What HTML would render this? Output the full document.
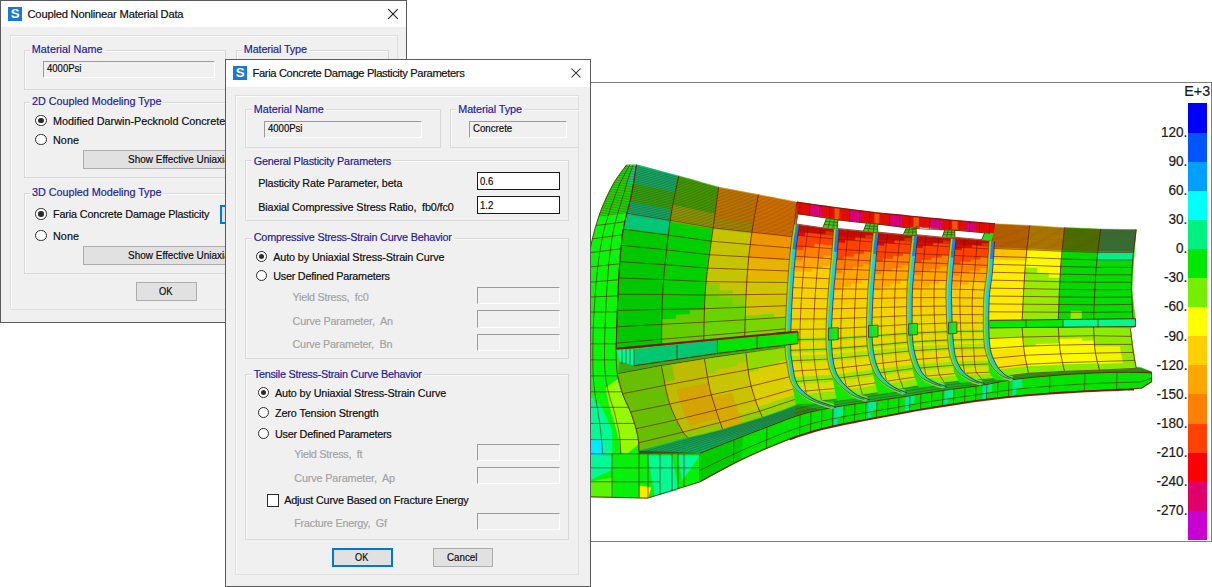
<!DOCTYPE html>
<html lang="en"><head><meta charset="utf-8"><title>Faria Concrete Damage Plasticity Parameters</title>
<style>
*{box-sizing:border-box;margin:0;padding:0}
html,body{width:1212px;height:587px;overflow:hidden;background:#fff}
body{position:relative;font-family:"Liberation Sans",sans-serif;color:#0c0c0c}
.abs,.t,.win,.grp,.fld,.btn,.radio,.chk,.panel,.inp,.icon,.tb{position:absolute}
.t{white-space:nowrap;display:block;-webkit-text-stroke:0.18px currentColor}
.win{background:#f0f0f0;border:1px solid #5b5b5b;overflow:hidden}
.tb{left:0;top:0;right:0;background:#fff}
.panel{border:1px solid #dfdfdf;box-shadow:inset 1px 1px 0 #fbfbfb}
.grp{border:1px solid #d9d9d9;box-shadow:inset 1px 1px 0 #fafafa}
.lbl{color:#23199a;background:#f0f0f0;padding:0 2px;margin-left:-2px}
.fld{border:1px solid;border-color:#9b9b9b #fff #fff #9b9b9b;background:#f0f0f0}
.inp{border:1px solid #1a1a1a;background:#fff}
.btn{background:#e1e1e1;border:1px solid #adadad;text-align:center}
.btn.foc{border:2px solid #0078d7}
.radio{border:1px solid #2b2b2b;border-radius:50%;background:#fff}
.radio.on::after{content:"";position:absolute;left:50%;top:50%;width:5.4px;height:5.4px;margin:-2.7px 0 0 -2.7px;border-radius:50%;background:#2b2b2b}
.chk{border:1px solid #2b2b2b;background:#fff}
.dis{color:#a3a3a3}
.ar{letter-spacing:0}
.icon{background:#1979d6;color:#fff;font-weight:bold;text-align:center}
</style></head>
<body>
<div class="abs" style="left:589.00px;top:82.20px;width:622.60px;height:460.00px;border:1px solid #7d7d7d;background:#fff;overflow:hidden"><svg class="abs" style="left:0;top:0" width="621" height="458" viewBox="590 83.2 621 458"><path d="M590 250l10.4-37.8l12.5-27.4l13.7-18.8l11.2-0.6l7.2 1.8l8 2.2l8 2.3l8 2.4l8 2.3l8 2.4l8 2.4l8 2.4l8 2.4l8 2.1l8 1.8l8 1.6l8 1.5l8 1.4l8 1.4l8 1l8 1.2l8 2l8 1.9l8 1.5l8 1.3l8 1.2l8 1.1l8 1.1l8 1.1l8 1l8 1.1l8 1l8 0.9l8 1l8 0.8l8 0.8l8 0.7l8 0.8l8 0.9l8 0.8l8 0.8l8 0.7l8 0.8l8 0.7l8 0.7l8 0.8l8 0.7l8 0.6l8 0.5l8 0.5l8 0.3l8 0.3l8 0.4l8 0.4l8 0.6l8 0.5l8 0.5l8 0.4l8 0.4l8 0.4l8 0.3l8 0.2l8 0.2l8 0.1l8 0.1l8 0.1l3.2-1.2l-4.5 59.7l3.7 29.5l0 8l-5 1.6l5.8 39.4l15.4 5l0 9l-10 6.3l-22.3 1.3l-49.8 2.4l-49.7 3.8l-37.8 4.2l-52.7 8l-37.3 6.8l-57.7 11.2l-33.6 9.2l-33.7 13.2l-33 15.1l-34 18.5l-52.3 16.3l-57.7-1.3z" fill="#28e10a" stroke="#28e10a" stroke-width=".5"/><path d="M626.6 165l-3.4 4.6l-3.4 4.6l-3.2 4.6l-3 4.9l-2.8 4.9l-2.5 5.1l-2.4 5.2l-2.3 5.2l-2.1 5.3l-2 5.3l-1.8 5.4l-1.7 5.4l-1.6 5.5l-1.4 5.5l-1.3 5.6l-1.2 5.5l-1.2 5.6l-1 5.6l-0.9 5.6l-0.8 5.7l-0.7 5.6l-0.7 5.7l-0.6 5.6l-0.5 5.7l-0.6 5.6l-0.4 5.7l-0.5 5.7l-0.3 5.7l-0.3 5.7l-0.3 5.6l-0.2 5.7l-0.2 5.7l-0.1 5.7l-0.1 5.7l0 5.7l-0.1 5.7l0 5.7l0 5.7l0 5.7l0.1 5.6l0 5.7l0.1 5.7l0.2 5.7l0.1 5.7l12.2-9.1l-0.3-5.4l-0.3-5.4l-0.2-5.5l-0.1-5.4l-0.1-5.4l0-5.5l0.1-5.4l0-5.4l0.1-5.4l0-5.5l0.2-5.4l0.1-5.4l0.2-5.5l0.2-5.4l0.2-5.4l0.3-5.4l0.3-5.4l0.4-5.5l0.3-5.4l0.5-5.4l0.4-5.4l0.5-5.4l0.6-5.4l0.6-5.4l0.7-5.4l0.7-5.4l0.8-5.3l0.9-5.4l1-5.3l1.1-5.3l1.2-5.3l1.4-5.2l1.6-5.2l1.6-5.2l1.7-5.2l1.8-5.1l1.9-5l2-5.1l2-5l2.1-4.9l2.2-4.8l2.5-4.8l2.5-4.6l2.5-4.7zM629.9 165l-2.5 4.7l-2.5 4.6l-2.5 4.8l-2.2 4.8l-2.1 4.9l-2 5l-2 5.1l-1.9 5l-1.8 5.1l-1.7 5.2l-1.6 5.2l-1.6 5.2l-1.4 5.2l-1.2 5.3l-1.1 5.3l-1 5.3l-0.9 5.4l-0.8 5.3l-0.7 5.4l-0.7 5.4l-0.6 5.4l-0.6 5.4l-0.5 5.4l-0.4 5.4l-0.5 5.4l-0.3 5.4l-0.4 5.5l-0.3 5.4l-0.3 5.4l-0.2 5.4l-0.2 5.4l-0.2 5.5l-0.1 5.4l-0.2 5.4l0 5.5l-0.1 5.4l0 5.4l-0.1 5.4l0 5.5l0.1 5.4l0.1 5.4l0.2 5.5l0.3 5.4l0.3 5.4l0.5 5.4l0.7 5.3l0.7 5.4l0.7 5.3l0.9 5.2l1 5.3l1 5.3l0.9 5.3l0.9 5.3l0.9 5.3l0.9 5.4l0.9 5.3l0.8 5.4l0.6 5.4l0.7 5.4l0.5 5.4l16.4-14.4l-0.4-5.1l-0.4-5.2l-0.5-5.1l-0.8-5.1l-1-5.1l-1.1-5l-1.2-5l-1.3-5l-1.3-4.9l-1.5-4.9l-1.5-4.8l-1.5-4.9l-1.3-5l-1.1-5l-1-5l-0.8-5.1l-0.6-5.1l-0.5-5.1l-0.3-5.2l-0.1-5.1l0-5.2l0-5.2l0-5.1l0.1-5.2l0.1-5.2l0.1-5.1l0.1-5.2l0.2-5.2l0.1-5.1l0.2-5.2l0.3-5.2l0.2-5.1l0.3-5.2l0.2-5.1l0.3-5.2l0.4-5.1l0.3-5.2l0.4-5.2l0.5-5.1l0.5-5.1l0.5-5.2l0.6-5.1l0.6-5.1l0.7-5.1l0.8-5.1l0.8-5.1l1.1-5.1l1.2-5l1.3-5l1.4-5l1.5-4.9l1.6-4.9l1.5-5l1.5-4.9l1.4-4.9l1.5-4.9l1.5-4.8l1.6-4.8l1.7-4.7l1.6-4.8zM626.8 184.1l-1.5 4.9l-1.4 4.9l-1.5 4.9l-1.5 5l-1.6 4.9l-1.5 4.9l-1.4 5l-1.3 5l-1.2 5l-1.1 5.1l-0.8 5.1l-0.8 5.1l-0.7 5.1l-0.6 5.1l-0.6 5.1l-0.5 5.2l-0.5 5.1l-0.5 5.1l-0.4 5.2l-0.3 5.2l-0.4 5.1l-0.3 5.2l-0.2 5.1l-0.3 5.2l-0.2 5.1l-0.3 5.2l-0.2 5.2l-0.1 5.1l-0.2 5.2l-0.1 5.2l-0.1 5.1l-0.1 5.2l-0.1 5.2l0 5.1l0 5.2l0 5.2l0.1 5.1l0.3 5.2l0.5 5.1l0.6 5.1l12.2-9.1l-0.9-4.8l-0.5-4.9l-0.4-4.9l-0.2-4.9l0-4.9l0-4.9l0-4.9l0.1-4.9l0.2-4.9l0.1-4.9l0.2-4.9l0.1-4.9l0.2-4.9l0.2-4.9l0.2-4.9l0.2-4.9l0.2-4.9l0.2-4.9l0.2-4.9l0.3-4.9l0.3-4.9l0.2-4.9l0.4-4.9l0.3-4.9l0.4-4.9l0.4-4.9l0.5-4.9l0.5-4.8l0.5-4.9l0.7-4.9l0.8-4.8l1-4.8l1.2-4.8l1.2-4.7l1.2-4.8l1.3-4.7l1.1-4.8l1-4.8l0.9-4.8l0.9-4.8zM621.9 458l0.4 5.2l0.4 5.1l16.3-14.3l-0.1-4.9l-0.2-4.9z" fill="#0af50a" stroke="#0af50a" stroke-width=".5"/><path d="M581.5 406.4l0.2 5.7l0.2 5.7l13-9.8l-0.7-5.3l-0.5-5.4zM586.8 474.5l0.8 5.6l0.8 5.6l0.8 5.7l16.6-14.1l-0.7-5.4l-0.6-5.4l-0.8-5.4z" fill="#00fa96" stroke="#00fa96" stroke-width=".5"/><path d="M581.9 417.8l0.3 5.7l0.3 5.6l0.3 5.7l14.4-10.9l-0.9-5.2l-0.7-5.3l-0.7-5.4zM585.4 463.2l0.6 5.6l0.8 5.7l16.9-13.4l-0.9-5.3l-0.9-5.4zM589.2 491.4l0.8 5.6l16.3-14.3l-0.5-5.4z" fill="#00f028" stroke="#00f028" stroke-width=".5"/><path d="M582.8 434.8l0.4 5.7l0.5 5.7l0.5 5.6l0.5 5.7l0.7 5.7l16.5-12.8l-0.9-5.3l-0.9-5.3l-0.9-5.3l-1-5.3l-1-5.3z" fill="#00f0fa" stroke="#00f0fa" stroke-width=".5"/><path d="M633.2 165l-1.6 4.8l-1.7 4.7l-1.6 4.8l-1.5 4.8l6.6 0.3l0.8-4.9l0.7-4.8l0.8-4.9l0.8-4.8z" fill="#00e896" stroke="#00e896" stroke-width=".5"/><path d="M606 388.1l0.8 5.1l1 5l1.1 5l1.3 5l1.5 4.9l1.5 4.8l1.5 4.9l1.3 4.9l1.3 5l1.2 5l1.1 5l1 5.1l0.8 5.1l0.5 5.1l16.8-13.8l-0.4-4.9l-0.8-4.8l-1.2-4.8l-1.3-4.7l-1.5-4.7l-1.6-4.6l-1.7-4.6l-2-4.5l-2.1-4.4l-2-4.5l-1.8-4.6l-1.6-4.6l-1.4-4.7l-1.1-4.8z" fill="#96fa00" stroke="#96fa00" stroke-width=".5"/><path d="M590 454l49 0l61 0l0 28l-52.3 16.3l-57.7-1.3z" fill="#05f00a" stroke="#05f00a" stroke-width=".5"/><path d="M590 456l22 0l0 14l-22 10zM590 400l10 5l12 25l0 24l-8 1l-2-15l-12 0zM648 456l24 0l6 34l-23 6zM678 456l21 0l-9 14l-8 10z" fill="#00fa96" stroke="#00fa96" stroke-width=".5"/><path d="M590 440l12 0l2 15l-14 1z" fill="#00ebfa" stroke="#00ebfa" stroke-width=".5"/><path d="M640 486l11 2l-3 10l-8 0z" fill="#faeb00" stroke="#faeb00" stroke-width=".5"/><path d="M590 482l22-4l0 19l-22 0z" fill="#5af500" stroke="#5af500" stroke-width=".5"/><path d="M636.5 165l-0.7 4.6l-0.8 4.6l-0.7 4.6l-0.8 4.6l13.9 3.1l0.8-4.4l0.8-4.5l0.8-4.4l0.8-4.5zM630 201.7l-1.2 4.5l-1.2 4.5l-1.1 4.5l14.5 2.4l0.9-4.5l1-4.4l1.1-4.4zM650.6 168.7l-0.8 4.5l-0.8 4.4l-0.8 4.5l-0.8 4.4l13.9 3.2l0.9-4.4l0.8-4.3l0.9-4.3l0.8-4.3zM644 204.3l-1.1 4.4l-1 4.4l-0.9 4.5l14.5 2.3l0.8-4.4l0.8-4.3l0.9-4.3zM664.7 172.4l-0.8 4.3l-0.9 4.3l-0.8 4.3l-0.9 4.4l13.9 3.1l0.9-4.2l0.9-4.2l0.9-4.1l0.9-4.2zM658 206.9l-0.9 4.3l-0.8 4.3l-0.8 4.4l14.5 2.3l0.6-4.3l0.6-4.2l0.8-4.2z" fill="#00b973" stroke="#00b973" stroke-width=".5"/><path d="M633.5 183.4l-0.8 4.6l-0.8 4.6l-0.9 4.6l-1 4.5l14 2.6l0.9-4.4l0.9-4.5l0.8-4.4l0.8-4.5zM647.4 186.5l-0.8 4.5l-0.8 4.4l-0.9 4.5l-0.9 4.4l14 2.6l0.8-4.3l0.9-4.3l0.8-4.3l0.8-4.3zM661.3 189.7l-0.8 4.3l-0.8 4.3l-0.9 4.3l-0.8 4.3l14 2.6l0.7-4.2l0.8-4.2l0.9-4.1l0.8-4.2z" fill="#23b214" stroke="#23b214" stroke-width=".5"/><path d="M626.5 215.2l-1.2 4.6l-1.1 4.5l-0.9 4.6l15 2l0.8-4.5l0.9-4.4l1-4.4zM641 217.6l-1 4.4l-0.9 4.4l-0.8 4.5l15 1.9l0.7-4.3l0.7-4.3l0.8-4.3zM655.5 219.9l-0.8 4.3l-0.7 4.3l-0.7 4.3l15 2l0.6-4.2l0.5-4.2l0.6-4.2z" fill="#00c676" stroke="#00c676" stroke-width=".5"/><path d="M623.3 228.9l-0.7 4.6l-0.6 4.6l-0.5 4.6l-0.5 4.7l-0.4 4.6l-0.4 4.7l-0.3 4.6l-0.4 4.7l-0.3 4.6l-0.3 4.7l-0.3 4.6l-0.2 4.7l-0.2 4.6l-0.2 4.7l-0.2 4.6l-0.2 4.7l-0.1 4.7l-0.2 4.6l-0.1 4.7l-0.2 4.6l-0.1 4.7l-0.2 4.7l-0.1 4.6l-0.1 4.7l-0.2 4.6l-0.1 4.7l15.1-1.5l0.1-4.5l0.1-4.5l0.1-4.5l0.1-4.6l0.2-4.5l0.1-4.5l0.1-4.6l0.1-4.5l0.2-4.5l0.1-4.5l0.2-4.6l0.2-4.5l0.2-4.5l0.2-4.5l0.3-4.6l0.3-4.5l0.3-4.5l0.3-4.5l0.4-4.5l0.4-4.5l0.4-4.5l0.5-4.6l0.4-4.5l0.5-4.5l0.6-4.5l0.6-4.4zM638.3 230.9l-0.6 4.4l-0.6 4.5l-0.5 4.5l-0.4 4.5l-0.5 4.6l-0.4 4.5l-0.4 4.5l-0.4 4.5l-0.3 4.5l-0.3 4.5l-0.3 4.5l-0.3 4.6l-0.2 4.5l-0.2 4.5l-0.2 4.5l-0.2 4.6l-0.1 4.5l-0.2 4.5l-0.1 4.5l-0.1 4.6l-0.1 4.5l-0.2 4.5l-0.1 4.6l-0.1 4.5l-0.1 4.5l-0.1 4.5l15-1.4l0.1-4.4l0.1-4.4l0.1-4.4l0.1-4.4l0.1-4.4l0.1-4.4l0.1-4.4l0.2-4.4l0.1-4.4l0.1-4.4l0.2-4.4l0.2-4.4l0.2-4.4l0.3-4.3l0.2-4.4l0.4-4.4l0.3-4.4l0.4-4.4l0.4-4.4l0.4-4.3l0.4-4.4l0.5-4.4l0.4-4.4l0.5-4.3l0.5-4.4l0.6-4.4zM653.3 232.8l-0.6 4.4l-0.5 4.4l-0.5 4.3l-0.4 4.4l-0.5 4.4l-0.4 4.4l-0.4 4.3l-0.4 4.4l-0.4 4.4l-0.3 4.4l-0.4 4.4l-0.2 4.4l-0.3 4.3l-0.2 4.4l-0.2 4.4l-0.2 4.4l-0.1 4.4l-0.1 4.4l-0.2 4.4l-0.1 4.4l-0.1 4.4l-0.1 4.4l-0.1 4.4l-0.1 4.4l-0.1 4.4l-0.1 4.4l15.1-1.5l0.1-4.3l0.1-4.2l0-4.3l0.1-4.3l0.1-4.2l0.1-4.3l0.1-4.2l0.1-4.3l0.1-4.3l0.1-4.2l0.2-4.3l0.2-4.2l0.2-4.3l0.3-4.3l0.3-4.2l0.3-4.3l0.4-4.2l0.4-4.3l0.4-4.2l0.5-4.2l0.4-4.3l0.5-4.2l0.4-4.3l0.5-4.2l0.5-4.2l0.5-4.3z" fill="#00c800" stroke="#00c800" stroke-width=".5"/><path d="M678.8 176.1l-0.9 4.2l-0.9 4.1l-0.9 4.2l-0.9 4.2l-0.8 4.2l-0.9 4.1l-0.8 4.2l14.1 3l0.7-4.1l0.8-4.1l0.7-4l0.8-4.1l0.7-4l0.8-4.1l0.8-4.1zM692.1 179.8l-0.8 4.1l-0.8 4.1l-0.7 4l-0.8 4.1l-0.7 4l-0.8 4.1l-0.7 4.1l14.1 2.9l0.7-3.9l0.6-4l0.6-3.9l0.6-4l0.7-3.9l0.6-4l0.6-3.9zM705.3 183.6l-0.6 3.9l-0.6 4l-0.7 3.9l-0.6 4l-0.6 3.9l-0.6 4l-0.7 3.9l14.1 3l0.6-3.9l0.5-3.8l0.5-3.8l0.5-3.9l0.5-3.8l0.5-3.9l0.5-3.8z" fill="#32b200" stroke="#32b200" stroke-width=".5"/><path d="M672.7 205.3l-0.7 4.2l-0.8 4.2l-0.6 4.2l-0.6 4.3l14.3 2.4l0.6-4.1l0.6-4.1l0.7-4l0.6-4.1zM686.8 208.3l-0.6 4.1l-0.7 4l-0.6 4.1l-0.6 4.1l14.3 2.5l0.6-4l0.6-3.9l0.5-4l0.6-4zM700.9 211.2l-0.6 4l-0.5 4l-0.6 3.9l-0.6 4l14.4 2.4l0.5-3.8l0.5-3.8l0.5-3.9l0.5-3.8z" fill="#87ac00" stroke="#87ac00" stroke-width=".5"/><path d="M670 222.2l-0.6 4.2l-0.5 4.2l-0.6 4.2l-0.5 4.3l-0.5 4.2l-0.5 4.2l-0.4 4.3l-0.5 4.2l-0.4 4.3l-0.5 4.2l-0.4 4.2l-0.4 4.3l-0.4 4.2l-0.3 4.3l-0.3 4.2l-0.3 4.3l-0.2 4.3l-0.2 4.2l-0.2 4.3l-0.1 4.2l-0.1 4.3l-0.1 4.3l-0.1 4.2l14.1-0.5l0.1-4.2l0.1-4.1l0.1-4.1l0.1-4.2l0.2-4.1l0.2-4.1l0.3-4.1l0.2-4.2l0.4-4.1l0.3-4.1l0.4-4.1l0.5-4.1l0.4-4.2l0.4-4.1l0.5-4.1l0.4-4.1l0.5-4.1l0.5-4.1l0.5-4.1l0.6-4.1l0.5-4.1l0.6-4.1l0.5-4.1zM684.3 224.6l-0.5 4.1l-0.6 4.1l-0.5 4.1l-0.6 4.1l-0.5 4.1l-0.5 4.1l-0.5 4.1l-0.4 4.1l-0.5 4.1l-0.4 4.1l-0.4 4.2l-0.5 4.1l-0.4 4.1l-0.3 4.1l-0.4 4.1l-0.2 4.2l-0.3 4.1l-0.2 4.1l-0.2 4.1l-0.1 4.2l-0.1 4.1l-0.1 4.1l14.1-0.4l0.1-4l0.1-4l0.2-4l0.1-4l0.2-4l0.3-4l0.3-4l0.3-4l0.4-4l0.4-3.9l0.5-4l0.4-4l0.5-4l0.4-4l0.5-3.9l0.5-4l0.5-4l0.6-3.9l0.5-4l0.5-4l0.6-4l0.5-3.9zM698.6 227.1l-0.5 3.9l-0.6 4l-0.5 4l-0.5 4l-0.6 3.9l-0.5 4l-0.5 4l-0.5 3.9l-0.4 4l-0.5 4l-0.4 4l-0.5 4l-0.4 3.9l-0.4 4l-0.3 4l-0.3 4l-0.3 4l-0.2 4l-0.1 4l-0.2 4l-0.1 4l14.1-0.3l0.1-3.9l0.2-3.8l0.2-3.9l0.2-3.9l0.2-3.8l0.3-3.9l0.4-3.9l0.4-3.8l0.4-3.9l0.5-3.8l0.5-3.9l0.4-3.8l0.5-3.8l0.5-3.9l0.5-3.8l0.6-3.9l0.5-3.8l0.5-3.8l0.6-3.9l0.5-3.8l0.6-3.9z" fill="#00d000" stroke="#00d000" stroke-width=".5"/><path d="M661.9 319.8l-0.1 4.3l-0.1 4.2l-0.1 4.3l0 4.3l-0.1 4.2l-0.1 4.3l14.1-1.3l0.1-4.2l0.1-4.1l0-4.1l0.1-4.2l0.1-4.1l0.1-4.1zM676.1 315.1l-0.1 4.2l-0.1 4.1l-0.1 4.1l-0.1 4.2l0 4.1l-0.1 4.1l-0.1 4.2l14.1-1.4l0.1-4l0.1-4l0-4l0.1-4l0.1-4l0.1-4l0.1-4zM690.3 310.7l-0.1 4l-0.1 4l-0.1 4l-0.1 4l-0.1 4l0 4l-0.1 4l-0.1 4l14.1-1.3l0.1-3.9l0.1-3.8l0-3.9l0.1-3.9l0.1-3.9l0.1-3.8l0.1-3.9l0.1-3.9z" fill="#64cd00" stroke="#64cd00" stroke-width=".5"/><path d="M718.6 187.3l-0.5 3.8l-0.5 3.9l-0.5 3.8l-0.5 3.9l-0.5 3.8l-0.5 3.8l-0.6 3.9l-0.5 3.8l13 1.7l0.5-3.7l0.6-3.8l0.5-3.7l0.6-3.7l0.5-3.8l0.6-3.7l0.5-3.8l0.6-3.7zM731.9 189.8l-0.6 3.7l-0.5 3.8l-0.6 3.7l-0.5 3.8l-0.6 3.7l-0.5 3.7l-0.6 3.8l-0.5 3.7l13 1.7l0.5-3.6l0.6-3.7l0.6-3.6l0.6-3.7l0.6-3.6l0.6-3.6l0.5-3.7l0.6-3.6zM745.1 192.3l-0.6 3.6l-0.5 3.7l-0.6 3.6l-0.6 3.6l-0.6 3.7l-0.6 3.6l-0.6 3.7l-0.5 3.6l12.9 1.7l0.6-3.6l0.6-3.5l0.7-3.5l0.6-3.6l0.6-3.5l0.6-3.5l0.7-3.6l0.6-3.5z" fill="#c88c00" stroke="#c88c00" stroke-width=".5"/><path d="M714.5 218l-0.5 3.9l-0.5 3.8l-0.5 3.8l12.9 1.4l0.5-3.7l0.6-3.7l0.5-3.8zM727.5 219.7l-0.5 3.8l-0.6 3.7l-0.5 3.7l12.9 1.4l0.6-3.6l0.5-3.7l0.6-3.6zM740.5 221.4l-0.6 3.6l-0.5 3.7l-0.6 3.6l12.9 1.4l0.6-3.5l0.5-3.6l0.6-3.5z" fill="#a5a000" stroke="#a5a000" stroke-width=".5"/><path d="M713 229.5l-0.6 3.9l-0.5 3.8l-0.6 3.9l-0.5 3.8l-0.5 3.8l-0.6 3.9l-0.5 3.8l-0.5 3.9l-0.5 3.8l-0.4 3.8l-0.5 3.9l-0.5 3.8l-0.4 3.9l-0.4 3.8l13.6 0.2l0.3-3.8l0.4-3.8l0.4-3.7l0.4-3.8l0.4-3.7l0.4-3.8l0.4-3.7l0.5-3.8l0.5-3.7l0.5-3.8l0.5-3.7l0.5-3.8l0.6-3.7l0.5-3.8zM725.9 230.9l-0.5 3.8l-0.6 3.7l-0.5 3.8l-0.5 3.7l-0.5 3.8l-0.5 3.7l-0.5 3.8l-0.4 3.7l-0.4 3.8l-0.4 3.7l-0.4 3.8l-0.4 3.7l-0.4 3.8l-0.3 3.8l-0.4 3.7l-0.2 3.8l13.6-0.1l0.2-3.6l0.3-3.7l0.3-3.7l0.3-3.7l0.3-3.6l0.4-3.7l0.3-3.7l0.4-3.6l0.4-3.7l0.4-3.7l0.4-3.6l0.5-3.7l0.5-3.6l0.5-3.7l0.5-3.6l0.5-3.7zM738.8 232.3l-0.5 3.7l-0.5 3.6l-0.5 3.7l-0.5 3.6l-0.5 3.7l-0.4 3.6l-0.4 3.7l-0.4 3.7l-0.4 3.6l-0.3 3.7l-0.4 3.7l-0.3 3.6l-0.3 3.7l-0.3 3.7l-0.3 3.7l-0.2 3.6l-0.2 3.7l13.7-0.2l0.2-3.5l0.2-3.6l0.2-3.6l0.2-3.6l0.2-3.6l0.3-3.5l0.3-3.6l0.3-3.6l0.3-3.6l0.3-3.6l0.4-3.5l0.4-3.6l0.4-3.6l0.5-3.5l0.4-3.6l0.5-3.5l0.5-3.6z" fill="#c4c400" stroke="#c4c400" stroke-width=".5"/><path d="M706 283.3l-0.4 3.9l-0.3 3.9l-0.2 3.8l13.6-0.1l0.3-3.8l0.2-3.8l0.4-3.7zM719 291l-0.3 3.8l-0.2 3.7l13.7-0.2l0.2-3.7l0.2-3.7zM732.4 294.6l-0.2 3.7l-0.1 3.7l-0.2 3.7l13.7-0.5l0.2-3.6l0.1-3.6l0.2-3.6z" fill="#8ccd00" stroke="#8ccd00" stroke-width=".5"/><path d="M705.1 294.9l-0.2 3.9l-0.2 3.9l-0.2 3.8l-0.1 3.9l-0.1 3.9l-0.1 3.9l-0.1 3.8l-0.1 3.9l-0.1 3.9l0 3.9l-0.1 3.8l-0.1 3.9l13.7-1.3l0.1-3.8l0-3.8l0.1-3.7l0.1-3.8l0.1-3.8l0.1-3.8l0.1-3.7l0.1-3.8l0.1-3.8l0.2-3.8l0.1-3.8l0.2-3.7zM718.5 298.5l-0.1 3.8l-0.2 3.8l-0.1 3.8l-0.1 3.8l-0.1 3.7l-0.1 3.8l-0.1 3.8l-0.1 3.8l-0.1 3.7l0 3.8l-0.1 3.8l13.6-1.3l0.1-3.7l0.1-3.7l0.1-3.7l0.1-3.6l0.1-3.7l0.1-3.7l0.1-3.7l0.1-3.7l0.1-3.6l0.2-3.7l0.1-3.7zM731.9 305.7l-0.1 3.6l-0.1 3.7l-0.1 3.7l-0.1 3.7l-0.1 3.7l-0.1 3.6l-0.1 3.7l-0.1 3.7l-0.1 3.7l13.7-1.3l0.1-3.6l0.1-3.6l0.1-3.6l0.1-3.6l0.1-3.5l0.1-3.6l0.1-3.6l0.1-3.6l0.1-3.6z" fill="#69d400" stroke="#69d400" stroke-width=".5"/><path d="M758.4 194.8l-0.6 3.5l-0.7 3.6l-0.6 3.5l-0.6 3.5l-0.6 3.6l-0.7 3.5l-0.6 3.5l-0.6 3.6l-0.6 3.5l-0.5 3.6l-0.6 3.5l13.5 1.5l0.6-3.5l0.5-3.4l0.6-3.5l0.5-3.4l0.6-3.5l0.5-3.4l0.6-3.4l0.5-3.5l0.5-3.4l0.6-3.5l0.5-3.4zM771.2 197.3l-0.5 3.4l-0.6 3.5l-0.5 3.4l-0.5 3.5l-0.6 3.4l-0.5 3.4l-0.6 3.5l-0.5 3.4l-0.6 3.5l-0.5 3.4l-0.6 3.5l13.5 1.4l0.6-3.3l0.5-3.4l0.5-3.3l0.6-3.4l0.4-3.3l0.5-3.4l0.4-3.3l0.5-3.4l0.4-3.3l0.5-3.4l0.4-3.4zM784 199.7l-0.4 3.4l-0.5 3.4l-0.4 3.3l-0.5 3.4l-0.4 3.3l-0.5 3.4l-0.4 3.3l-0.6 3.4l-0.5 3.3l-0.5 3.4l-0.6 3.3l13.5 1.5l0.6-3.2l0.5-3.3l0.5-3.2l0.5-3.3l0.4-3.3l0.3-3.2l0.4-3.3l0.4-3.3l0.3-3.3l0.4-3.2l0.3-3.3z" fill="#e48a00" stroke="#e48a00" stroke-width=".5"/><path d="M751.7 233.7l-0.5 3.6l-0.5 3.5l-0.4 3.6l-0.5 3.5l-0.4 3.6l-0.4 3.6l-0.4 3.5l13.8 0.8l0.3-3.4l0.4-3.5l0.3-3.5l0.4-3.4l0.5-3.5l0.4-3.5l0.5-3.4zM765.2 235.2l-0.5 3.4l-0.4 3.5l-0.5 3.5l-0.4 3.4l-0.3 3.5l-0.4 3.5l-0.3 3.4l13.8 0.8l0.3-3.3l0.2-3.4l0.3-3.4l0.4-3.4l0.4-3.3l0.4-3.4l0.5-3.4zM778.7 236.6l-0.5 3.4l-0.4 3.4l-0.4 3.3l-0.4 3.4l-0.3 3.4l-0.2 3.4l-0.3 3.3l13.8 0.8l0.2-3.3l0.2-3.2l0.3-3.3l0.3-3.3l0.3-3.3l0.5-3.2l0.4-3.3z" fill="#ee9600" stroke="#ee9600" stroke-width=".5"/><path d="M748.6 258.6l-0.3 3.6l-0.3 3.6l-0.3 3.6l-0.3 3.6l-0.3 3.5l-0.2 3.6l14.1 0.2l0.2-3.5l0.2-3.4l0.2-3.5l0.3-3.5l0.2-3.5l0.3-3.5zM762.4 259.4l-0.3 3.5l-0.2 3.5l-0.3 3.5l-0.2 3.5l-0.2 3.4l-0.2 3.5l14.2 0.2l0.1-3.3l0.2-3.4l0.1-3.4l0.2-3.4l0.2-3.4l0.2-3.4zM776.2 260.2l-0.2 3.4l-0.2 3.4l-0.2 3.4l-0.1 3.4l-0.2 3.4l-0.1 3.3l14.1 0.3l0.1-3.3l0.1-3.3l0.1-3.3l0.1-3.3l0.2-3.3l0.1-3.3z" fill="#e8b400" stroke="#e8b400" stroke-width=".5"/><path d="M746.9 280.1l-0.2 3.6l-0.2 3.6l-0.2 3.6l-0.2 3.5l-0.2 3.6l-0.1 3.6l-0.2 3.6l-0.1 3.6l-0.1 3.6l-0.1 3.6l14.3-0.8l0.1-3.5l0.1-3.5l0.1-3.5l0.2-3.5l0.1-3.4l0.2-3.5l0.1-3.5l0.2-3.5l0.1-3.5l0.2-3.5zM761 280.3l-0.2 3.5l-0.1 3.5l-0.2 3.5l-0.1 3.5l-0.2 3.5l-0.1 3.4l-0.2 3.5l-0.1 3.5l-0.1 3.5l-0.1 3.5l14.3-0.8l0.1-3.4l0.1-3.3l0.2-3.4l0.1-3.4l0.1-3.4l0.1-3.4l0.2-3.4l0.1-3.4l0.1-3.4l0.2-3.4zM775.2 280.5l-0.2 3.4l-0.1 3.4l-0.1 3.4l-0.2 3.4l-0.1 3.4l-0.1 3.4l-0.1 3.4l-0.2 3.4l-0.1 3.3l-0.1 3.4l-0.1 3.4l14.3-0.8l0.1-3.3l0.1-3.3l0.1-3.3l0.2-3.3l0.1-3.3l0.1-3.3l0.1-3.3l0.1-3.3l0.1-3.3l0.1-3.2l0.1-3.3z" fill="#d0c600" stroke="#d0c600" stroke-width=".5"/><path d="M745.3 316l-0.1 3.6l-0.1 3.5l-0.1 3.6l-0.1 3.6l-0.1 3.6l-0.1 3.6l14.3-1.4l0.1-3.5l0.1-3.4l0.1-3.5l0.1-3.5l0.1-3.5l0.1-3.5zM759.6 315.2l-0.1 3.5l-0.1 3.5l-0.1 3.5l-0.1 3.5l-0.1 3.4l-0.1 3.5l14.2-1.3l0.1-3.4l0.2-3.4l0.1-3.4l0.1-3.4l0.1-3.4l0.1-3.4zM773.8 317.8l-0.1 3.4l-0.1 3.4l-0.1 3.4l-0.2 3.4l-0.1 3.4l14.3-1.4l0.1-3.3l0.1-3.3l0.1-3.3l0.2-3.3l0.1-3.2z" fill="#78d700" stroke="#78d700" stroke-width=".5"/><path d="M626.6 165l-2.9 3.9l-2.9 3.9l-2.8 3.9l-2.6 3.9l-2.3 3.9l-2.1 3.9l-2 3.9l-1.9 3.9l-1.7 3.8l-1.7 3.9l-1.6 3.8l-1.4 3.8l-1.4 3.8l-1.3 3.8l-1.2 3.7l-1.1 3.7l-1.1 3.8l-0.9 3.6l-1 3.7l-0.8 3.6l-0.8 3.7l-0.8 3.6l-0.7 3.5l-0.7 3.6l-0.6 3.5l-0.6 3.5l-0.5 3.5l-0.5 3.5l-0.4 3.4l-0.5 3.4l-0.4 3.4l-0.4 3.4l-0.3 3.4l-0.4 3.4l-0.3 3.3l-0.3 3.4l-0.3 3.3l-0.3 3.3l-0.2 3.3l-0.3 3.4l-0.2 3.3l-0.2 3.4l-0.2 3.6l-0.2 3.6l-0.1 3.7l-0.2 3.6l-0.1 3.6l-0.1 3.6l-0.1 3.6l0 3.6l-0.1 3.6l0 3.7l-0.1 3.6l0 3.6l0 3.6l0 3.6l0 3.6l0 3.6l0 3.6l0.1 3.7l0 3.6l0 3.6l0.1 3.6l0.1 3.6l0 3.6l0.1 3.6l0.1 3.6l0.1 3.6l0.2 3.7l0.1 3.6l0.2 3.6l0.1 3.6l0.2 3.6l0.3 3.6l0.2 3.6l0.3 3.7l0.2 3.6l0.3 3.6l0.4 3.6l0.3 3.6M636.5 165l-0.6 3.6l-0.6 3.6l-0.5 3.6l-0.6 3.6l-0.6 3.7l-0.6 3.6l-0.7 3.6l-0.6 3.6l-0.8 3.6l-0.8 3.6l-0.9 3.6l-1 3.6l-0.9 3.7l-0.9 3.6l-0.9 3.6l-0.9 3.6l-0.8 3.6l-0.7 3.6l-0.5 3.6l-0.5 3.6l-0.4 3.7l-0.4 3.6l-0.3 3.6l-0.3 3.6l-0.4 3.6l-0.3 3.6l-0.2 3.6l-0.3 3.6l-0.3 3.7l-0.2 3.6l-0.2 3.6l-0.2 3.6l-0.2 3.6l-0.1 3.6l-0.2 3.6l-0.2 3.7l-0.1 3.6l-0.2 3.6l-0.1 3.6l-0.1 3.6l-0.2 3.6l-0.1 3.6l-0.2 3.6l-0.1 3.6l-0.1 3.7l-0.1 3.6l-0.1 3.6l-0.1 3.6l-0.1 3.6l-0.1 3.6l0 3.6l0 3.7l0 3.6l0 3.6l0.2 3.6l0.2 3.6l0.3 3.6l0.5 3.6l0.6 3.6l0.8 3.7l1 3.6l1.1 3.6l1.2 3.6l1.3 3.6l1.6 3.6l1.7 3.6l1.7 3.6l1.6 3.6l1.4 3.7l1.3 3.6l1.2 3.6l1.2 3.6l1 3.6l0.9 3.6l0.8 3.6l0.5 3.7l0.3 3.6l0.2 3.6l0.1 3.6l0.1 3.6M590 497l57.7 1.3l52.3-16.3l0-28M636.5 165l-1.5 9.2l-1.5 9.2l-1.6 9.2l-1.9 9.1l-2.4 9l-2.3 9.1l-2 9.1l-1.3 9.2l-1 9.3l-0.8 9.3l-0.7 9.3l-0.6 9.3l-0.5 9.3l-0.4 9.3l-0.4 9.3l-0.3 9.3l-0.3 9.3l-0.3 9.4l-0.2 9.3l-0.3 9.3M678.8 176.1l-1.8 8.3l-1.8 8.4l-1.7 8.3l-1.5 8.4l-1.4 8.4l-1.2 8.5l-1.1 8.4l-1 8.5l-0.9 8.5l-0.9 8.5l-0.9 8.4l-0.8 8.5l-0.6 8.5l-0.5 8.6l-0.4 8.5l-0.2 8.5l-0.2 8.5l-0.2 8.5l-0.1 8.6l-0.2 8.5M718.6 187.3l-1 7.7l-1 7.7l-1 7.6l-1.1 7.7l-1 7.7l-1.1 7.7l-1.1 7.7l-1 7.6l-1.1 7.7l-1 7.7l-0.9 7.7l-0.9 7.7l-0.8 7.7l-0.5 7.7l-0.4 7.8l-0.3 7.7l-0.2 7.8l-0.2 7.7l-0.1 7.8l-0.2 7.7M758.4 194.8l-1.3 7.1l-1.2 7l-1.3 7.1l-1.2 7.1l-1.1 7.1l-1.1 7.1l-0.9 7.1l-0.9 7.1l-0.8 7.1l-0.6 7.2l-0.6 7.2l-0.5 7.1l-0.4 7.2l-0.4 7.1l-0.3 7.2l-0.3 7.2l-0.2 7.2l-0.2 7.1l-0.2 7.2l-0.2 7.2M796.8 202.2l-0.7 6.5l-0.7 6.6l-0.7 6.5l-0.9 6.6l-1 6.5l-1 6.5l-0.8 6.5l-0.6 6.6l-0.4 6.5l-0.3 6.6l-0.2 6.6l-0.2 6.6l-0.2 6.5l-0.2 6.6l-0.2 6.6l-0.3 6.6l-0.2 6.6l-0.2 6.5l-0.3 6.6l-0.2 6.6" fill="none" stroke="#6e1400" stroke-width="0.88" stroke-opacity="0.9"/><path d="M629.9 165l-2.1 3.8l-2.2 3.8l-2 3.8l-1.9 3.8l-1.8 3.8l-1.6 3.8l-1.5 3.8l-1.5 3.8l-1.4 3.8l-1.4 3.8l-1.3 3.7l-1.3 3.8l-1.3 3.7l-1.1 3.7l-1.1 3.7l-1.1 3.7l-1 3.7l-0.8 3.6l-0.8 3.7l-0.7 3.6l-0.7 3.6l-0.7 3.6l-0.6 3.6l-0.5 3.6l-0.5 3.5l-0.5 3.6l-0.4 3.5l-0.5 3.5l-0.3 3.5l-0.4 3.5l-0.4 3.5l-0.3 3.5l-0.3 3.4l-0.3 3.5l-0.2 3.4l-0.3 3.4l-0.2 3.5l-0.3 3.4l-0.2 3.4l-0.2 3.4l-0.2 3.4l-0.2 3.5l-0.2 3.6l-0.1 3.6l-0.2 3.7l-0.1 3.6l-0.1 3.6l-0.1 3.6l-0.1 3.6l0 3.6l-0.1 3.6l0 3.7l0 3.6l0 3.6l0 3.6l0.1 3.6l0.1 3.6l0.1 3.6l0.3 3.6l0.2 3.7l0.4 3.6l0.4 3.6l0.4 3.6l0.5 3.6l0.6 3.6l0.6 3.6l0.6 3.6l0.7 3.6l0.5 3.7l0.5 3.6l0.6 3.6l0.4 3.6l0.5 3.6l0.5 3.6l0.4 3.6l0.3 3.7l0.3 3.6l0.3 3.6l0.2 3.6l0.3 3.6M633.2 165l-1.4 3.7l-1.3 3.7l-1.3 3.7l-1.3 3.7l-1.2 3.8l-1.1 3.7l-1 3.7l-1.1 3.7l-1.1 3.7l-1.1 3.6l-1.1 3.7l-1.2 3.7l-1.1 3.7l-1 3.6l-1 3.7l-1 3.6l-0.8 3.7l-0.8 3.6l-0.7 3.7l-0.6 3.6l-0.5 3.6l-0.5 3.6l-0.5 3.6l-0.4 3.6l-0.4 3.6l-0.4 3.6l-0.4 3.5l-0.3 3.6l-0.4 3.5l-0.2 3.6l-0.3 3.5l-0.3 3.6l-0.2 3.5l-0.3 3.5l-0.2 3.6l-0.2 3.5l-0.2 3.5l-0.2 3.5l-0.1 3.5l-0.2 3.6l-0.2 3.5l-0.2 3.5l-0.1 3.6l-0.2 3.6l-0.1 3.7l-0.1 3.6l-0.1 3.6l-0.1 3.6l-0.1 3.6l0 3.6l-0.1 3.6l0 3.7l0 3.6l0 3.6l0.1 3.6l0.1 3.6l0.3 3.6l0.3 3.6l0.4 3.6l0.5 3.7l0.7 3.6l0.7 3.6l0.9 3.6l0.9 3.6l1 3.6l1.2 3.6l1.2 3.6l1.1 3.6l1 3.7l0.9 3.6l0.8 3.6l0.8 3.6l0.8 3.6l0.7 3.6l0.6 3.6l0.4 3.7l0.3 3.6l0.3 3.6l0.1 3.6l0.2 3.6M595.9 225.7l28.9-3.7M592.4 239l30-4M589.4 252.9l31.5-3.9M587 267.5l32.7-3.5M585.1 282.7l33.5-2.7M583.6 297.6l34.3-1.6M582.5 312.3l34.8-0.3M581.6 328l35.1 0M581.2 344l35.1 0M581 360l35.2 0M581 376l36.6 0M581.2 392l40.7 0M581.5 407.5l47.1 0M582.2 423.6l52.4 0M583.2 439.8l55.1 0M612 454l0 43M639 454l0 43M648 454l0 44.2M660 454l0 40.5M672 454l0 36.7M678 454l0 34.9M684 454l0 33M590 454l110 0M590 468l110 0M590 482l70 0" fill="none" stroke="#6e1400" stroke-width="0.69" stroke-opacity="0.9"/><path d="M625.3 166.8l10.9-0.1M624 168.6l12-0.3M622.6 170.4l13.1-0.5M621.3 172.2l14.1-0.6M620 173.9l15.2-0.7M618.7 175.7l16.2-0.8M617.5 177.5l17.1-0.9M616.3 179.3l18.1-1.1M615.1 181.1l19-1.3M614 182.9l19.8-1.4M613 184.6l20.6-1.4M612 186.4l21.3-1.6M611.1 188.2l21.9-1.8M610.2 190l22.5-1.9M609.3 191.7l23.1-1.9M608.4 193.5l23.7-2.1M607.6 195.3l24.2-2.2M606.7 197l24.8-2.3M605.9 198.8l25.3-2.5M605.1 200.5l25.7-2.5M604.4 202.3l26-2.6M603.6 204.1l26.5-2.8M602.9 205.8l26.7-2.9M602.2 207.6l27-3M601.5 209.3l27.3-3.1M600.8 211l27.5-3.1M600.2 212.8l27.7-3.2M599.6 214.5l27.9-3.3M599 216.2l28.1-3.4" fill="none" stroke="#6e1400" stroke-width="0.56" stroke-opacity="0.7"/><path d="M626.9 213.4l43.3 7.1M623.2 229.3l45.1 6M621.2 245.5l45.4 4.6M619.8 261.8l45.2 3.1M618.7 278.1l44.9 1.7M618 294.4l44.7 0.3M617.4 310.7l44.7-1.1M616.9 327l44.9-2.5M616.4 343.3l45.1-3.9M616.2 349.8l45.2-4.4M670.2 220.5l43 7.5M668.3 235.3l43 6.1M666.6 250.1l42.8 4.8M665 264.9l42.7 3.4M663.6 279.8l42.6 2M662.7 294.7l42.3 0.6M662.1 309.6l42.4-0.7M661.8 324.5l42.3-2.1M661.5 339.4l42.3-3.4M661.4 345.4l42.3-4M713.2 228l38.8 4.3M711.3 241.4l38.9 3.3M709.4 254.9l39.4 2.3M707.7 268.3l39.9 1.4M706.2 281.8l40.5 0.5M705 295.3l41.1-0.5M704.5 308.9l41.1-1.5M704.1 322.4l41.1-2.5M703.8 336l41-3.5M703.7 341.4l41-3.9M752 232.3l40.4 4.5M750.2 244.7l40.7 3.5M748.8 257.2l41.3 2.5M747.6 269.7l42 1.5M746.7 282.3l42.5 0.4M746.1 294.8l42.8-0.5M745.6 307.4l42.9-1.6M745.2 319.9l42.9-2.6M744.8 332.5l42.9-3.7M744.7 337.5l42.8-4.1" fill="none" stroke="#6e1400" stroke-width="0.75" stroke-opacity="0.85"/><path d="M636.2 166.7l42.3 11M635.9 168.5l42.2 10.8M635.7 170.2l42.1 10.6M635.4 172l42 10.4M635.1 173.7l42 10.3M634.8 175.5l42 10.1M634.5 177.2l41.9 9.9M634.3 178.9l41.8 9.8M634 180.7l41.7 9.6M633.7 182.4l41.7 9.5M633.4 184.2l41.7 9.3M633.1 185.9l41.7 9.1M632.8 187.6l41.6 9M632.5 189.4l41.6 8.8M632.2 191.1l41.6 8.7M631.9 192.9l41.6 8.5M631.5 194.6l41.7 8.4M631.2 196.3l41.7 8.2M630.8 198l41.8 8.1M630.4 199.8l41.9 7.9M630 201.5l42 7.8M629.6 203.2l42.1 7.7M629.1 204.9l42.3 7.6M628.7 206.6l42.5 7.5M628.2 208.3l42.7 7.4M627.8 210l42.9 7.3M627.3 211.7l43.1 7.2M678.5 177.7l39.9 11.1M678.1 179.3l40.1 10.9M677.8 180.8l40.2 10.9M677.4 182.4l40.4 10.7M677.1 184l40.5 10.6M676.8 185.6l40.6 10.4M676.4 187.1l40.9 10.4M676.1 188.7l41 10.2M675.7 190.3l41.2 10.1M675.4 191.9l41.3 9.9M675.1 193.5l41.4 9.8M674.8 195l41.5 9.8M674.4 196.6l41.7 9.6M674.1 198.2l41.8 9.5M673.8 199.8l41.9 9.3M673.5 201.4l42 9.2M673.2 203l42.1 9M672.9 204.5l42.2 9M672.6 206.1l42.3 8.8M672.3 207.7l42.5 8.7M672 209.3l42.6 8.5M671.7 210.9l42.7 8.4M671.4 212.5l42.8 8.2M671.2 214.1l42.8 8.1M670.9 215.7l42.9 8M670.7 217.3l42.9 7.8M670.4 218.9l43 7.7M718.4 188.8l39.8 7.3M718.2 190.2l39.7 7.3M718 191.7l39.7 7.1M717.8 193.1l39.7 7.1M717.6 194.6l39.6 6.9M717.4 196l39.6 6.8M717.3 197.5l39.4 6.7M717.1 198.9l39.4 6.6M716.9 200.4l39.4 6.4M716.7 201.8l39.3 6.4M716.5 203.3l39.3 6.2M716.3 204.8l39.2 6.1M716.1 206.2l39.2 6M715.9 207.7l39.2 5.8M715.7 209.1l39.1 5.8M715.5 210.6l39.1 5.6M715.3 212l39.1 5.5M715.1 213.5l39.1 5.4M714.9 214.9l39 5.3M714.8 216.4l38.9 5.2M714.6 217.8l38.9 5.1M714.4 219.3l38.8 4.9M714.2 220.7l38.8 4.9M714 222.2l38.8 4.7M713.8 223.7l38.8 4.6M713.6 225.1l38.8 4.5M713.4 226.6l38.8 4.4M758.2 196.1l38.5 7.3M757.9 197.5l38.6 7.2M757.7 198.8l38.7 7.1M757.5 200.2l38.8 7M757.2 201.5l38.9 6.9M757 202.8l39 6.8M756.7 204.2l39.2 6.7M756.5 205.5l39.2 6.6M756.3 206.8l39.3 6.6M756 208.2l39.5 6.4M755.8 209.5l39.5 6.3M755.5 210.9l39.7 6.2M755.3 212.2l39.8 6.1M755.1 213.5l39.8 6M754.8 214.9l40 5.9M754.6 216.2l40 5.8M754.4 217.5l40.1 5.8M754.2 218.9l40.1 5.6M753.9 220.2l40.3 5.5M753.7 221.6l40.3 5.4M753.5 222.9l40.3 5.3M753.2 224.2l40.4 5.2M753 225.6l40.4 5.1M752.8 226.9l40.5 5M752.6 228.3l40.4 4.8M752.4 229.6l40.4 4.7M752.2 231l40.4 4.6" fill="none" stroke="#6e1400" stroke-width="0.53" stroke-opacity="0.7"/><path d="M634 349.6l83.4-9.6l0 13.6l-83.4 12.4z" fill="#00c870" stroke="#00c870" stroke-width=".5"/><path d="M717.4 340l80-8.2l0 12l-80 9.8z" fill="#00e400" stroke="#00e400" stroke-width=".5"/><path d="M616.5 349.2l17.5 0.4l0 16.4l-14-4z" fill="#00fa96" stroke="#00fa96" stroke-width=".5"/><path d="M620 362l14 4l83.4-12.4l80-9.8l0 2.7l-80.4 10.5l-57 9l-42 8z" fill="#3caa14" stroke="#3caa14" stroke-width=".5"/><path d="M616.2 349l181.2-17.2" fill="none" stroke="#8a0a00" stroke-width="2.0" stroke-opacity="0.95"/><path d="M634 366l83.4-12.4l80-9.8" fill="none" stroke="#6e1400" stroke-width="1.0" stroke-opacity="0.9"/><path d="M618 374l42-8l57-9l80.4-10.5" fill="none" stroke="#6e1400" stroke-width="0.88" stroke-opacity="0.9"/><path d="M634 349.6l0 16.4M677 344.9l0 15.3M717.4 340.5l0 14.2M757 336.2l0 13.1" fill="none" stroke="#6e1400" stroke-width="0.75" stroke-opacity="0.9"/><path d="M622 349.4l0 14.6M626 349.4l0 14.6M630 349.4l0 14.6" fill="none" stroke="#6e1400" stroke-width="0.62" stroke-opacity="0.9"/><path d="M617.4 374.6l0.8 3.2l0.8 3.3l0.8 3.2l0.9 3.2l0.9 3.2l1 3.2l1.2 3.1l1.3 3.1l1.4 3l1.4 3l1.4 3l1.3 3.1l1.2 3.1l1.1 3.1l1 3.2l1 3.2l0.9 3.2l0.9 3.2l0.8 3.3l0.6 3.2l0.4 3.3l0.3 3.3l0.1 3.4l0.1 3.3l12.2-3.2l-0.7-3l-0.5-3.2l-0.6-3.2l-0.7-3.2l-0.9-3.1l-0.9-3.2l-1-3.1l-1.1-3.1l-1-3.2l-1.1-3.1l-1.1-3.1l-1.2-3.1l-1.2-3.1l-1.3-3l-1.2-3l-1.3-3.1l-1.1-3.1l-1.1-3.1l-0.9-3.2l-0.8-3.2l-0.8-3.2l-0.8-3.2l-0.7-3.2l-0.8-3.2zM628.4 372.6l0.8 3.2l0.7 3.2l0.8 3.2l0.8 3.2l0.8 3.2l0.9 3.2l1.1 3.1l1.1 3.1l1.3 3.1l1.2 3l1.3 3l1.2 3.1l1.2 3.1l1.1 3.1l1.1 3.1l1 3.2l1.1 3.1l1 3.1l0.9 3.2l0.9 3.1l0.7 3.2l0.6 3.2l0.5 3.2l0.7 3l12.3-3.3l-1.3-2.6l-1-3l-0.9-3.1l-1-3.1l-1.1-3l-1.1-3.1l-1.2-3l-1.1-3.1l-1.2-3l-1.1-3.1l-1.2-3.1l-1.1-3l-1.2-3.1l-1.1-3.1l-1.1-3.1l-1-3l-1-3.1l-0.9-3.2l-0.9-3.2l-0.7-3.1l-0.7-3.2l-0.8-3.2l-0.6-3.2l-0.7-3.2zM639.5 370.6l0.7 3.2l0.6 3.2l0.8 3.2l0.7 3.2l0.7 3.1l0.9 3.2l0.9 3.2l1 3.1l1 3l1.1 3.1l1.1 3.1l1.2 3.1l1.1 3l1.2 3.1l1.1 3.1l1.2 3l1.1 3.1l1.2 3l1.1 3.1l1.1 3l1 3.1l0.9 3.1l1 3l1.3 2.6l12.3-3.3l-2-2.2l-1.4-2.9l-1.2-2.9l-1.3-2.9l-1.3-3l-1.3-3l-1.3-2.9l-1.3-3l-1.2-3l-1.3-3l-1.1-3.1l-1.1-3l-1.1-3.1l-1-3.1l-0.9-3.1l-0.9-3.1l-0.9-3.1l-0.7-3.2l-0.7-3.1l-0.7-3.2l-0.7-3.2l-0.6-3.2l-0.7-3.2l-0.6-3.2zM650.5 368.5l0.6 3.2l0.7 3.2l0.6 3.2l0.7 3.2l0.7 3.2l0.7 3.1l0.7 3.2l0.9 3.1l0.9 3.1l0.9 3.1l1 3.1l1.1 3.1l1.1 3l1.1 3.1l1.3 3l1.2 3l1.3 3l1.3 2.9l1.3 3l1.3 3l1.3 2.9l1.2 2.9l1.4 2.9l2 2.2l12.2-3.2l-2.6-1.9l-1.7-2.7l-1.7-2.8l-1.5-2.8l-1.5-2.9l-1.5-2.8l-1.5-2.9l-1.3-2.9l-1.4-3l-1.3-2.9l-1.2-3l-1.1-3.1l-0.9-3.1l-0.9-3.1l-0.8-3.1l-0.7-3.1l-0.7-3.2l-0.6-3.2l-0.6-3.1l-0.6-3.2l-0.6-3.2l-0.6-3.2l-0.6-3.1l-0.6-3.2z" fill="#68be00" stroke="#68be00" stroke-width=".5"/><path d="M661.5 366.5l0.6 3.2l0.6 3.1l0.6 3.2l0.6 3.2l0.6 3.2l10.6-2l-0.6-3.2l-0.5-3.1l-0.6-3.1l-0.6-3.1l-0.6-3.1z" fill="#82c300" stroke="#82c300" stroke-width=".5"/><path d="M664.5 382.4l0.6 3.1l0.6 3.2l0.7 3.2l0.7 3.1l0.8 3.1l0.9 3.1l0.9 3.1l1.1 3.1l1.2 3l1.3 2.9l1.4 3l1.3 2.9l1.5 2.9l1.5 2.8l1.5 2.9l1.5 2.8l1.7 2.8l9.2-2.4l-1.5-2.8l-1.4-2.9l-1.3-2.8l-1.4-2.9l-1.3-2.9l-1.3-2.9l-1.2-2.9l-1.2-2.9l-1.2-3l-1-3l-0.9-3l-0.8-3.1l-0.8-3.1l-0.6-3.1l-0.7-3.1l-0.6-3.1l-0.6-3.1zM672.2 364.8l0.6 3.1l0.6 3.1l0.6 3.1l0.5 3.1l0.6 3.2l0.6 3.1l0.6 3.1l0.7 3.1l10.5-2.1l-0.6-3.1l-0.6-3.1l-0.5-3l-0.6-3.1l-0.6-3.1l-0.5-3.1l-0.5-3l-0.6-3.1zM690 425.3l1.4 2.9l1.5 2.8l9.2-2.4l-1.3-2.8l-1.2-2.9zM683 363l0.6 3.1l0.5 3l0.5 3.1l0.6 3.1l0.6 3.1l0.5 3l0.6 3.1l0.6 3.1l10.6-2.2l-0.6-3l-0.6-3l-0.5-3l-0.5-3l-0.6-3.1l-0.5-3l-0.5-3l-0.5-3.1zM699.6 422.9l1.2 2.9l1.3 2.8l9.2-2.4l-1.1-2.9l-1.1-2.8zM693.8 361.2l0.5 3.1l0.5 3l0.5 3l0.6 3.1l0.5 3l0.5 3l0.6 3l0.6 3l10.5-2.1l-0.5-3l-0.6-2.9l-0.5-3l-0.5-3l-0.5-3l-0.5-2.9l-0.5-3l-0.5-3zM709.1 420.5l1.1 2.8l1.1 2.9l9.3-2.4l-1-2.9l-1-2.8z" fill="#bebc00" stroke="#bebc00" stroke-width=".5"/><path d="M683.7 433.4l1.7 2.7l2.6 1.9l8.6-2.1l-2.1-2.2l-1.6-2.7zM692.9 431l1.6 2.7l2.1 2.2l8.6-2.1l-1.7-2.4l-1.4-2.8zM702.1 428.6l1.4 2.8l1.7 2.4l8.7-2.2l-1.4-2.6l-1.2-2.8zM711.3 426.2l1.2 2.8l1.4 2.6l8.6-2.1l-1-2.9l-0.9-2.8z" fill="#96c800" stroke="#96c800" stroke-width=".5"/><path d="M677 389.7l0.6 3.1l0.8 3.1l0.8 3.1l0.9 3l1 3l1.2 3l1.2 2.9l1.2 2.9l1.3 2.9l1.3 2.9l1.4 2.9l1.3 2.8l9.6-2.4l-1.3-2.8l-1.2-2.9l-1.2-2.9l-1.1-2.9l-1.2-2.9l-1.1-2.9l-1-2.9l-1-3l-0.8-3l-0.8-3l-0.7-3.1l-0.7-3zM687.5 387.6l0.7 3l0.7 3.1l0.8 3l0.8 3l1 3l1 2.9l1.1 2.9l1.2 2.9l1.1 2.9l1.2 2.9l1.2 2.9l1.3 2.8l9.5-2.4l-1.1-2.9l-1.1-2.8l-1-2.9l-1.1-2.9l-1-2.9l-1-2.9l-1-2.9l-0.9-2.9l-0.8-3l-0.7-3l-0.7-3l-0.6-3zM698.1 385.4l0.6 3l0.7 3l0.7 3l0.8 3l0.9 2.9l1 2.9l1 2.9l1 2.9l1.1 2.9l1 2.9l1.1 2.8l1.1 2.9l9.5-2.4l-0.9-2.9l-1-2.9l-0.9-2.8l-0.9-2.9l-0.9-2.9l-1-2.9l-0.9-2.8l-0.8-2.9l-0.8-3l-0.7-2.9l-0.6-2.9l-0.6-3z" fill="#d4a500" stroke="#d4a500" stroke-width=".5"/><path d="M704.5 359.5l0.5 3l0.5 3l0.5 2.9l0.5 3l0.5 3l10.2-1.8l-0.5-2.9l-0.4-2.9l-0.5-3l-0.5-2.9l-0.4-2.9zM714.9 358l0.4 2.9l0.5 2.9l0.5 3l0.4 2.9l10.2-1.7l-0.4-2.9l-0.4-2.9l-0.4-2.8l-0.5-2.9zM725.2 356.5l0.5 2.9l0.4 2.8l0.4 2.9l0.4 2.9l10.2-1.8l-0.3-2.8l-0.4-2.8l-0.4-2.8l-0.4-2.8zM735.6 355l0.4 2.8l0.4 2.8l0.4 2.8l10.2-1.7l-0.3-2.7l-0.4-2.8l-0.3-2.7z" fill="#96d200" stroke="#96d200" stroke-width=".5"/><path d="M707 374.4l0.5 3l0.6 2.9l0.5 3l0.6 3l0.6 2.9l0.7 2.9l0.8 3l0.8 2.9l10-2.3l-0.8-2.8l-0.8-2.9l-0.6-2.9l-0.7-2.9l-0.5-2.9l-0.5-2.9l-0.5-2.9l-0.5-2.9zM716.7 369.7l0.5 2.9l0.5 2.9l0.5 2.9l0.5 2.9l0.5 2.9l0.7 2.9l0.6 2.9l0.8 2.9l0.8 2.8l9.9-2.2l-0.8-2.8l-0.7-2.8l-0.6-2.8l-0.6-2.9l-0.5-2.8l-0.5-2.9l-0.5-2.8l-0.4-2.9l-0.5-2.8zM726.9 368l0.5 2.8l0.4 2.9l0.5 2.8l0.5 2.9l0.5 2.8l0.6 2.9l0.6 2.8l0.7 2.8l0.8 2.8l0.8 2.7l0.9 2.8l0.9 2.8l0.9 2.7l0.9 2.8l0.9 2.7l1 2.7l1.1 2.7l9.8-2.7l-1-2.7l-1-2.6l-1-2.7l-0.9-2.7l-0.8-2.7l-0.9-2.7l-0.8-2.7l-0.8-2.7l-0.8-2.7l-0.7-2.8l-0.6-2.7l-0.6-2.8l-0.5-2.8l-0.4-2.8l-0.5-2.8l-0.4-2.8l-0.4-2.8zM736.8 363.4l0.3 2.8l0.4 2.8l0.4 2.8l0.5 2.8l0.4 2.8l0.5 2.8l0.6 2.8l0.6 2.7l0.7 2.8l0.8 2.7l0.8 2.7l0.8 2.7l0.9 2.7l0.8 2.7l0.9 2.7l1 2.7l1 2.6l1 2.7l9.9-2.8l-1.1-2.5l-1-2.6l-0.9-2.6l-0.9-2.6l-0.9-2.7l-0.8-2.6l-0.8-2.7l-0.8-2.6l-0.7-2.7l-0.7-2.7l-0.6-2.7l-0.5-2.7l-0.5-2.7l-0.4-2.8l-0.4-2.7l-0.4-2.8l-0.4-2.7l-0.3-2.8z" fill="#c8c500" stroke="#c8c500" stroke-width=".5"/><path d="M712.1 398l0.9 2.8l1 2.9l0.9 2.9l0.9 2.9l0.9 2.8l1 2.9l0.9 2.9l1 2.8l1 2.9l0.9 2.8l1 2.9l10-3l-1-2.8l-1-2.8l-1-2.7l-1-2.8l-1-2.8l-0.9-2.8l-0.9-2.8l-1-2.8l-0.9-2.8l-0.9-2.9l-0.8-2.8zM722.1 395.7l0.8 2.8l0.9 2.9l0.9 2.8l1 2.8l0.9 2.8l0.9 2.8l1 2.8l1 2.8l1 2.7l1 2.8l1 2.8l10-3l-1-2.7l-1.1-2.7l-1-2.7l-1.1-2.7l-1-2.7l-0.9-2.7l-0.9-2.8l-0.9-2.7l-0.9-2.8l-0.9-2.8l-0.8-2.7z" fill="#d7aa00" stroke="#d7aa00" stroke-width=".5"/><path d="M739.4 415.4l1 2.7l1.1 2.7l1 2.7l10-3l-1.1-2.6l-1.1-2.6l-1.1-2.6zM749.2 412.7l1.1 2.6l1.1 2.6l1.1 2.6l10-3l-1.1-2.5l-1.2-2.6l-1.1-2.5z" fill="#96cd00" stroke="#96cd00" stroke-width=".5"/><path d="M746 353.5l0.3 2.7l0.4 2.8l0.3 2.7l0.3 2.8l0.4 2.7l0.4 2.8l0.4 2.7l10.4-2l-0.4-2.7l-0.3-2.7l-0.2-2.6l-0.3-2.7l-0.3-2.7l-0.2-2.6l-0.3-2.7zM756.9 352l0.3 2.7l0.2 2.6l0.3 2.7l0.3 2.7l0.2 2.6l0.3 2.7l10.5-2l-0.2-2.6l-0.2-2.6l-0.2-2.5l-0.2-2.6l-0.2-2.6l-0.2-2.6zM767.8 350.5l0.2 2.6l0.2 2.6l0.2 2.6l0.2 2.5l0.2 2.6l0.2 2.6l10.5-2l-0.2-2.5l-0.1-2.5l-0.2-2.5l-0.1-2.5l-0.1-2.5l-0.2-2.5zM778.6 349l0.2 2.5l0.1 2.5l0.1 2.5l0.2 2.5l0.1 2.5l10.6-1.9l-0.1-2.4l-0.1-2.4l-0.1-2.5l0-2.4l-0.1-2.4z" fill="#91dc00" stroke="#91dc00" stroke-width=".5"/><path d="M748.5 372.7l0.4 2.8l0.5 2.7l0.5 2.7l0.6 2.7l0.7 2.7l0.7 2.7l0.8 2.6l0.8 2.7l0.8 2.6l0.9 2.7l0.9 2.6l0.9 2.6l1 2.6l9.3-3l-0.9-2.5l-0.8-2.6l-0.8-2.5l-0.8-2.6l-0.7-2.6l-0.7-2.6l-0.7-2.6l-0.7-2.6l-0.6-2.6l-0.5-2.6l-0.5-2.6l-0.4-2.7l-0.3-2.6zM758.5 368l0.4 2.7l0.3 2.6l0.4 2.7l0.5 2.6l0.5 2.6l0.6 2.6l0.7 2.6l0.7 2.6l0.7 2.6l0.7 2.6l0.8 2.6l0.8 2.5l0.8 2.6l0.9 2.5l9.3-3l-0.8-2.4l-0.7-2.5l-0.7-2.5l-0.6-2.5l-0.7-2.5l-0.6-2.6l-0.6-2.5l-0.6-2.5l-0.5-2.6l-0.5-2.5l-0.4-2.6l-0.3-2.5l-0.3-2.6l-0.3-2.6zM769 366l0.3 2.6l0.3 2.6l0.3 2.5l0.4 2.6l0.5 2.5l0.5 2.6l0.6 2.5l0.6 2.5l0.6 2.6l0.7 2.5l0.6 2.5l0.7 2.5l0.7 2.5l0.8 2.4l9.2-2.9l-0.6-2.5l-0.6-2.4l-0.5-2.4l-0.6-2.5l-0.6-2.4l-0.5-2.5l-0.6-2.4l-0.4-2.5l-0.5-2.4l-0.4-2.5l-0.3-2.5l-0.3-2.5l-0.2-2.5l-0.2-2.5zM779.3 361.5l0.2 2.5l0.2 2.5l0.2 2.5l0.3 2.5l0.3 2.5l0.4 2.5l0.5 2.4l0.4 2.5l0.6 2.4l0.5 2.5l0.6 2.4l0.6 2.5l0.5 2.4l0.6 2.4l0.6 2.5l9.3-3l-0.5-2.4l-0.5-2.3l-0.4-2.4l-0.5-2.4l-0.5-2.4l-0.4-2.4l-0.5-2.3l-0.4-2.4l-0.4-2.4l-0.3-2.4l-0.3-2.4l-0.2-2.4l-0.1-2.5l-0.1-2.4l-0.1-2.4z" fill="#dccf00" stroke="#dccf00" stroke-width=".5"/><path d="M758 407.4l1.1 2.5l1.1 2.5l1.2 2.6l1.1 2.5l8.6-3.1l-0.9-2.5l-1-2.5l-1-2.5l-0.9-2.5zM767.3 404.4l0.9 2.5l1 2.5l1 2.5l0.9 2.5l8.7-3.2l-0.9-2.4l-0.8-2.5l-0.8-2.4l-0.7-2.5zM776.6 401.4l0.7 2.5l0.8 2.4l0.8 2.5l0.9 2.4l8.6-3.1l-0.7-2.4l-0.6-2.4l-0.7-2.4l-0.6-2.4zM785.8 398.5l0.6 2.4l0.7 2.4l0.6 2.4l0.7 2.4l8.6-3.1l-0.5-2.4l-0.5-2.3l-0.5-2.4l-0.4-2.4z" fill="#96d700" stroke="#96d700" stroke-width=".5"/><path d="M622.6 393.9l42.5-8.4M630.6 412.2l39.1-7.9M636.1 428.9l40.3-8.9M638.7 443l44.3-10.7M665.1 385.5l42.4-8.1M669.7 404.3l41.6-9.2M676.4 420l39.7-9.7M683 432.3l37.2-9.7M707.5 377.4l40.6-7.4M711.3 395.1l39.9-8.8M716.1 410.3l39.3-10M720.2 422.6l39.6-11.2M748.1 370l41.9-8M751.2 386.3l40.2-9.8M755.4 400.3l38.4-11.3M759.8 411.4l36-12.1" fill="none" stroke="#6e1400" stroke-width="0.75" stroke-opacity="0.85"/><path d="M617.4 374.6l1.6 6.5l1.7 6.4l1.9 6.4l2.5 6.2l2.8 6l2.7 6.1l2.3 6.2l2 6.4l1.8 6.4l1.4 6.5l0.7 6.6l0.2 6.7M661.5 366.5l1.2 6.3l1.2 6.4l1.2 6.3l1.3 6.4l1.5 6.2l1.8 6.2l2.3 6.1l2.7 5.9l2.8 5.8l3 5.7l3.2 5.6l4.3 4.6M704.5 359.5l1 6l1 5.9l1 6l1.1 5.9l1.2 5.9l1.5 5.9l1.7 5.7l1.9 5.8l1.8 5.7l1.9 5.8l2 5.7l1.9 5.7M746 353.5l0.7 5.5l0.6 5.5l0.8 5.5l0.8 5.5l1 5.4l1.3 5.4l1.5 5.3l1.6 5.3l1.8 5.3l1.9 5.2l2.2 5l2.3 5.1M789.5 347.5l0.1 4.8l0.2 4.9l0.2 4.8l0.2 4.9l0.5 4.8l0.7 4.8l0.9 4.7l0.9 4.8l0.9 4.8l1 4.7l0.9 4.8l1 4.7" fill="none" stroke="#6e1400" stroke-width="0.88" stroke-opacity="0.9"/><path d="M639 451l0 0l16-4.1l15.9-4.1l15.9-4.5l16-3.7l16-4l15.8-4.6l15.8-4.8l15.7-4.9l15.5-5.4l15.4-5.9l37-6l0.3 8.4l-33.6 7.4l-33.7 12.5l-33 12.7l-34 13.4l-61 0.6z" fill="#00af5f" stroke="#00af5f" stroke-width=".5"/><path d="M797 400l11.9-1.2l11.8-1.3l11.8-1.3l11.9-1.6l11.7-1.9l11.8-1.8l11.8-2l11.7-1.9l11.8-1.9l11.8-1.7l11.8-1.7l11.8-1.6l11.8-1.2l11.9-1l11.9-0.8l11.9-0.9l11.9-1l11.8-1.5l11.8-1.5l11.9-1.1l11.9-0.7l11.9-0.6l11.9-0.5l11.9-0.4l11.9-0.4l11.9-0.4l11.9-0.7l11.9-0.5l11.9 0.7l11 4.4l0 1l-12-0.3l-12-0.2l-12 0.1l-12 0.3l-12 0.4l-12 0.6l-12 0.7l-12 0.9l-12 1l-11.9 1.2l-12 1.2l-11.9 1.7l-11.8 2.2l-11.8 2.3l-11.9 1.8l-11.9 1.4l-11.9 1.6l-11.9 1.7l-11.9 1.9l-11.8 1.9l-11.9 1.9l-11.9 1.8l-11.8 1.8l-11.9 1.7l-11.9 1.8l-11.9 1.8l-11.8 2l-11.8 2.3l-11.7 2.7l-11.5 3.5z" fill="#0fb223" stroke="#0fb223" stroke-width=".5"/><path d="M700 453.4l10.7-4.2l10.8-4.3l10.7-4.2l10.8-4.2l10.8-4.2l10.8-4.1l10.7-4.1l10.8-4.3l10.9-3.8l11.1-3.3l11.2-2.5l11.4-2.2l11.4-1.9l11.4-1.7l11.4-1.7l11.5-1.7l11.4-1.7l11.4-1.7l11.4-1.8l11.4-1.9l11.4-1.8l11.4-1.7l11.5-1.6l11.4-1.4l11.5-1.5l11.4-2l11.3-2.3l11.4-1.9l11.5-1.3l11.5-1.2l11.5-1l11.5-1l11.5-0.8l11.5-0.6l11.6-0.6l11.5-0.4l11.6-0.3l11.5 0l11.6 0.2l11.5 0.3l0 9l-9.8 6.2l-11.6 1.1l-11.7 0.3l-11.7 0.6l-11.7 0.5l-11.7 0.5l-11.6 0.7l-11.7 0.7l-11.7 0.8l-11.7 1l-11.6 0.9l-11.7 1.1l-11.6 1.2l-11.6 1.3l-11.7 1.6l-11.5 1.6l-11.6 1.8l-11.6 1.8l-11.5 1.8l-11.6 1.9l-11.5 2.1l-11.5 2.2l-11.5 2.2l-11.5 2.1l-11.5 2.2l-11.5 2.2l-11.5 2.3l-11.4 2.5l-11.3 2.9l-11.3 3.3l-11.1 3.7l-10.9 4.2l-10.8 4.4l-10.8 4.6l-10.7 4.7l-10.6 4.9l-10.5 5.2l-10.3 5.6l-10.3 5.6l-10.2 5.7z" fill="#00e400" stroke="#00e400" stroke-width=".5"/><path d="M700 453.4l43-16.9l-1.7 23.4l-41.3 22.1z" fill="#00cd00" stroke="#00cd00" stroke-width=".5"/><path d="M834.5 407.4l3-0.5l-0.4 18.5l-3 0.6zM868 402.2l3-0.4l-0.4 17l-3 0.6zM905.5 396.6l3-0.5l-0.4 15.6l-3 0.6zM945 390.4l3-0.5l-0.4 15.2l-3 0.4zM983 385.3l3-0.5l-0.4 14.7l-3 0.4zM1013 379.8l3-0.4l-0.4 16.8l-3 0.3z" fill="#00e1be" stroke="#00e1be" stroke-width=".5"/><path d="M837.5 406.9l6-1l-0.4 10l-6 1.1zM871 401.8l6-0.9l-0.4 9.2l-6 1zM908.5 396.1l6-1l-0.4 8.5l-6 1.1zM948 389.9l6-0.8l-0.4 8.3l-6 0.8zM986 384.8l6-1.1l-0.4 8.2l-6 1zM1016 379.4l6-0.7l-0.4 9.3l-6 0.6z" fill="#00f082" stroke="#00f082" stroke-width=".5"/><path d="M639 451.3l6.8 0l15.5-4.2l15.5-4.2l15.4-4.5l15.6-3.8l15.6-4.1l15.4-4.6l15.3-4.7l15.3-4.9l15.3-5.2l15-5.6M639 451.7l13.6-0.2l15-4.2l15.1-4.3l15-4.5l15.2-3.9l15.1-4.2l15-4.6l14.9-4.7l14.9-4.8l14.9-5.1l14.8-5.1M639 452l20.3-0.2l14.7-4.3l14.6-4.4l14.6-4.5l14.7-4l14.7-4.2l14.6-4.6l14.5-4.8l14.5-4.8l14.5-4.8l14.5-4.8M639 452.3l27.1-0.2l14.2-4.4l14.2-4.4l14.2-4.6l14.3-4.1l14.2-4.3l14.2-4.6l14.1-4.8l14.1-4.7l14.2-4.6l14.1-4.5M639 452.7l33.9-0.4l13.8-4.4l13.7-4.5l13.8-4.6l13.8-4.2l13.8-4.4l13.8-4.6l13.7-4.8l13.7-4.6l13.8-4.4l13.9-4.2M639 453l40.7-0.4l13.3-4.5l13.3-4.6l13.4-4.6l13.4-4.4l13.3-4.4l13.4-4.6l13.2-4.7l13.4-4.6l13.4-4.2l13.6-3.8M639 453.3l47.4-0.4l12.9-4.6l12.9-4.7l12.9-4.6l13-4.5l12.9-4.5l12.9-4.6l12.9-4.7l13-4.6l13.1-3.9l13.2-3.5M639 453.7l54.2-0.6l12.5-4.7l12.5-4.6l12.4-4.7l12.5-4.6l12.5-4.6l12.5-4.6l12.5-4.7l12.6-4.5l12.7-3.8l13-3.1M796.3 405l11.8-1.9l11.8-1.7l11.8-1.6l11.8-1.8l11.8-1.8l11.8-1.8l11.8-1.9l11.8-1.9l11.8-1.8l11.8-1.8l11.9-1.8l11.8-1.6l11.8-1.4l11.9-1.2l11.9-1l11.9-1.1l11.9-1.4l11.8-1.7l11.8-1.6l11.9-1.1l11.9-0.9l12-0.7l11.9-0.6l11.9-0.5l12-0.4l11.9-0.5l11.9-0.6l12-0.3l11.9 0.5l11.3 3.2M795.8 409.2l11.6-2.5l11.8-2.1l11.8-1.8l11.8-1.8l11.9-1.9l11.8-1.8l11.8-1.8l11.9-1.8l11.8-1.9l11.8-1.8l11.9-1.8l11.8-1.8l11.9-1.5l11.9-1.3l11.9-1.2l11.9-1.3l11.8-1.7l11.8-1.9l11.9-1.6l11.9-1.2l11.9-0.9l11.9-0.8l12-0.8l11.9-0.6l12-0.4l12-0.5l11.9-0.5l12-0.3l11.9 0.5l11.6 2.2M795.2 413.4l11.6-3.1l11.7-2.4l11.8-2.1l11.9-1.9l11.8-1.9l11.9-1.7l11.8-1.8l11.9-1.8l11.9-1.8l11.8-1.9l11.8-1.9l11.9-1.8l11.9-1.6l11.9-1.5l11.9-1.3l11.9-1.6l11.8-2l11.8-2.1l11.9-1.6l11.9-1.2l12-1.1l11.9-0.9l12-0.8l12-0.7l11.9-0.5l12-0.5l12-0.4l12-0.2l12 0.4l11.8 1.1" fill="none" stroke="#6e1400" stroke-width="0.56" stroke-opacity="0.6"/><path d="M700 453.4l10.7-4.2l10.8-4.3l10.7-4.2l10.8-4.2l10.8-4.2l10.8-4.1l10.7-4.1l10.8-4.3l10.9-3.8l11.1-3.3l11.2-2.5l11.4-2.2l11.4-1.9l11.4-1.7l11.4-1.7l11.5-1.7l11.4-1.7l11.4-1.7l11.4-1.8l11.4-1.9l11.4-1.8l11.4-1.7l11.5-1.6l11.4-1.4l11.5-1.5l11.4-2l11.3-2.3l11.4-1.9l11.5-1.3l11.5-1.2l11.5-1l11.5-1l11.5-0.8l11.5-0.6l11.6-0.6l11.5-0.4l11.6-0.3l11.5 0l11.6 0.2l11.5 0.3" fill="none" stroke="#6e1400" stroke-width="1.0" stroke-opacity="0.9"/><path d="M700 482l10.2-5.7l10.3-5.6l10.3-5.6l10.5-5.2l10.6-4.9l10.7-4.7l10.8-4.6l10.8-4.4l10.9-4.2l11.1-3.7l11.3-3.3l11.3-2.9l11.4-2.5l11.5-2.3l11.5-2.2l11.5-2.2l11.5-2.1l11.5-2.2l11.5-2.2l11.5-2.1l11.6-1.9l11.5-1.8l11.6-1.8l11.6-1.8l11.5-1.6l11.7-1.6l11.6-1.3l11.6-1.2l11.7-1.1l11.6-0.9l11.7-1l11.7-0.8l11.7-0.7l11.6-0.7l11.7-0.5l11.7-0.5l11.7-0.6l11.7-0.3l11.6-1.1l9.8-6.2" fill="none" stroke="#8a0a00" stroke-width="1.12" stroke-opacity="0.9"/><path d="M700 470.6l10.4-5.2l10.5-5l10.5-5l10.6-4.8l10.6-4.7l10.8-4.4l10.8-4.5l10.8-4.3l10.9-4l11.1-3.6l11.2-3l11.4-2.5l11.4-2.3l11.4-2.1l11.5-2l11.5-2l11.4-1.9l11.5-2l11.5-2.1l11.4-2l11.5-1.8l11.5-1.8l11.5-1.7l11.6-1.6l11.5-1.6l11.5-1.8l11.5-1.7l11.6-1.5l11.5-1.2l11.6-1l11.6-1l11.7-0.8l11.6-0.8l11.6-0.7l11.6-0.5l11.7-0.5l11.6-0.4l11.6-0.3l11.6-0.5l10.5-3.6M734 440l-0.5 23.8M767 427.3l-0.5 21.3M800 415l-0.5 20.6M811 412l-0.5 20.1M822 409.6l-0.5 19.4M833 407.6l-0.5 18.8M844 405.8l-0.5 18.3M855 404.1l-0.5 17.8M866 402.5l-0.5 17.3M877 400.9l-0.5 16.8M888 399.3l-0.5 16.3M899 397.6l-0.5 16M910 395.9l-0.5 15.6M921 394.1l-0.5 15.4M932 392.3l-0.5 15.3M943 390.6l-0.5 15.3M954 389.1l-0.5 15.1M965 387.8l-0.5 14.7M976 386.4l-0.5 14.5M987 384.6l-0.5 14.8M998 382.4l-0.5 15.6M1009 380.4l-0.5 16.5M1050 376l-0.5 17.4M1085 373.6l-0.5 17.6M1117 372.5l-0.5 17.2" fill="none" stroke="#6e1400" stroke-width="0.62" stroke-opacity="0.9"/><path d="M1151.6 373l0 9" fill="none" stroke="#6e1400" stroke-width="0.88" stroke-opacity="0.9"/><path d="M790 439.6l8-2.9l8-2.6l8-2.5l8-2.1l8-1.9l8-1.8l8-1.7l8-1.5l8-1.6l8-1.5l8-1.5l8-1.5l8-1.5l8-1.5l8-1.5l8-1.5l8-1.3l8-1.4l8-1.2l8-1.3l8-1.2l8-1.2l8-1.2l8-1.1l8-1l8-1l8-0.9l8-0.8l8-0.7l8-0.7l8-0.7l8-0.6l8-0.6l8-0.5l8-0.5l8-0.5l8-0.4l8-0.4l8-0.3l8-0.4l8-0.3l8-0.4l8-0.1" fill="none" stroke="#8a0a00" stroke-width="1.62" stroke-opacity="0.9"/><path d="M796.8 225l-0.5 3.5l-0.6 3.6l-0.5 3.5l10.1 0.9l0.5-3.5l0.5-3.5l0.5-3.4zM806.8 226.1l-0.5 3.4l-0.5 3.5l10.1 1l0.4-3.4l0.4-3.5zM816.7 227.1l-0.4 3.5l-0.4 3.4l10.1 1l0.3-3.4l0.3-3.5zM826.6 228.1l-0.3 3.5l10 1l0.3-3.4zM836.6 229.2l-0.3 3.4l-0.2 3.4l-0.3 3.4l-0.3 3.4l9.8 0.7l0.3-3.3l0.3-3.4l0.3-3.3l0.3-3.4zM846.5 230.1l-0.3 3.4l-0.3 3.3l-0.3 3.4l9.8 0.8l0.4-3.3l0.3-3.3l0.3-3.3zM856.4 231.1l-0.3 3.3l-0.3 3.3l9.8 0.8l0.3-3.2l0.4-3.2zM866.3 232.1l-0.4 3.2l9.9 0.9l0.4-3.2zM876.2 233l-0.4 3.2l-0.4 3.2l-0.3 3.1l-0.4 3.2l9.8 0.6l0.3-3.1l0.4-3.2l0.3-3.1l0.4-3.1zM885.9 233.8l-0.4 3.1l-0.3 3.1l-0.4 3.2l9.7 0.6l0.4-3.1l0.3-3.1l0.4-3zM895.6 234.6l-0.4 3l-0.3 3.1l9.7 0.7l0.4-3l0.3-3.1zM905.3 235.3l-0.3 3.1l9.7 0.7l0.3-3zM915 236.1l-0.3 3l-0.3 3l-0.4 3l-0.3 3l9.6 0.5l0.4-3l0.3-2.9l0.3-3l0.3-3zM924.6 236.7l-0.3 3l-0.3 3l-0.3 2.9l9.6 0.5l0.3-2.9l0.3-2.9l0.3-3zM934.2 237.3l-0.3 3l-0.3 2.9l9.7 0.6l0.3-2.9l0.3-2.9zM943.9 238l-0.3 2.9l9.6 0.6l0.3-2.9zM953.5 238.6l-0.3 2.9l-0.3 2.8l-0.3 2.9l-0.3 2.9l9.7 0.5l0.3-2.8l0.3-2.9l0.2-2.8l0.3-2.9zM963.1 239.2l-0.3 2.9l-0.2 2.8l-0.3 2.9l9.7 0.5l0.3-2.8l0.2-2.8l0.3-2.9zM972.8 239.8l-0.3 2.9l-0.2 2.8l9.6 0.6l0.3-2.8l0.2-2.8zM982.4 240.5l-0.2 2.8l9.6 0.6l0.2-2.8z" fill="#e10a00" stroke="#e10a00" stroke-width=".5"/><path d="M795.2 235.6l-0.5 3.5l-0.5 3.6l-0.4 3.5l-0.5 3.6l10.4 0.8l0.4-3.5l0.4-3.6l0.4-3.5l0.4-3.5zM805.8 233l-0.5 3.5l-0.4 3.5l-0.4 3.5l-0.4 3.6l10.3 0.8l0.3-3.5l0.4-3.4l0.4-3.5l0.4-3.5zM815.9 234l-0.4 3.5l-0.4 3.5l-0.4 3.4l10.3 0.9l0.3-3.4l0.4-3.5l0.3-3.4zM826.3 231.6l-0.3 3.4l-0.3 3.4l-0.4 3.5l-0.3 3.4l10.3 0.9l0.2-3.4l0.3-3.4l0.3-3.4l0.2-3.4zM835.5 242.8l-0.2 3.4l-0.3 3.4l-0.3 3.4l-0.3 3.4l-0.3 3.4l9.8 0.5l0.3-3.4l0.3-3.3l0.3-3.4l0.2-3.3l0.3-3.4zM845.6 240.2l-0.3 3.3l-0.3 3.4l-0.2 3.3l-0.3 3.4l-0.3 3.3l9.7 0.5l0.3-3.3l0.3-3.2l0.3-3.3l0.3-3.3l0.3-3.3zM855.8 237.7l-0.4 3.3l-0.3 3.3l-0.3 3.3l-0.3 3.3l-0.3 3.2l9.8 0.6l0.3-3.2l0.3-3.3l0.3-3.2l0.3-3.2l0.4-3.3zM865.9 235.3l-0.3 3.2l-0.4 3.3l-0.3 3.2l-0.3 3.2l-0.3 3.3l9.8 0.6l0.3-3.2l0.3-3.2l0.4-3.2l0.3-3.1l0.4-3.2zM874.7 245.7l-0.3 3.2l-0.3 3.2l-0.3 3.2l-0.3 3.2l-0.3 3.2l9.7 0.3l0.3-3.1l0.3-3.2l0.3-3.1l0.3-3.1l0.4-3.2zM884.8 243.2l-0.3 3.1l-0.4 3.2l-0.3 3.1l-0.3 3.1l-0.3 3.2l9.8 0.4l0.3-3.1l0.3-3.1l0.3-3.1l0.3-3.1l0.3-3.1zM894.9 240.7l-0.4 3.1l-0.3 3.1l-0.3 3.1l-0.3 3.1l-0.3 3.1l9.7 0.4l0.3-3l0.3-3.1l0.4-3l0.3-3l0.3-3.1zM905 238.4l-0.4 3l-0.3 3.1l-0.3 3l-0.4 3l-0.3 3.1l9.8 0.5l0.3-3l0.3-3l0.3-3l0.4-3l0.3-3zM913.7 248.1l-0.3 3l-0.3 3l-0.3 3l-0.4 3l-0.3 3l9.7 0.3l0.3-3l0.3-2.9l0.3-3l0.3-2.9l0.3-3zM923.7 245.6l-0.4 3l-0.3 3l-0.3 2.9l-0.3 3l-0.3 2.9l9.6 0.4l0.3-2.9l0.4-3l0.3-2.9l0.3-2.9l0.3-3zM933.6 243.2l-0.3 2.9l-0.3 3l-0.3 2.9l-0.3 2.9l-0.4 3l9.7 0.4l0.3-2.9l0.3-2.9l0.3-2.9l0.3-2.9l0.4-2.9zM943.6 240.9l-0.3 2.9l-0.4 2.9l-0.3 2.9l-0.3 2.9l-0.3 2.9l9.6 0.4l0.3-2.9l0.4-2.8l0.3-2.9l0.3-2.9l0.3-2.8zM952.3 250.1l-0.4 2.8l-0.3 2.9l-0.3 2.9l-0.3 2.8l-0.2 2.9l9.8 0.5l0.3-2.9l0.3-2.8l0.2-2.9l0.3-2.8l0.3-2.9zM962.3 247.8l-0.3 2.8l-0.3 2.9l-0.3 2.8l-0.2 2.9l-0.3 2.8l9.9 0.5l0.2-2.8l0.3-2.9l0.2-2.8l0.3-2.8l0.2-2.9zM972.3 245.5l-0.3 2.8l-0.2 2.9l-0.3 2.8l-0.2 2.8l-0.3 2.9l9.8 0.5l0.3-2.9l0.2-2.8l0.2-2.8l0.2-2.8l0.2-2.8zM982.2 243.3l-0.3 2.8l-0.2 2.8l-0.2 2.8l-0.2 2.8l-0.2 2.8l9.8 0.6l0.2-2.8l0.2-2.8l0.1-2.8l0.2-2.8l0.2-2.8z" fill="#ff4200" stroke="#ff4200" stroke-width=".5"/><path d="M793.3 249.8l-0.3 3.5l-0.4 3.6l-0.3 3.5l10.4 0.7l0.3-3.5l0.3-3.5l0.4-3.5zM804.1 247.1l-0.4 3.5l-0.4 3.5l-0.3 3.5l10.4 0.7l0.3-3.5l0.3-3.4l0.4-3.5zM814.7 244.4l-0.3 3.5l-0.4 3.5l-0.3 3.4l-0.3 3.5l10.3 0.7l0.3-3.4l0.4-3.4l0.3-3.5l0.3-3.4zM825 245.3l-0.3 3.4l-0.3 3.5l-0.4 3.4l10.4 0.8l0.3-3.4l0.3-3.4l0.3-3.4zM834.1 259.8l-0.4 3.4l-0.3 3.4l-0.3 3.4l-0.3 3.3l9.8 0.3l0.3-3.3l0.3-3.4l0.3-3.3l0.4-3.3zM844.2 256.9l-0.3 3.4l-0.4 3.3l-0.3 3.3l-0.3 3.4l9.8 0.3l0.3-3.3l0.3-3.3l0.3-3.3l0.3-3.3zM854.2 254.1l-0.3 3.3l-0.3 3.3l-0.3 3.3l-0.3 3.3l9.8 0.4l0.3-3.2l0.3-3.3l0.3-3.2l0.3-3.3zM864.3 251.5l-0.3 3.2l-0.3 3.3l-0.3 3.2l-0.3 3.3l9.8 0.4l0.3-3.2l0.3-3.2l0.3-3.2l0.3-3.2zM873.2 261.7l-0.3 3.2l-0.3 3.2l-0.3 3.2l-0.3 3.2l9.8 0.1l0.3-3.1l0.2-3.2l0.3-3.1l0.3-3.2zM883.2 258.9l-0.3 3.1l-0.3 3.2l-0.3 3.1l-0.2 3.2l9.7 0.2l0.3-3.1l0.3-3.1l0.3-3.1l0.3-3.1zM893.3 256.2l-0.3 3.1l-0.3 3.1l-0.3 3.1l-0.3 3.1l9.7 0.2l0.3-3l0.3-3.1l0.3-3l0.3-3.1zM903.3 253.6l-0.3 3l-0.3 3.1l-0.3 3l-0.3 3.1l9.7 0.3l0.3-3l0.3-3l0.4-3l0.3-3zM912.1 263.1l-0.3 3l-0.2 3l-0.3 3l-0.3 3l9.7 0.2l0.3-3l0.2-2.9l0.3-3l0.3-3zM922.1 260.4l-0.3 3l-0.3 3l-0.3 3l-0.2 2.9l9.6 0.3l0.3-3l0.3-2.9l0.2-3l0.3-2.9zM932 257.9l-0.3 2.9l-0.3 2.9l-0.2 3l-0.3 2.9l9.7 0.3l0.2-2.9l0.3-2.9l0.3-2.9l0.3-2.9zM942 255.4l-0.3 2.9l-0.3 2.9l-0.3 2.9l-0.3 2.9l9.7 0.3l0.3-2.9l0.2-2.9l0.3-2.8l0.3-2.9zM950.8 264.4l-0.3 2.9l-0.3 2.9l-0.2 2.8l-0.2 2.9l9.8 0.4l0.3-2.9l0.2-2.8l0.3-2.9l0.2-2.8zM960.9 262l-0.3 2.9l-0.2 2.8l-0.3 2.9l-0.2 2.8l9.9 0.4l0.2-2.8l0.3-2.8l0.2-2.9l0.3-2.8zM971 259.7l-0.2 2.8l-0.3 2.8l-0.2 2.9l-0.3 2.8l9.9 0.4l0.3-2.8l0.2-2.8l0.2-2.8l0.2-2.8zM981.1 257.3l-0.3 2.9l-0.2 2.8l-0.2 2.8l-0.2 2.8l9.8 0.4l0.3-2.8l0.2-2.8l0.2-2.8l0.2-2.7z" fill="#ff7f00" stroke="#ff7f00" stroke-width=".5"/><path d="M792.3 260.4l-0.3 3.6l-0.3 3.5l-0.3 3.6l10.4 0.6l0.3-3.6l0.3-3.5l0.3-3.5zM803 257.6l-0.3 3.5l-0.3 3.5l-0.3 3.5l-0.3 3.6l10.3 0.5l0.3-3.5l0.3-3.4l0.3-3.5l0.4-3.5zM813.4 258.3l-0.4 3.5l-0.3 3.5l-0.3 3.4l10.3 0.6l0.4-3.4l0.3-3.4l0.3-3.5zM824 255.6l-0.3 3.4l-0.3 3.5l-0.3 3.4l10.3 0.7l0.3-3.4l0.4-3.4l0.3-3.4zM832.8 273.3l-0.4 3.4l-0.3 3.4l-0.3 3.4l-0.3 3.4l-0.3 3.4l9.9 0l0.3-3.3l0.3-3.3l0.3-3.4l0.3-3.3l0.3-3.4zM842.9 270.3l-0.3 3.3l-0.3 3.4l-0.3 3.3l-0.3 3.4l-0.3 3.3l9.8 0.1l0.3-3.3l0.3-3.3l0.3-3.3l0.3-3.3l0.3-3.3zM853 267.3l-0.3 3.3l-0.3 3.3l-0.3 3.3l-0.3 3.3l-0.3 3.3l9.9 0.1l0.2-3.2l0.3-3.3l0.3-3.2l0.3-3.3l0.3-3.2zM863.1 264.5l-0.3 3.2l-0.3 3.2l-0.3 3.3l-0.3 3.2l-0.3 3.3l9.9 0.1l0.2-3.2l0.3-3.1l0.3-3.2l0.3-3.2l0.3-3.2zM872 274.5l-0.3 3.1l-0.2 3.2l-0.3 3.2l-0.2 3.2l-0.2 3.2l9.7 0l0.2-3.2l0.3-3.1l0.2-3.2l0.3-3.1l0.3-3.2zM882.1 271.5l-0.3 3.1l-0.3 3.2l-0.3 3.1l-0.2 3.2l-0.3 3.1l9.8 0l0.2-3.1l0.3-3.1l0.3-3.1l0.2-3.1l0.3-3.1zM892.1 268.6l-0.3 3.1l-0.3 3.1l-0.2 3.1l-0.3 3.1l-0.3 3.1l9.8 0l0.2-3.1l0.3-3l0.3-3.1l0.2-3l0.3-3.1zM902.1 265.8l-0.3 3l-0.3 3.1l-0.2 3l-0.3 3.1l-0.3 3l9.8 0.1l0.3-3l0.2-3l0.3-3l0.3-3l0.2-3zM911 275.1l-0.2 3l-0.3 3l-0.3 3l-0.2 3l-0.1 3l9.7 0.1l0.2-3l0.2-3l0.2-3l0.3-2.9l0.2-3zM921 272.3l-0.3 3l-0.2 3l-0.3 2.9l-0.2 3l-0.2 3l9.7 0.1l0.2-3l0.2-2.9l0.2-3l0.3-2.9l0.2-2.9zM930.9 269.6l-0.3 3l-0.2 2.9l-0.3 2.9l-0.2 3l-0.2 2.9l9.7 0.1l0.2-2.9l0.2-2.9l0.3-2.9l0.2-2.9l0.3-2.9zM940.8 267l-0.2 2.9l-0.3 2.9l-0.2 2.9l-0.3 2.9l-0.2 2.9l9.7 0.2l0.2-2.9l0.3-2.9l0.2-2.9l0.2-2.8l0.3-2.9zM949.8 275.9l-0.3 2.9l-0.2 2.9l-0.2 2.8l-0.1 2.9l9.6 0.3l0.2-2.9l0.3-2.8l0.3-2.9l0.2-2.8zM959.9 273.4l-0.3 2.9l-0.2 2.8l-0.3 2.9l-0.3 2.8l9.7 0.3l0.4-2.8l0.3-2.8l0.3-2.9l0.3-2.8zM970 271l-0.2 2.8l-0.3 2.8l-0.3 2.9l-0.3 2.8l9.7 0.3l0.4-2.8l0.3-2.8l0.3-2.8l0.3-2.8zM980.2 268.6l-0.3 2.8l-0.3 2.8l-0.3 2.8l-0.3 2.8l-0.4 2.8l9.8 0.3l0.4-2.8l0.4-2.7l0.3-2.8l0.3-2.8l0.2-2.8z" fill="#ffa600" stroke="#ffa600" stroke-width=".5"/><path d="M791.4 271.1l-0.2 3.6l-0.3 3.5l-0.3 3.6l-0.2 3.5l-0.2 3.6l10.2 0.4l0.3-3.6l0.2-3.5l0.3-3.5l0.3-3.5l0.3-3.5zM801.8 271.7l-0.3 3.5l-0.3 3.5l-0.3 3.5l-0.2 3.5l10.3 0.4l0.2-3.4l0.3-3.5l0.3-3.5l0.3-3.5zM812.4 268.7l-0.3 3.5l-0.3 3.5l-0.3 3.5l-0.3 3.5l10.3 0.4l0.3-3.4l0.3-3.5l0.3-3.4l0.3-3.5zM823.1 265.9l-0.4 3.4l-0.3 3.5l-0.3 3.4l-0.3 3.5l-0.3 3.4l10.3 0.4l0.3-3.4l0.3-3.4l0.4-3.4l0.3-3.3l0.3-3.4zM831.2 290.3l-0.3 3.4l-0.2 3.4l-0.2 3.4l-0.2 3.4l-0.2 3.4l9.9-0.2l0.2-3.4l0.2-3.3l0.2-3.4l0.2-3.3l0.3-3.4zM841.4 287l-0.3 3.3l-0.3 3.4l-0.2 3.3l-0.2 3.4l-0.2 3.3l10-0.1l0.1-3.3l0.2-3.3l0.2-3.3l0.3-3.3l0.2-3.3zM851.5 283.8l-0.3 3.3l-0.2 3.3l-0.3 3.3l-0.2 3.3l-0.2 3.3l-0.1 3.3l9.9-0.2l0.2-3.3l0.2-3.2l0.1-3.3l0.3-3.2l0.2-3.2l0.3-3.3zM861.6 280.7l-0.2 3.2l-0.3 3.3l-0.2 3.2l-0.3 3.2l-0.1 3.3l-0.2 3.2l9.9-0.1l0.2-3.2l0.1-3.2l0.3-3.2l0.2-3.2l0.2-3.2l0.3-3.2zM870.8 290.4l-0.3 3.2l-0.1 3.2l-0.2 3.2l-0.1 3.2l-0.1 3.2l9.9-0.3l0.1-3.1l0.1-3.2l0.1-3.1l0.1-3.2l0.2-3.1zM880.7 287.2l-0.2 3.2l-0.2 3.1l-0.1 3.2l-0.1 3.1l-0.1 3.2l9.8-0.3l0.1-3.1l0.1-3.1l0.1-3.1l0.2-3.1l0.2-3.1zM890.7 284.1l-0.2 3.1l-0.2 3.1l-0.2 3.1l-0.1 3.1l-0.1 3.1l-0.1 3.1l9.9-0.3l0.1-3l0-3.1l0.1-3l0.2-3.1l0.2-3.1l0.2-3zM900.7 281l-0.2 3.1l-0.2 3l-0.2 3.1l-0.2 3.1l-0.1 3l0 3.1l9.8-0.2l0.1-3.1l0-3l0.2-3l0.1-3l0.2-3l0.3-3zM909.9 290.1l-0.2 3l0 3l-0.1 3.1l0 3l0 3l9.9-0.1l-0.1-3l0-3l0.1-3l0-3l0.1-2.9zM919.8 287.2l-0.2 3l-0.1 2.9l0 3l-0.1 3l0 3l9.9-0.1l-0.1-2.9l0.1-3l0-2.9l0.1-3l0.1-2.9zM929.7 284.3l-0.2 3l-0.1 2.9l-0.1 3l0 2.9l-0.1 3l0.1 2.9l9.8-0.1l0-2.9l-0.1-2.9l0.1-2.9l0-2.9l0.1-3l0.2-2.9zM939.6 281.5l-0.2 2.9l-0.2 2.9l-0.1 3l0 2.9l-0.1 2.9l0.1 2.9l9.8-0.1l-0.1-2.8l0-2.9l0.1-2.9l0.1-2.9l0.1-2.9l0.2-2.8zM949 287.4l-0.1 2.9l-0.1 2.9l0 2.9l0.1 2.8l0.1 2.9l0 2.9l9.4 0.1l-0.1-2.8l0-2.9l0-2.9l0.1-2.8l0.1-2.9l0.1-2.8zM958.8 284.8l-0.2 2.9l-0.1 2.8l-0.1 2.9l-0.1 2.8l0 2.9l0 2.9l9.4 0.1l0-2.8l0.1-2.9l0.1-2.8l0.1-2.8l0.3-2.9l0.2-2.8zM968.9 282.3l-0.4 2.8l-0.2 2.8l-0.3 2.9l-0.1 2.8l-0.1 2.8l-0.1 2.9l9.4 0.1l0.1-2.8l0.2-2.8l0.2-2.8l0.3-2.8l0.3-2.8l0.4-2.8zM978.6 282.6l-0.4 2.8l-0.3 2.8l-0.3 2.8l-0.2 2.8l-0.2 2.8l9.5 0.2l0.2-2.8l0.3-2.8l0.4-2.7l0.4-2.8l0.4-2.8z" fill="#facd00" stroke="#facd00" stroke-width=".5"/><path d="M790.2 288.9l-0.3 3.6l-0.2 3.5l-0.2 3.6l-0.2 3.6l-0.2 3.5l-0.1 3.6l-0.2 3.6l-0.2 3.5l-0.1 3.6l10.2 0l0.2-3.5l0.1-3.6l0.2-3.5l0.2-3.5l0.2-3.5l0.2-3.6l0.2-3.5l0.2-3.5l0.2-3.5zM800.7 285.7l-0.3 3.6l-0.2 3.5l-0.2 3.5l-0.2 3.5l-0.2 3.6l-0.2 3.5l-0.2 3.5l-0.2 3.5l-0.1 3.6l-0.2 3.5l10.3 0l0.1-3.5l0.2-3.5l0.1-3.5l0.2-3.5l0.2-3.5l0.2-3.4l0.2-3.5l0.2-3.5l0.3-3.5l0.3-3.5zM811.2 282.7l-0.2 3.4l-0.3 3.5l-0.3 3.5l-0.2 3.5l-0.2 3.5l-0.2 3.4l-0.2 3.5l-0.2 3.5l-0.1 3.5l-0.2 3.5l-0.1 3.5l10.2 0l0.1-3.5l0.2-3.4l0.2-3.5l0.1-3.4l0.2-3.5l0.2-3.4l0.3-3.5l0.2-3.4l0.3-3.4l0.2-3.5l0.3-3.4zM821.5 283.1l-0.3 3.4l-0.2 3.5l-0.3 3.4l-0.2 3.4l-0.3 3.5l-0.2 3.4l-0.2 3.5l-0.1 3.4l-0.2 3.5l-0.2 3.4l-0.1 3.5l10.2-0.1l0.2-3.4l0.1-3.4l0.2-3.4l0.2-3.4l0.2-3.4l0.2-3.4l0.2-3.4l0.2-3.4l0.3-3.4l0.3-3.4l0.3-3.4zM830.1 307.3l-0.2 3.4l-0.2 3.4l-0.1 3.4l-0.2 3.4l10.1-0.4l0.1-3.3l0.2-3.4l0.1-3.3l0.1-3.4zM840.2 303.7l-0.2 3.4l-0.1 3.4l-0.1 3.3l-0.2 3.4l-0.1 3.3l10.1-0.4l0.1-3.3l0.1-3.3l0.1-3.3l0.1-3.3l0.2-3.3zM850.2 303.6l-0.2 3.3l-0.1 3.3l-0.1 3.3l-0.1 3.3l-0.1 3.3l10.1-0.4l0-3.3l0.1-3.2l0.1-3.3l0.1-3.2l0.1-3.3zM860.3 300.1l-0.2 3.3l-0.1 3.3l-0.1 3.2l-0.1 3.3l-0.1 3.2l0 3.3l10-0.4l0.1-3.3l0-3.2l0.1-3.2l0.1-3.2l0.1-3.2l0.1-3.2zM870 306.4l-0.1 3.2l-0.1 3.2l0 3.2l-0.1 3.3l10-0.5l0-3.2l0.1-3.2l0-3.1l0.1-3.2zM880 303l-0.1 3.1l-0.1 3.2l0 3.1l-0.1 3.2l0 3.2l10-0.5l0-3.2l0-3.1l0.1-3.1l0-3.1l0-3.1zM889.8 302.7l0 3.1l0 3.1l-0.1 3.1l0 3.1l0 3.2l10-0.5l0-3.1l0-3.1l0-3l0-3.1l0-3.1zM899.8 299.4l-0.1 3l0 3.1l0 3.1l0 3l0 3.1l0 3.1l10-0.5l0-3.1l-0.1-3l0-3l0-3l0-3l0-3zM909.6 305.2l0 3l0 3l0.1 3l0 3.1l10-0.3l-0.1-3l0-3l-0.1-2.9l0-3zM919.4 302.1l0.1 3l0 3l0.1 2.9l0 3l0.1 3l9.9-0.3l-0.1-2.9l0-2.9l-0.1-3l-0.1-2.9l0-3zM929.3 302l0 3l0.1 2.9l0.1 3l0 2.9l0.1 2.9l10-0.2l-0.1-2.9l-0.1-2.9l-0.1-3l-0.1-2.9l-0.1-2.9zM939.1 299l0 2.9l0.1 2.9l0.1 2.9l0.1 3l0.1 2.9l0.1 2.9l9.9-0.3l-0.1-2.8l-0.1-2.9l-0.1-2.9l-0.2-2.9l0-2.9l-0.1-2.9zM949 304.7l0.2 2.9l0.1 2.9l0.1 2.9l0.1 2.8l9.2 0.1l-0.1-2.9l-0.1-2.8l-0.1-2.9l0-2.9zM958.3 302l0.1 2.8l0 2.9l0.1 2.9l0.1 2.8l0.1 2.9l9.2 0l-0.1-2.8l0-2.9l-0.1-2.8l0-2.8l0-2.9zM967.7 299.3l0 2.8l0 2.9l0 2.8l0.1 2.8l0 2.9l0.1 2.8l9.2 0.1l0-2.9l-0.1-2.8l0-2.8l0-2.8l0.1-2.8l0-2.9zM977.2 296.6l-0.1 2.8l0 2.9l-0.1 2.8l0 2.8l0 2.8l0.1 2.8l0 2.9l9.2 0l0-2.8l0-2.8l0-2.8l0.1-2.8l0-2.8l0.1-2.8l0.2-2.8z" fill="#f4d400" stroke="#f4d400" stroke-width=".5"/><path d="M788.5 321l-0.2 3.6l-0.1 3.5l-0.1 3.6l-0.1 3.6l0 3.6l10.2-0.3l0.1-3.5l0.1-3.5l0.1-3.6l0.1-3.5l0.1-3.5zM798.7 321l-0.1 3.5l-0.1 3.5l-0.1 3.6l-0.1 3.5l-0.1 3.5l10.3-0.2l0-3.5l0.1-3.5l0.1-3.5l0.1-3.4l0.2-3.5zM809 321l-0.2 3.5l-0.1 3.4l-0.1 3.5l-0.1 3.5l0 3.5l10.2-0.2l0.1-3.5l0.1-3.4l0.1-3.5l0.1-3.4l0.1-3.4zM819.2 321l-0.1 3.4l-0.1 3.4l-0.1 3.5l-0.1 3.4l-0.1 3.5l10.3-0.2l0-3.4l0.1-3.4l0.1-3.4l0.1-3.5l0.1-3.4zM829.4 320.9l-0.1 3.4l-0.1 3.5l-0.1 3.4l-0.1 3.4l0 3.4l10.2-0.7l0-3.4l0.1-3.3l0-3.4l0.1-3.3l0.1-3.4zM839.5 320.5l-0.1 3.4l-0.1 3.3l0 3.4l-0.1 3.3l0 3.4l10.2-0.7l0-3.3l0-3.3l0.1-3.3l0-3.3l0.1-3.3zM849.6 320.1l-0.1 3.3l0 3.3l-0.1 3.3l0 3.3l0 3.3l10.2-0.6l0-3.3l0-3.3l0-3.2l0-3.3l0.1-3.2zM859.7 319.7l-0.1 3.2l0 3.3l0 3.2l0 3.3l0 3.3l10.2-0.7l-0.1-3.2l0-3.2l0-3.2l0-3.2l0-3.2zM869.7 319.3l0 3.2l0 3.2l0 3.2l0 3.2l0.1 3.2l10.1-0.8l-0.1-3.1l0-3.2l-0.1-3.1l0-3.2l0-3.1zM879.7 318.8l0 3.1l0 3.2l0.1 3.1l0 3.2l0.1 3.1l10.1-0.7l-0.1-3.1l-0.1-3.1l0-3.1l0-3.1l-0.1-3.1zM889.7 318.3l0.1 3.1l0 3.1l0 3.1l0.1 3.1l0.1 3.1l10-0.7l0-3.1l-0.1-3.1l-0.1-3l0-3.1l-0.1-3zM899.7 317.8l0.1 3l0 3.1l0.1 3l0.1 3.1l0 3.1l10.1-0.8l-0.1-3l-0.1-3l0-3l-0.1-3l-0.1-3zM909.7 317.3l0.1 3l0.1 3l0 3l0.1 3l0.1 3l10.1-0.4l-0.1-3l-0.1-3l-0.1-2.9l-0.1-3l-0.1-3zM919.7 317l0.1 3l0.1 3l0.1 2.9l0.1 3l0.1 3l10-0.4l-0.1-3l-0.1-2.9l-0.1-3l-0.2-2.9l-0.1-3zM929.6 316.7l0.1 3l0.2 2.9l0.1 3l0.1 2.9l0.1 3l10.1-0.4l-0.2-3l-0.1-2.9l-0.1-2.9l-0.2-2.9l-0.1-2.9zM939.6 316.5l0.1 2.9l0.2 2.9l0.1 2.9l0.1 2.9l0.2 3l10-0.5l-0.1-2.8l-0.2-2.9l-0.2-2.9l-0.1-2.9l-0.2-2.9zM949.5 316.2l0.2 2.9l0.1 2.9l0.2 2.9l0.2 2.9l0.1 2.8l9.1 0l-0.2-2.9l-0.1-2.8l-0.1-2.9l-0.1-2.9l-0.2-2.8zM958.7 316.3l0.2 2.8l0.1 2.9l0.1 2.9l0.1 2.8l0.2 2.9l9-0.1l-0.1-2.8l-0.1-2.9l-0.1-2.8l-0.1-2.8l-0.1-2.9zM967.9 316.3l0.1 2.9l0.1 2.8l0.1 2.8l0.1 2.9l0.1 2.8l9.1-0.1l-0.1-2.8l-0.1-2.8l-0.1-2.8l0-2.8l-0.1-2.8zM977.1 316.4l0.1 2.8l0 2.8l0.1 2.8l0.1 2.8l0.1 2.8l9 0l0-2.8l-0.1-2.8l0-2.8l-0.1-2.8l0-2.8z" fill="#ead800" stroke="#ead800" stroke-width=".5"/><path d="M788 338.9l0 3.5l10.2-0.2l0-3.6zM798.2 338.6l0 3.6l10.3-0.3l0-3.5zM808.5 338.4l0 3.5l10.2-0.3l0-3.4zM818.7 338.2l0 3.4l10.3-0.2l0-3.4zM829 338l0 3.4l10.2-0.7l0-3.4zM839.2 337.3l0 3.4l10.2-0.8l0-3.3zM849.4 336.6l0 3.3l10.2-0.7l0-3.2zM859.6 336l0 3.2l10.2-0.7l0-3.2zM869.8 335.3l0 3.2l10.1-0.8l0-3.2zM879.9 334.5l0 3.2l10.1-0.8l0-3.1zM890 333.8l0 3.1l10.1-0.8l-0.1-3zM900 333.1l0.1 3l10.1-0.8l-0.1-3zM910.1 332.3l0.1 3l10.1-0.4l-0.1-3zM920.2 331.9l0.1 3l10.1-0.5l-0.2-2.9zM930.2 331.5l0.2 2.9l10-0.4l-0.1-2.9zM940.3 331.1l0.1 2.9l10.1-0.5l-0.2-2.9zM950.3 330.6l0.2 2.9l9-0.1l-0.1-2.8zM959.4 330.6l0.1 2.8l9.1-0.1l-0.2-2.8zM968.4 330.5l0.2 2.8l9 0l-0.1-2.9zM977.5 330.4l0.1 2.9l9-0.1l-0.1-2.8z" fill="#a5e200" stroke="#a5e200" stroke-width=".5"/><path d="M788 342.4l0 3.6l0.1 3.6l10.3-0.4l-0.1-3.5l-0.1-3.5zM798.2 342.2l0.1 3.5l0.1 3.5l10.2-0.3l-0.1-3.5l0-3.5zM808.5 341.9l0 3.5l0.1 3.5l10.2-0.4l0-3.4l-0.1-3.5zM818.7 341.6l0.1 3.5l0 3.4l10.3-0.3l-0.1-3.4l0-3.4zM829 341.4l0 3.4l0.1 3.4l10.2-0.8l-0.1-3.4l0-3.3zM839.2 340.7l0 3.3l0.1 3.4l10.2-0.9l0-3.3l-0.1-3.3zM849.4 339.9l0.1 3.3l0 3.3l10.3-0.8l-0.1-3.2l-0.1-3.3zM859.6 339.2l0.1 3.3l0.1 3.2l10.2-0.8l-0.1-3.2l-0.1-3.2zM869.8 338.5l0.1 3.2l0.1 3.2l10.1-0.9l-0.1-3.1l-0.1-3.2zM879.9 337.7l0.1 3.2l0.1 3.1l10.1-0.9l-0.1-3.1l-0.1-3.1zM890 336.9l0.1 3.1l0.1 3.1l10.1-0.9l-0.1-3l-0.1-3.1zM900.1 336.1l0.1 3.1l0.1 3l10.1-0.8l-0.1-3l-0.1-3.1zM910.2 335.3l0.1 3.1l0.1 3l10.2-0.6l-0.2-2.9l-0.1-3zM920.3 334.9l0.1 3l0.2 2.9l10.1-0.5l-0.2-2.9l-0.1-3zM930.4 334.4l0.1 3l0.2 2.9l10.1-0.5l-0.2-2.9l-0.2-2.9zM940.4 334l0.2 2.9l0.2 2.9l10.1-0.5l-0.2-2.9l-0.2-2.9zM950.5 333.5l0.2 2.9l0.2 2.9l9-0.2l-0.2-2.8l-0.2-2.9zM959.5 333.4l0.2 2.9l0.2 2.8l8.9-0.1l-0.1-2.8l-0.1-2.9zM968.6 333.3l0.1 2.9l0.1 2.8l9-0.1l-0.1-2.8l-0.1-2.8zM977.6 333.3l0.1 2.8l0.1 2.8l9-0.1l-0.1-2.8l-0.1-2.8z" fill="#e6d800" stroke="#e6d800" stroke-width=".5"/><path d="M788.1 349.6l0.2 3.5l10.2-0.3l-0.1-3.6zM798.4 349.2l0.1 3.6l10.3-0.4l-0.2-3.5zM808.6 348.9l0.2 3.5l10.2-0.4l-0.2-3.5zM818.8 348.5l0.2 3.5l10.2-0.4l-0.1-3.4zM829.1 348.2l0.1 3.4l10.2-0.9l-0.1-3.3zM839.3 347.4l0.1 3.3l10.3-0.9l-0.2-3.3zM849.5 346.5l0.2 3.3l10.2-0.8l-0.1-3.3zM859.8 345.7l0.1 3.3l10.2-0.9l-0.1-3.2zM870 344.9l0.1 3.2l10.1-0.9l-0.1-3.2zM880.1 344l0.1 3.2l10.2-1l-0.2-3.1zM890.2 343.1l0.2 3.1l10.1-0.9l-0.2-3.1zM900.3 342.2l0.2 3.1l10.1-0.9l-0.2-3zM910.4 341.4l0.2 3l10.1-0.6l-0.1-3zM920.6 340.8l0.1 3l10.1-0.5l-0.1-3zM930.7 340.3l0.1 3l10.2-0.6l-0.2-2.9zM940.8 339.8l0.2 2.9l10.1-0.5l-0.2-2.9zM950.9 339.3l0.2 2.9l8.9-0.2l-0.1-2.9zM959.9 339.1l0.1 2.9l9-0.1l-0.2-2.9zM968.8 339l0.2 2.9l8.9-0.2l-0.1-2.8zM977.8 338.9l0.1 2.8l9-0.1l-0.1-2.8z" fill="#a0e400" stroke="#a0e400" stroke-width=".5"/><path d="M788.3 353.1l0.3 3.6l10.2-0.4l-0.3-3.5zM798.5 352.8l0.3 3.5l10.2-0.4l-0.2-3.5zM808.8 352.4l0.2 3.5l10.2-0.5l-0.2-3.4zM819 352l0.2 3.4l10.2-0.4l-0.2-3.4zM829.2 351.6l0.2 3.4l10.2-0.9l-0.2-3.4zM839.4 350.7l0.2 3.4l10.2-0.9l-0.1-3.4zM849.7 349.8l0.1 3.4l10.3-1l-0.2-3.2zM859.9 349l0.2 3.2l10.2-0.9l-0.2-3.2zM870.1 348.1l0.2 3.2l10.1-1l-0.2-3.1zM880.2 347.2l0.2 3.1l10.1-1l-0.1-3.1zM890.4 346.2l0.1 3.1l10.1-0.9l-0.1-3.1zM900.5 345.3l0.1 3.1l10.1-1l-0.1-3zM910.6 344.4l0.1 3l10.2-0.6l-0.2-3zM920.7 343.8l0.2 3l10.1-0.6l-0.2-2.9zM930.8 343.3l0.2 2.9l10.1-0.6l-0.1-2.9zM941 342.7l0.1 2.9l10.2-0.6l-0.2-2.8zM951.1 342.2l0.2 2.8l8.9-0.1l-0.2-2.9zM960 342l0.2 2.9l8.9-0.2l-0.1-2.8zM969 341.9l0.1 2.8l9-0.2l-0.2-2.8zM977.9 341.7l0.2 2.8l8.9-0.1l-0.1-2.8z" fill="#e8dc00" stroke="#e8dc00" stroke-width=".5"/><path d="M788.6 356.7l0.3 3.5l0.5 3.6l10.1-0.5l-0.4-3.5l-0.3-3.5zM798.8 356.3l0.3 3.5l0.4 3.5l10.2-0.5l-0.4-3.5l-0.3-3.4zM809 355.9l0.3 3.4l0.4 3.5l10.2-0.5l-0.4-3.4l-0.3-3.5zM819.2 355.4l0.3 3.5l0.4 3.4l10.2-0.5l-0.4-3.4l-0.3-3.4zM829.4 355l0.3 3.4l0.4 3.4l10.1-1l-0.3-3.4l-0.3-3.3zM839.6 354.1l0.3 3.3l0.3 3.4l10.2-1.1l-0.3-3.3l-0.3-3.2zM849.8 353.2l0.3 3.2l0.3 3.3l10.1-1l-0.2-3.2l-0.2-3.3zM860.1 352.2l0.2 3.3l0.2 3.2l10.2-1l-0.2-3.2l-0.2-3.2zM870.3 351.3l0.2 3.2l0.2 3.2l10.1-1.1l-0.2-3.1l-0.2-3.2zM880.4 350.3l0.2 3.2l0.2 3.1l10.1-1.1l-0.2-3.1l-0.2-3.1zM890.5 349.3l0.2 3.1l0.2 3.1l10.1-1l-0.2-3.1l-0.2-3zM900.6 348.4l0.2 3l0.2 3.1l10.1-1.1l-0.2-3l-0.2-3zM910.7 347.4l0.2 3l0.2 3l10.1-0.6l-0.2-3l-0.1-3zM920.9 346.8l0.1 3l0.2 3l10.2-0.7l-0.2-2.9l-0.2-3zM931 346.2l0.2 3l0.2 2.9l10.1-0.7l-0.2-2.9l-0.2-2.9zM941.1 345.6l0.2 2.9l0.2 2.9l10.2-0.6l-0.2-2.9l-0.2-2.9zM951.3 345l0.2 2.9l0.2 2.9l8.9-0.2l-0.2-2.9l-0.2-2.8zM960.2 344.9l0.2 2.8l0.2 2.9l8.9-0.2l-0.2-2.9l-0.2-2.8zM969.1 344.7l0.2 2.8l0.2 2.9l8.9-0.2l-0.2-2.8l-0.1-2.9zM978.1 344.5l0.1 2.9l0.2 2.8l8.8-0.2l-0.1-2.8l-0.1-2.8z" fill="#afe200" stroke="#afe200" stroke-width=".5"/><path d="M789.4 363.8l0.4 3.5l0.5 3.6l0.6 3.5l0.5 3.5l10.2-0.6l-0.6-3.5l-0.5-3.5l-0.5-3.5l-0.5-3.5zM799.5 363.3l0.5 3.5l0.5 3.5l0.5 3.5l0.6 3.5l10.1-0.7l-0.5-3.4l-0.5-3.5l-0.5-3.4l-0.5-3.5zM809.7 362.8l0.5 3.5l0.5 3.4l0.5 3.5l0.5 3.4l10.2-0.7l-0.6-3.4l-0.5-3.4l-0.5-3.4l-0.4-3.4zM819.9 362.3l0.4 3.4l0.5 3.4l0.5 3.4l0.6 3.4l10.1-0.6l-0.5-3.4l-0.5-3.4l-0.5-3.3l-0.4-3.4zM830.1 361.8l0.4 3.4l0.5 3.3l0.5 3.4l0.5 3.4l10.1-1.2l-0.5-3.3l-0.5-3.4l-0.5-3.3l-0.4-3.3zM840.2 360.8l0.4 3.3l0.5 3.3l0.5 3.4l0.5 3.3l10-1.3l-0.5-3.2l-0.4-3.3l-0.5-3.3l-0.3-3.3zM850.4 359.7l0.3 3.3l0.5 3.3l0.4 3.3l0.5 3.2l10.1-1.2l-0.5-3.2l-0.4-3.2l-0.4-3.2l-0.4-3.3zM860.5 358.7l0.4 3.3l0.4 3.2l0.4 3.2l0.5 3.2l10-1.2l-0.4-3.2l-0.5-3.1l-0.3-3.2l-0.3-3.2zM870.7 357.7l0.3 3.2l0.3 3.2l0.5 3.1l0.4 3.2l10-1.2l-0.4-3.2l-0.4-3.1l-0.3-3.1l-0.3-3.2zM880.8 356.6l0.3 3.2l0.3 3.1l0.4 3.1l0.4 3.2l10-1.3l-0.4-3.1l-0.4-3.1l-0.3-3.1l-0.2-3.1zM890.9 355.5l0.2 3.1l0.3 3.1l0.4 3.1l0.4 3.1l9.9-1.2l-0.3-3.1l-0.3-3l-0.3-3.1l-0.2-3zM901 354.5l0.2 3l0.3 3.1l0.3 3l0.3 3.1l10-1.3l-0.3-3l-0.3-3l-0.2-3l-0.2-3zM911.1 353.4l0.2 3l0.2 3l0.3 3l0.3 3l10.1-0.8l-0.3-2.9l-0.3-3l-0.2-3l-0.2-2.9zM921.2 352.8l0.2 2.9l0.2 3l0.3 3l0.3 2.9l10.1-0.7l-0.3-3l-0.2-2.9l-0.2-3l-0.2-2.9zM931.4 352.1l0.2 2.9l0.2 3l0.2 2.9l0.3 3l10.1-0.8l-0.2-2.9l-0.3-2.9l-0.2-3l-0.2-2.9zM941.5 351.4l0.2 2.9l0.2 3l0.3 2.9l0.2 2.9l10.2-0.8l-0.3-2.9l-0.2-2.9l-0.2-2.8l-0.2-2.9zM951.7 350.8l0.2 2.9l0.2 2.8l0.2 2.9l0.3 2.9l8.8-0.3l-0.2-2.9l-0.2-2.8l-0.2-2.9l-0.2-2.8zM960.6 350.6l0.2 2.8l0.2 2.9l0.2 2.8l0.2 2.9l8.9-0.3l-0.3-2.8l-0.2-2.9l-0.2-2.8l-0.1-2.8zM969.5 350.4l0.1 2.8l0.2 2.8l0.2 2.9l0.3 2.8l8.8-0.3l-0.2-2.8l-0.2-2.8l-0.2-2.8l-0.1-2.8zM978.4 350.2l0.1 2.8l0.2 2.8l0.2 2.8l0.2 2.8l8.9-0.3l-0.2-2.8l-0.2-2.7l-0.2-2.8l-0.2-2.8z" fill="#e6da00" stroke="#e6da00" stroke-width=".5"/><path d="M791.4 377.9l0.6 3.5l0.7 3.6l10.1-0.8l-0.6-3.5l-0.6-3.4zM801.6 377.3l0.6 3.4l0.6 3.5l10.2-0.7l-0.7-3.5l-0.6-3.4zM811.7 376.6l0.6 3.4l0.7 3.5l10.2-0.8l-0.7-3.4l-0.6-3.4zM821.9 375.9l0.6 3.4l0.7 3.4l10.1-0.7l-0.6-3.4l-0.7-3.3zM832 375.3l0.7 3.3l0.6 3.4l10.1-1.3l-0.7-3.3l-0.6-3.3zM842.1 374.1l0.6 3.3l0.7 3.3l10-1.4l-0.7-3.2l-0.6-3.3zM852.1 372.8l0.6 3.3l0.7 3.2l10-1.3l-0.6-3.2l-0.6-3.2zM862.2 371.6l0.6 3.2l0.6 3.2l10.1-1.3l-0.7-3.1l-0.6-3.2zM872.2 370.4l0.6 3.2l0.7 3.1l9.9-1.3l-0.7-3.1l-0.5-3.1zM882.2 369.2l0.5 3.1l0.7 3.1l9.8-1.4l-0.6-3l-0.4-3.1zM892.2 367.9l0.4 3.1l0.6 3l9.9-1.3l-0.5-3l-0.5-3zM902.1 366.7l0.5 3l0.5 3l9.9-1.3l-0.5-3l-0.4-3zM912.1 365.4l0.4 3l0.5 3l10.1-0.9l-0.5-2.9l-0.4-3zM922.2 364.6l0.4 3l0.5 2.9l10-0.8l-0.4-2.9l-0.4-2.9zM932.3 363.9l0.4 2.9l0.4 2.9l10.1-0.8l-0.4-2.9l-0.4-2.9zM942.4 363.1l0.4 2.9l0.4 2.9l10.1-0.9l-0.4-2.8l-0.3-2.9zM952.6 362.3l0.3 2.9l0.4 2.8l8.8-0.3l-0.4-2.9l-0.3-2.8zM961.4 362l0.3 2.8l0.4 2.9l8.8-0.3l-0.3-2.9l-0.3-2.8zM970.3 361.7l0.3 2.8l0.3 2.9l8.8-0.4l-0.3-2.8l-0.3-2.8zM979.1 361.4l0.3 2.8l0.3 2.8l8.8-0.3l-0.3-2.8l-0.2-2.8z" fill="#96e600" stroke="#96e600" stroke-width=".5"/><path d="M792.7 385l0.6 3.5l0.7 3.5l0.7 3.5l10.2-0.9l-0.7-3.5l-0.7-3.4l-0.7-3.5zM802.8 384.2l0.7 3.5l0.7 3.4l0.7 3.5l10.2-0.9l-0.7-3.4l-0.7-3.4l-0.7-3.4zM813 383.5l0.7 3.4l0.7 3.4l0.7 3.4l10.2-0.9l-0.7-3.3l-0.7-3.4l-0.7-3.4zM823.2 382.7l0.7 3.4l0.7 3.4l0.7 3.3l10.2-0.8l-0.7-3.4l-0.8-3.3l-0.7-3.3zM833.3 382l0.7 3.3l0.8 3.3l0.7 3.4l10.2-1.5l-0.8-3.3l-0.8-3.3l-0.7-3.2zM843.4 380.7l0.7 3.2l0.8 3.3l0.8 3.3l10.1-1.5l-0.8-3.2l-0.8-3.2l-0.8-3.3zM853.4 379.3l0.8 3.3l0.8 3.2l0.8 3.2l10.1-1.5l-0.8-3.2l-0.9-3.1l-0.8-3.2zM863.4 378l0.8 3.2l0.9 3.1l0.8 3.2l10.2-1.5l-0.9-3.1l-0.9-3.1l-0.8-3.1zM873.5 376.7l0.8 3.1l0.9 3.1l0.9 3.1l9.9-1.5l-1-3l-0.9-3.1l-0.7-3zM883.4 375.4l0.7 3l0.9 3.1l1 3l10-1.6l-1.1-2.9l-0.9-2.9l-0.8-3.1zM893.2 374l0.8 3.1l0.9 2.9l1.1 2.9l9.9-1.5l-1.1-2.8l-1-2.9l-0.7-3zM903.1 372.7l0.7 3l1 2.9l1.1 2.8l9.9-1.5l-1.2-2.7l-0.9-2.9l-0.7-2.9zM913 371.4l0.7 2.9l0.9 2.9l1.2 2.7l10-0.9l-1.2-2.7l-0.9-2.8l-0.6-3zM923.1 370.5l0.6 3l0.9 2.8l1.2 2.7l10.1-0.9l-1.3-2.7l-0.9-2.8l-0.6-2.9zM933.1 369.7l0.6 2.9l0.9 2.8l1.3 2.7l10-1l-1.3-2.6l-0.8-2.8l-0.6-2.8zM943.2 368.9l0.6 2.8l0.8 2.8l1.3 2.6l10-0.9l-1.3-2.6l-0.8-2.8l-0.5-2.8zM953.3 368l0.5 2.8l0.8 2.8l1.3 2.6l8.7-0.4l-1.3-2.5l-0.7-2.8l-0.5-2.8zM962.1 367.7l0.5 2.8l0.7 2.8l1.3 2.5l8.6-0.3l-1.2-2.6l-0.6-2.7l-0.5-2.8zM970.9 367.4l0.5 2.8l0.6 2.7l1.2 2.6l8.6-0.3l-1-2.6l-0.6-2.8l-0.5-2.8zM979.7 367l0.5 2.8l0.6 2.8l1 2.6l8.7-0.4l-1-2.6l-0.6-2.7l-0.4-2.8z" fill="#d7de00" stroke="#d7de00" stroke-width=".5"/><path d="M794.7 395.5l0.6 3.5l0.7 3.5l10.2-1l-0.6-3.4l-0.7-3.5zM804.9 394.6l0.7 3.5l0.6 3.4l10.3-0.9l-0.7-3.5l-0.7-3.4zM815.1 393.7l0.7 3.4l0.7 3.5l10.3-1l-0.8-3.4l-0.7-3.4zM825.3 392.8l0.7 3.4l0.8 3.4l10.2-1l-0.7-3.3l-0.8-3.3zM835.5 392l0.8 3.3l0.7 3.3l10.2-1.6l-0.7-3.3l-0.8-3.2zM845.7 390.5l0.8 3.2l0.7 3.3l10.3-1.7l-0.8-3.1l-0.9-3.2zM855.8 389l0.9 3.2l0.8 3.1l10.3-1.6l-0.9-3.1l-1-3.1zM865.9 387.5l1 3.1l0.9 3.1l10.2-1.6l-0.9-3.1l-1-3zM876.1 386l1 3l0.9 3.1l10.1-1.7l-1-3l-1.1-2.9zM886 384.5l1.1 2.9l1 3l10.2-1.7l-1.2-2.9l-1.1-2.9zM896 382.9l1.1 2.9l1.2 2.9l10.2-1.7l-1.3-2.8l-1.3-2.8zM905.9 381.4l1.3 2.8l1.3 2.8l10.1-1.7l-1.4-2.7l-1.4-2.7zM915.8 379.9l1.4 2.7l1.4 2.7l10.3-1.2l-1.6-2.5l-1.5-2.6zM925.8 379l1.5 2.6l1.6 2.5l10.2-1.2l-1.7-2.4l-1.5-2.4zM935.9 378.1l1.5 2.4l1.7 2.4l10.3-1.1l-1.8-2.3l-1.7-2.4zM945.9 377.1l1.7 2.4l1.8 2.3l10.2-1.2l-1.9-2.1l-1.8-2.3zM955.9 376.2l1.8 2.3l1.9 2.1l8.8-0.7l-2.1-1.8l-1.7-2.3zM964.6 375.8l1.7 2.3l2.1 1.8l8.8-0.6l-2.2-1.7l-1.8-2.1zM973.2 375.5l1.8 2.1l2.2 1.7l8.9-0.7l-2.4-1.4l-1.9-2zM981.8 375.2l1.9 2l2.4 1.4l8.8-0.7l-2.6-1.1l-1.8-2z" fill="#8ce800" stroke="#8ce800" stroke-width=".5"/><path d="M795.2 235.4l40.6 3.8M793.8 245.8l41.2 3.4M792.7 256.2l41.4 3M791.8 266.7l41.4 2.5M791 277.2l41.2 1.9M790.2 287.7l41.1 1.4M789.6 298.1l41 1M789.1 308.6l40.9 0.5M788.6 319.1l40.9 0M788.2 329.6l41-0.4M788 340.1l41-0.9M788.2 350.6l40.9-1.4M789 361.1l40.8-1.9M790.4 371.5l40.7-2.4M792.1 381.9l40.6-2.9M794 392.2l40.8-3.4M835.8 239.2l39.3 3.2M835 249.2l39.1 2.5M834.1 259.2l39.1 1.9M833.2 269.2l39.2 1.3M832.2 279.1l39.4 0.8M831.3 289.1l39.5 0.2M830.6 299.1l39.7-0.4M830 309.1l39.9-1M829.5 319.1l40.2-1.5M829.2 329.2l40.5-2.2M829 339.2l40.8-2.8M829.1 349.2l40.9-3.4M829.8 359.2l40.7-4M831.1 369.1l40.3-4.5M832.7 379l40.2-5.1M834.8 388.8l40.4-5.7M875.1 242.4l39 2.5M874.1 251.7l39 2M873.2 261.1l39 1.5M872.4 270.5l38.9 0.9M871.6 279.9l39 0.3M870.8 289.3l39.1-0.2M870.3 298.7l39.3-0.8M869.9 308.1l39.7-1.3M869.7 317.6l40-1.9M869.7 327l40.2-2.5M869.8 336.4l40.4-3M870 345.8l40.5-3.6M870.5 355.2l40.4-4.1M871.4 364.6l40.1-4.6M872.9 373.9l39.6-5.1M875.2 383.1l39.5-5.8M914.1 244.9l38.5 2.1M913.1 253.7l38.6 1.8M912.2 262.6l38.6 1.3M911.3 271.4l38.8 1M910.6 280.2l38.8 0.6M909.9 289.1l39 0.2M909.6 297.9l39.3-0.1M909.6 306.8l39.5-0.6M909.7 315.7l39.8-1M909.9 324.5l40-1.3M910.2 333.4l40.2-1.7M910.5 342.2l40.4-2.1M910.9 351.1l40.6-2.5M911.5 360l40.6-3M912.5 368.8l40.4-3.3M914.7 377.3l40-3.5M952.6 247l38.9 2.3M951.7 255.5l39.2 2M950.8 263.9l39.5 1.8M950.1 272.4l39.5 1.5M949.4 280.8l39.1 1.3M948.9 289.3l38.4 0.9M948.9 297.8l37.7 0.6M949.1 306.2l37.2 0.5M949.5 314.7l36.8 0.2M949.9 323.2l36.5-0.1M950.4 331.7l36.1-0.3M950.9 340.1l35.9-0.5M951.5 348.6l35.6-0.8M952.1 357l35.5-1M952.9 365.5l35.4-1.3M954.7 373.8l34.8-1.4" fill="none" stroke="#6e1400" stroke-width="0.69" stroke-opacity="0.85"/><path d="M808.3 226.2l-1.4 10.9l-1.3 11l-1.1 10.9l-0.9 11l-0.9 11l-0.8 11l-0.7 10.9l-0.5 11l-0.5 11l-0.3 11.1l0 11l0.7 11l1.3 10.9l1.8 10.9l2 10.8l2.2 10.8M821.5 227.6l-1.2 10.8l-1.1 10.8l-1 10.8l-1 10.8l-0.9 10.8l-0.9 10.8l-0.7 10.8l-0.5 10.8l-0.5 10.9l-0.3 10.8l0.1 10.9l0.5 10.8l1.4 10.7l1.7 10.7l2.1 10.7l2.2 10.6M848.1 230.3l-0.9 10.4l-0.9 10.5l-1 10.4l-1 10.4l-1 10.4l-0.8 10.5l-0.7 10.4l-0.4 10.5l-0.4 10.4l-0.2 10.5l0.1 10.4l0.5 10.5l1.1 10.4l1.6 10.3l2.3 10.3l2.5 10.1M861.2 231.6l-1.1 10.2l-0.9 10.2l-1 10.2l-0.9 10.2l-1 10.2l-0.7 10.2l-0.6 10.3l-0.4 10.2l-0.2 10.3l-0.1 10.2l0.1 10.3l0.5 10.2l1 10.3l1.5 10.1l2.3 10l2.7 9.9M887.5 233.9l-1.2 9.8l-1 9.8l-0.9 9.8l-0.9 9.8l-0.9 9.8l-0.6 9.8l-0.4 9.8l-0.2 9.9l-0.1 9.8l0.1 9.9l0.3 9.8l0.4 9.8l0.8 9.8l1.3 9.8l2.3 9.6l3.3 9.2M900.3 234.9l-1.1 9.6l-1 9.6l-1 9.6l-0.9 9.6l-0.8 9.6l-0.6 9.7l-0.3 9.6l-0.1 9.6l0.1 9.7l0.1 9.6l0.3 9.7l0.4 9.6l0.7 9.6l1.2 9.6l2.2 9.4l3.7 8.9M926.2 236.8l-1 9.3l-1 9.2l-1 9.3l-0.8 9.2l-0.8 9.3l-0.5 9.3l-0.1 9.3l0.1 9.3l0.3 9.3l0.3 9.3l0.4 9.3l0.5 9.3l0.6 9.3l0.9 9.2l2 9.1l4.4 8.1M938.9 237.7l-1 9.1l-1 9.1l-0.9 9.1l-0.8 9.1l-0.8 9.2l-0.4 9.1l0 9.2l0.2 9.2l0.3 9.1l0.5 9.2l0.4 9.1l0.6 9.2l0.6 9.1l0.8 9.2l1.9 8.9l4.7 7.8M964.7 239.3l-0.9 8.9l-0.8 8.9l-0.9 8.9l-0.8 8.9l-0.8 8.9l-0.6 8.9l-0.1 8.9l0.2 9l0.3 8.9l0.4 8.9l0.5 8.9l0.5 9l0.6 8.9l0.7 8.9l1.6 8.8l5.2 6.9M977.4 240.2l-0.8 8.8l-0.7 8.8l-0.7 8.8l-0.8 8.8l-1.1 8.8l-0.8 8.8l-0.3 8.8l0 8.9l0.2 8.8l0.3 8.9l0.4 8.8l0.4 8.8l0.5 8.9l0.7 8.8l1.4 8.7l5.4 6.5" fill="none" stroke="#6e1400" stroke-width="0.69" stroke-opacity="0.9"/><path d="M796.6 226.3l39.9 4.2M796.4 227.6l40 4.1M796.2 229l40.1 4M796 230.3l40.2 4M795.8 231.6l40.3 4M836.5 230.5l39.6 3.7M836.4 231.7l39.5 3.7M836.3 233l39.5 3.6M836.2 234.3l39.4 3.5M836.1 235.6l39.4 3.4M876.1 234.2l38.8 3M875.9 235.4l38.9 2.9M875.8 236.6l38.8 2.9M875.6 237.8l38.9 2.8M875.5 239l38.9 2.7M914.9 237.2l38.5 2.5M914.8 238.3l38.5 2.5M914.6 239.5l38.6 2.3M914.5 240.6l38.5 2.3M914.4 241.7l38.5 2.3M953.4 239.7l38.5 2.4M953.3 240.8l38.6 2.4M953.2 241.8l38.6 2.4M953 242.9l38.7 2.4M952.9 244l38.7 2.3" fill="none" stroke="#6e1400" stroke-width="0.62" stroke-opacity="0.6"/><path d="M994.6 224l-0.4 2.4l-0.4 2.3l-0.5 2.4l-0.3 2.4l-0.4 2.4l-0.3 2.4l-0.3 2.4l-0.2 2.4l-0.2 2.4l-0.2 2.4l11.9 0.4l0.2-2.4l0.2-2.4l0.3-2.4l0.2-2.3l0.3-2.4l0.3-2.4l0.4-2.4l0.4-2.3l0.3-2.4l0.4-2.4zM1006.3 224.5l-0.4 2.4l-0.3 2.4l-0.4 2.3l-0.4 2.4l-0.3 2.4l-0.3 2.4l-0.2 2.3l-0.3 2.4l-0.2 2.4l-0.2 2.4l11.9 0.4l0.2-2.4l0.2-2.3l0.3-2.4l0.3-2.4l0.2-2.3l0.3-2.4l0.3-2.4l0.4-2.3l0.3-2.4l0.3-2.3zM1018 225.1l-0.3 2.3l-0.3 2.4l-0.4 2.3l-0.3 2.4l-0.3 2.4l-0.2 2.3l-0.3 2.4l-0.3 2.4l-0.2 2.3l-0.2 2.4l11.8 0.4l0.3-2.3l0.3-2.4l0.2-2.3l0.3-2.4l0.3-2.3l0.2-2.4l0.3-2.3l0.3-2.4l0.2-2.3l0.3-2.4z" fill="#cd8200" stroke="#cd8200" stroke-width=".5"/><path d="M991.4 247.9l-0.2 2.4l-0.1 2.4l-0.2 2.4l-0.2 2.4l-0.1 2.4l11.7 0.3l0.2-2.4l0.2-2.3l0.2-2.4l0.2-2.4l0.2-2.4zM1003.3 248.3l-0.2 2.4l-0.2 2.4l-0.2 2.4l-0.2 2.3l-0.2 2.4l11.8 0.4l0.2-2.4l0.2-2.4l0.2-2.3l0.2-2.4l0.3-2.4zM1015.2 248.7l-0.3 2.4l-0.2 2.4l-0.2 2.3l-0.2 2.4l-0.2 2.4l11.7 0.3l0.2-2.3l0.3-2.4l0.2-2.4l0.3-2.3l0.2-2.4z" fill="#ffc300" stroke="#ffc300" stroke-width=".5"/><path d="M990.6 259.9l-0.2 2.4l-0.1 2.4l-0.2 2.4l-0.2 2.4l-0.1 2.4l-0.2 2.4l-0.2 2.4l-0.1 2.4l-0.2 2.4l-0.1 2.4l-0.2 2.4l-0.2 2.4l-0.1 2.4l-0.2 2.4l-0.1 2.5l-0.2 2.4l-0.1 2.4l-0.2 2.4l-0.2 2.4l-0.1 2.4l-0.2 2.4l-0.1 2.4l-0.2 2.4l-0.1 2.4l-0.2 2.4l11.9 0l0.1-2.4l0.2-2.4l0.1-2.4l0.1-2.4l0.2-2.4l0.1-2.3l0.2-2.4l0.1-2.4l0.2-2.4l0.1-2.4l0.2-2.4l0.1-2.4l0.2-2.4l0.1-2.4l0.2-2.4l0.1-2.4l0.2-2.4l0.1-2.3l0.2-2.4l0.1-2.4l0.2-2.4l0.2-2.4l0.2-2.4l0.1-2.4l0.2-2.4zM1002.3 260.2l-0.2 2.4l-0.1 2.4l-0.2 2.4l-0.2 2.4l-0.2 2.4l-0.1 2.4l-0.2 2.4l-0.1 2.3l-0.2 2.4l-0.1 2.4l-0.2 2.4l-0.1 2.4l-0.2 2.4l-0.1 2.4l-0.2 2.4l-0.1 2.4l-0.2 2.4l-0.1 2.4l-0.2 2.4l-0.1 2.3l-0.2 2.4l-0.1 2.4l-0.1 2.4l-0.2 2.4l-0.1 2.4l11.8 0l0.2-2.4l0.1-2.4l0.1-2.3l0.2-2.4l0.1-2.4l0.1-2.4l0.1-2.3l0.2-2.4l0.1-2.4l0.1-2.4l0.2-2.4l0.1-2.3l0.2-2.4l0.1-2.4l0.1-2.4l0.2-2.4l0.1-2.3l0.2-2.4l0.2-2.4l0.1-2.4l0.2-2.3l0.2-2.4l0.2-2.4l0.2-2.4l0.2-2.3zM1014.1 260.6l-0.2 2.3l-0.2 2.4l-0.2 2.4l-0.2 2.4l-0.2 2.3l-0.1 2.4l-0.2 2.4l-0.2 2.4l-0.1 2.3l-0.2 2.4l-0.1 2.4l-0.1 2.4l-0.2 2.4l-0.1 2.3l-0.2 2.4l-0.1 2.4l-0.1 2.4l-0.2 2.4l-0.1 2.3l-0.1 2.4l-0.1 2.4l-0.2 2.4l-0.1 2.3l-0.1 2.4l-0.2 2.4l11.9 0l0.1-2.4l0.1-2.3l0.2-2.4l0.1-2.4l0.1-2.3l0.1-2.4l0.1-2.4l0.1-2.3l0.2-2.4l0.1-2.4l0.1-2.3l0.1-2.4l0.2-2.3l0.1-2.4l0.1-2.4l0.2-2.3l0.1-2.4l0.2-2.4l0.1-2.3l0.2-2.4l0.2-2.4l0.2-2.3l0.2-2.4l0.2-2.3l0.2-2.4z" fill="#fcec00" stroke="#fcec00" stroke-width=".5"/><path d="M1029.7 225.6l-0.3 2.4l-0.2 2.3l-0.3 2.4l-0.3 2.3l-0.2 2.4l-0.3 2.3l-0.3 2.4l-0.2 2.3l-0.3 2.4l-0.3 2.3l11.7 0.6l0.3-2.4l0.2-2.3l0.3-2.3l0.2-2.4l0.3-2.3l0.3-2.3l0.2-2.4l0.3-2.3l0.2-2.3l0.3-2.4zM1041.3 226.3l-0.3 2.4l-0.2 2.3l-0.3 2.3l-0.2 2.4l-0.3 2.3l-0.3 2.3l-0.2 2.4l-0.3 2.3l-0.2 2.3l-0.3 2.4l11.7 0.5l0.3-2.3l0.2-2.3l0.3-2.3l0.2-2.3l0.3-2.3l0.2-2.4l0.3-2.3l0.2-2.3l0.3-2.3l0.2-2.3zM1052.9 227.1l-0.2 2.3l-0.3 2.3l-0.2 2.3l-0.3 2.3l-0.2 2.4l-0.3 2.3l-0.2 2.3l-0.3 2.3l-0.2 2.3l-0.3 2.3l11.7 0.6l0.3-2.3l0.2-2.3l0.2-2.3l0.3-2.3l0.2-2.3l0.3-2.3l0.2-2.3l0.2-2.3l0.3-2.3l0.2-2.3z" fill="#c3a000" stroke="#c3a000" stroke-width=".5"/><path d="M1027 249.1l-0.2 2.4l-0.3 2.3l-0.2 2.4l-0.3 2.4l-0.2 2.3l-0.2 2.4l-0.2 2.3l-0.2 2.4l11.8 0.4l0.2-2.3l0.2-2.4l0.2-2.3l0.2-2.4l0.2-2.3l0.3-2.3l0.2-2.4l0.2-2.3zM1038.7 249.7l-0.2 2.3l-0.2 2.4l-0.3 2.3l-0.2 2.3l-0.2 2.4l-0.2 2.3l-0.2 2.4l-0.2 2.3l-0.2 2.3l-0.2 2.4l11.8 0.4l0.2-2.4l0.2-2.3l0.1-2.3l0.2-2.3l0.2-2.4l0.2-2.3l0.3-2.3l0.2-2.3l0.2-2.3l0.2-2.4zM1050.4 250.2l-0.2 2.4l-0.2 2.3l-0.2 2.3l-0.3 2.3l-0.2 2.3l-0.2 2.4l-0.2 2.3l-0.1 2.3l-0.2 2.3l-0.2 2.4l-0.1 2.3l-0.1 2.3l11.8 0.3l0.1-2.3l0.2-2.3l0.1-2.3l0.2-2.3l0.1-2.3l0.2-2.3l0.2-2.3l0.2-2.3l0.2-2.3l0.2-2.3l0.2-2.3l0.2-2.3zM1023.6 346.4l0.2 2.2l0.3 2.3l0.4 2.3l0.4 2.3l0.4 2.2l0.4 2.3l0.5 2.2l0.4 2.3l0.5 2.2l12-0.5l-0.5-2.3l-0.5-2.2l-0.4-2.2l-0.5-2.2l-0.4-2.3l-0.4-2.2l-0.3-2.3l-0.3-2.2l-0.3-2.3zM1035.3 343.7l0.2 2.3l0.3 2.3l0.3 2.2l0.3 2.3l0.4 2.2l0.4 2.3l0.5 2.2l0.4 2.2l0.5 2.2l0.5 2.3l11.9-0.6l-0.4-2.2l-0.5-2.2l-0.5-2.2l-0.4-2.2l-0.4-2.2l-0.4-2.2l-0.4-2.3l-0.3-2.2l-0.2-2.2l-0.2-2.3zM1047.3 343.4l0.2 2.3l0.2 2.2l0.3 2.2l0.4 2.3l0.4 2.2l0.4 2.2l0.4 2.2l0.5 2.2l0.5 2.2l0.4 2.2l12-0.6l-0.5-2.2l-0.5-2.1l-0.4-2.2l-0.5-2.2l-0.4-2.2l-0.4-2.2l-0.3-2.1l-0.3-2.3l-0.2-2.2l-0.2-2.2zM1059 338.7l0.1 2.2l0.2 2.2l0.2 2.2l0.2 2.2l0.3 2.3l0.3 2.1l0.4 2.2l0.4 2.2l0.5 2.2l0.4 2.2l0.5 2.1l0.5 2.2l11.6-0.4l-0.5-2.1l-0.5-2.2l-0.4-2.1l-0.5-2.2l-0.4-2.1l-0.4-2.2l-0.3-2.2l-0.3-2.2l-0.2-2.2l-0.1-2.2l-0.2-2.2l-0.1-2.2zM1070.7 338.5l0.1 2.2l0.2 2.2l0.1 2.2l0.2 2.2l0.3 2.2l0.3 2.2l0.4 2.2l0.4 2.1l0.5 2.2l0.4 2.1l0.5 2.2l0.5 2.1l11.6-0.3l-0.5-2.1l-0.5-2.2l-0.4-2.1l-0.5-2.2l-0.4-2.1l-0.3-2.2l-0.4-2.2l-0.2-2.1l-0.2-2.2l-0.2-2.2l-0.1-2.2l-0.1-2.2zM1082.5 340.5l0.1 2.2l0.2 2.2l0.2 2.2l0.2 2.1l0.4 2.2l0.3 2.2l0.4 2.1l0.5 2.2l0.4 2.1l0.5 2.2l0.5 2.1l11.7-0.4l-0.6-2.1l-0.4-2.1l-0.5-2.1l-0.5-2.2l-0.4-2.1l-0.3-2.2l-0.3-2.1l-0.3-2.2l-0.1-2.2l-0.2-2.1l-0.1-2.2z" fill="#fcfa00" stroke="#fcfa00" stroke-width=".5"/><path d="M1025.2 268l-0.2 2.3l-0.2 2.4l-0.2 2.4l-0.1 2.3l-0.2 2.4l-0.1 2.4l-0.2 2.3l-0.1 2.4l-0.1 2.4l-0.2 2.3l-0.1 2.4l-0.1 2.3l-0.1 2.4l-0.2 2.4l-0.1 2.3l-0.1 2.4l-0.1 2.4l-0.1 2.3l-0.1 2.4l-0.2 2.4l-0.1 2.3l-0.1 2.4l12 0l0.1-2.3l0.2-2.4l0.1-2.3l0.1-2.4l0.1-2.3l0.1-2.4l0.1-2.3l0.1-2.4l0.1-2.3l0.1-2.4l0.1-2.3l0.1-2.4l0.2-2.3l0.1-2.4l0.1-2.3l0.1-2.3l0.2-2.4l0.1-2.3l0.2-2.4l0.1-2.3l0.2-2.4l0.2-2.3zM1036.6 273.1l-0.1 2.3l-0.2 2.4l-0.1 2.3l-0.2 2.4l-0.1 2.3l-0.1 2.3l-0.1 2.4l-0.2 2.3l-0.1 2.4l-0.1 2.3l-0.1 2.4l-0.1 2.3l-0.1 2.4l-0.1 2.3l-0.1 2.4l-0.1 2.3l-0.1 2.4l-0.1 2.3l-0.2 2.4l-0.1 2.3l12.1 0l0.1-2.3l0.1-2.4l0.1-2.3l0.1-2.3l0.1-2.3l0.1-2.4l0-2.3l0.1-2.3l0.1-2.4l0.1-2.3l0.2-2.3l0.1-2.3l0.1-2.4l0.1-2.3l0.1-2.3l0.1-2.3l0.1-2.4l0.2-2.3l0.1-2.3l0.1-2.3zM1048.2 278.1l-0.2 2.3l-0.1 2.4l-0.1 2.3l-0.1 2.3l-0.1 2.3l-0.1 2.4l-0.1 2.3l-0.2 2.3l-0.1 2.3l-0.1 2.4l-0.1 2.3l0 2.3l-0.1 2.4l-0.1 2.3l-0.1 2.3l-0.1 2.3l-0.1 2.4l-0.1 2.3l12 0l0.1-2.3l0.1-2.3l0.1-2.3l0.1-2.3l0-2.3l0.1-2.4l0.1-2.3l0.1-2.3l0.1-2.3l0.1-2.3l0.1-2.3l0.1-2.3l0.1-2.3l0.1-2.3l0.1-2.3l0.1-2.3l0.1-2.4l0.1-2.3zM1070.4 310.8l-0.1 2.3l0 2.3l-0.1 2.3l-0.1 2.3l11.7 0l0.1-2.3l0.1-2.3l0.1-2.3l0.1-2.2zM986.9 328.6l0.1 2.5l0.1 2.6l0.1 2.5l0.1 2.6l11.9-0.6l-0.2-2.4l-0.1-2.5l-0.1-2.4l-0.1-2.5zM998.7 328.4l0.1 2.5l0.1 2.4l0.1 2.5l0.2 2.4l11.8-0.5l-0.2-2.4l-0.1-2.3l-0.1-2.4l-0.2-2.4zM1010.4 328.2l0.2 2.4l0.1 2.4l0.1 2.3l0.2 2.4l11.8-0.5l-0.2-2.3l-0.1-2.3l-0.1-2.3l-0.2-2.3zM1022.2 328l0.2 2.3l0.1 2.3l0.1 2.3l0.2 2.3l0.2 2.3l0.1 2.3l0.2 2.3l0.3 2.3l11.9-0.4l-0.2-2.3l-0.2-2.2l-0.1-2.3l-0.2-2.3l-0.1-2.2l-0.2-2.3l-0.1-2.3l-0.2-2.2zM1034.2 327.9l0.2 2.2l0.1 2.3l0.2 2.3l0.1 2.2l0.2 2.3l0.1 2.3l0.2 2.2l12-0.3l-0.2-2.2l-0.1-2.2l-0.2-2.3l-0.1-2.2l-0.2-2.3l-0.1-2.2l-0.1-2.3zM1046.3 327.7l0.1 2.3l0.1 2.2l0.2 2.3l0.1 2.2l0.2 2.3l0.1 2.2l0.2 2.2l12-0.3l-0.2-2.2l-0.1-2.2l-0.2-2.2l-0.1-2.2l-0.1-2.3l-0.2-2.2l-0.1-2.2zM1058.3 327.6l0.1 2.2l0.2 2.2l0.1 2.3l0.1 2.2l0.2 2.2l11.7-0.2l-0.2-2.2l-0.1-2.2l-0.1-2.2l-0.1-2.2l-0.1-2.2zM1070.1 327.5l0.1 2.2l0.1 2.2l0.1 2.2l0.1 2.2l0.2 2.2l11.7-0.2l-0.2-2.2l-0.1-2.2l-0.1-2.2l-0.1-2.2l-0.1-2.2zM1081.8 327.3l0.1 2.2l0.1 2.2l0.1 2.2l0.1 2.2l0.2 2.2l0.1 2.2l11.7-0.2l-0.1-2.2l-0.1-2.2l-0.1-2.2l-0.1-2.1l-0.1-2.2l-0.1-2.2z" fill="#96eb00" stroke="#96eb00" stroke-width=".5"/><path d="M1064.5 227.8l-0.2 2.3l-0.3 2.3l-0.2 2.3l-0.2 2.3l-0.3 2.3l-0.2 2.3l-0.3 2.3l-0.2 2.3l-0.2 2.3l-0.3 2.3l11.9 0.4l0.3-2.3l0.2-2.3l0.3-2.3l0.2-2.3l0.3-2.3l0.2-2.3l0.3-2.2l0.2-2.3l0.3-2.3l0.2-2.3zM1076.5 228.3l-0.2 2.3l-0.3 2.3l-0.2 2.3l-0.3 2.2l-0.2 2.3l-0.3 2.3l-0.2 2.3l-0.3 2.3l-0.2 2.3l-0.3 2.3l11.9 0.3l0.3-2.3l0.2-2.2l0.3-2.3l0.3-2.3l0.2-2.2l0.3-2.3l0.3-2.3l0.2-2.3l0.3-2.2l0.3-2.3zM1088.6 228.8l-0.3 2.3l-0.3 2.2l-0.2 2.3l-0.3 2.3l-0.3 2.3l-0.2 2.2l-0.3 2.3l-0.3 2.3l-0.2 2.2l-0.3 2.3l11.9 0.4l0.3-2.3l0.2-2.2l0.3-2.3l0.3-2.3l0.3-2.2l0.3-2.3l0.3-2.2l0.2-2.3l0.3-2.2l0.3-2.3z" fill="#3c9600" stroke="#3c9600" stroke-width=".5"/><path d="M1062.1 250.8l-0.2 2.3l-0.2 2.3l-0.2 2.3l-0.2 2.3l-0.2 2.3l-0.2 2.3l-0.2 2.3l-0.1 2.3l-0.2 2.3l-0.1 2.3l-0.2 2.3l-0.1 2.3l-0.1 2.3l-0.1 2.4l-0.1 2.3l-0.1 2.3l-0.1 2.3l-0.1 2.3l-0.1 2.3l-0.1 2.3l-0.1 2.3l-0.1 2.3l-0.1 2.3l-0.1 2.3l-0.1 2.4l0 2.3l-0.1 2.3l-0.1 2.3l-0.1 2.3l-0.1 2.3l11.8 0l0.1-2.3l0.1-2.3l0-2.3l0.1-2.3l0.1-2.3l0.1-2.3l0.1-2.3l0.1-2.3l0.1-2.3l0.1-2.3l0.1-2.3l0.1-2.3l0.1-2.3l0.1-2.3l0.1-2.3l0.1-2.3l0.1-2.3l0.1-2.2l0.1-2.3l0.2-2.3l0.1-2.3l0.2-2.3l0.2-2.3l0.1-2.3l0.2-2.3l0.2-2.3l0.2-2.3l0.3-2.3l0.2-2.3l0.2-2.2zM1074 251.2l-0.2 2.2l-0.2 2.3l-0.3 2.3l-0.2 2.3l-0.2 2.3l-0.2 2.3l-0.1 2.3l-0.2 2.3l-0.2 2.3l-0.1 2.3l-0.2 2.3l-0.1 2.3l-0.1 2.2l-0.1 2.3l-0.1 2.3l-0.1 2.3l-0.1 2.3l-0.1 2.3l-0.1 2.3l-0.1 2.3l-0.1 2.3l-0.1 2.3l-0.1 2.3l-0.1 2.3l-0.1 2.3l-0.1 2.3l11.8 0.1l0.1-2.3l0.1-2.3l0.1-2.3l0.1-2.3l0.1-2.3l0-2.3l0.1-2.2l0.1-2.3l0.1-2.3l0.1-2.3l0.2-2.3l0.1-2.3l0.1-2.3l0.1-2.2l0.1-2.3l0.2-2.3l0.1-2.3l0.2-2.3l0.2-2.2l0.2-2.3l0.2-2.3l0.2-2.3l0.2-2.3l0.2-2.2l0.3-2.3l0.2-2.3zM1085.9 251.5l-0.2 2.3l-0.3 2.3l-0.2 2.2l-0.2 2.3l-0.2 2.3l-0.2 2.3l-0.2 2.3l-0.2 2.2l-0.2 2.3l-0.1 2.3l-0.2 2.3l-0.1 2.3l-0.1 2.2l-0.1 2.3l-0.1 2.3l-0.2 2.3l-0.1 2.3l-0.1 2.3l-0.1 2.3l-0.1 2.2l0 2.3l-0.1 2.3l-0.1 2.3l-0.1 2.3l-0.1 2.3l-0.1 2.3l-0.1 2.2l-0.1 2.3l-0.1 2.3l-0.1 2.3l11.8 0l0.1-2.3l0.1-2.2l0.1-2.3l0.1-2.3l0.1-2.3l0.1-2.2l0-2.3l0.1-2.3l0.1-2.3l0.1-2.2l0.1-2.3l0.1-2.3l0.1-2.3l0.1-2.2l0.1-2.3l0.2-2.3l0.1-2.2l0.1-2.3l0.1-2.3l0.2-2.3l0.1-2.2l0.2-2.3l0.2-2.3l0.2-2.2l0.2-2.3l0.2-2.3l0.3-2.2l0.2-2.3l0.3-2.3l0.2-2.2z" fill="#00da00" stroke="#00da00" stroke-width=".5"/><path d="M1100.6 229.3l-0.3 2.3l-0.3 2.2l-0.2 2.3l-0.3 2.2l-0.3 2.3l-0.3 2.2l-0.3 2.3l-0.3 2.3l-0.2 2.2l-0.3 2.3l11.9 0.1l0.3-2.3l0.2-2.2l0.3-2.3l0.3-2.2l0.3-2.3l0.2-2.2l0.3-2.3l0.3-2.2l0.3-2.3l0.3-2.2zM1112.5 229.5l-0.3 2.2l-0.3 2.3l-0.3 2.2l-0.3 2.3l-0.2 2.2l-0.3 2.3l-0.3 2.2l-0.3 2.3l-0.2 2.2l-0.3 2.3l11.9 0l0.2-2.2l0.3-2.3l0.3-2.2l0.3-2.2l0.2-2.3l0.3-2.2l0.3-2.2l0.3-2.3l0.3-2.2l0.2-2.3zM1124.3 229.6l-0.2 2.3l-0.3 2.2l-0.3 2.3l-0.3 2.2l-0.3 2.2l-0.2 2.3l-0.3 2.2l-0.3 2.2l-0.3 2.3l-0.2 2.2l11.9 0.1l0.2-2.2l0.3-2.3l0.3-2.2l0.2-2.2l0.3-2.3l0.3-2.2l0.3-2.2l0.2-2.2l0.3-2.3l0.3-2.2z" fill="#1e964b" stroke="#1e964b" stroke-width=".5"/><path d="M1097.8 251.9l-0.2 2.2l-0.3 2.3l-0.2 2.3l-0.3 2.2l11.9 0.1l0.3-2.3l0.2-2.2l0.2-2.3l0.3-2.2zM1109.7 252l-0.3 2.2l-0.2 2.3l-0.2 2.2l-0.3 2.3l12 0l0.2-2.2l0.2-2.3l0.2-2.2l0.3-2.3zM1121.6 252l-0.3 2.3l-0.2 2.2l-0.2 2.3l-0.2 2.2l11.9 0l0.2-2.2l0.2-2.2l0.2-2.3l0.3-2.2z" fill="#00f087" stroke="#00f087" stroke-width=".5"/><path d="M1096.8 260.9l-0.2 2.3l-0.2 2.3l-0.2 2.2l-0.2 2.3l-0.2 2.3l-0.1 2.2l-0.2 2.3l-0.1 2.3l-0.1 2.3l-0.1 2.2l-0.2 2.3l-0.1 2.3l-0.1 2.2l-0.1 2.3l-0.1 2.3l-0.1 2.3l-0.1 2.2l-0.1 2.3l-0.1 2.3l0 2.3l-0.1 2.2l-0.1 2.3l-0.1 2.3l-0.1 2.3l-0.1 2.2l-0.1 2.3l13.1-0.2l0-2.3l0.1-2.2l0-2.3l0-2.3l0-2.2l0-2.3l0.1-2.2l0-2.3l0-2.3l0.1-2.2l0-2.3l0.1-2.3l0-2.2l0.1-2.3l0.1-2.3l0-2.2l0.1-2.3l0.1-2.3l0.1-2.2l0.1-2.3l0.2-2.2l0.1-2.3l0.2-2.3l0.1-2.2l0.2-2.3l0.2-2.2zM1108.7 261l-0.2 2.2l-0.2 2.3l-0.1 2.2l-0.2 2.3l-0.1 2.3l-0.2 2.2l-0.1 2.3l-0.1 2.2l-0.1 2.3l-0.1 2.3l0 2.2l-0.1 2.3l-0.1 2.3l0 2.2l-0.1 2.3l0 2.3l-0.1 2.2l0 2.3l0 2.3l-0.1 2.2l0 2.3l0 2.2l0 2.3l0 2.3l-0.1 2.2l0 2.3l13.1-0.2l0-2.3l-0.1-2.2l0-2.3l-0.1-2.2l0-2.3l-0.1-2.2l0-2.3l0-2.2l-0.1-2.3l0-2.2l0-2.3l0-2.2l0-2.3l0-2.3l0.1-2.2l0-2.3l0.1-2.2l0-2.3l0.1-2.2l0.1-2.3l0.1-2.2l0.1-2.3l0.2-2.2l0.1-2.3l0.2-2.2l0.2-2.3zM1120.7 261l-0.2 2.3l-0.2 2.2l-0.1 2.3l-0.2 2.2l-0.1 2.3l-0.1 2.2l-0.1 2.3l-0.1 2.2l0 2.3l-0.1 2.2l0 2.3l-0.1 2.2l0 2.3l0 2.3l0 2.2l0 2.3l0 2.2l0.1 2.3l0 2.2l0 2.3l0.1 2.2l0 2.3l0.1 2.2l0 2.3l0.1 2.2l0 2.3l13.1-0.2l-0.1-2.2l-0.1-2.3l-0.1-2.2l-0.1-2.3l-0.2-2.2l-0.1-2.3l-0.1-2.2l-0.1-2.3l0-2.2l-0.1-2.2l-0.1-2.3l-0.1-2.2l0-2.3l0-2.2l0-2.3l0-2.2l0-2.3l0-2.2l0.1-2.3l0-2.2l0.1-2.2l0.1-2.3l0.1-2.2l0.2-2.3l0.1-2.2l0.2-2.3z" fill="#00de00" stroke="#00de00" stroke-width=".5"/><path d="M989.9 320.6l73.1-0.8l0 7.6l-73.1 0.6z" fill="#00eb00" stroke="#00eb00" stroke-width=".5"/><path d="M1063 319.8l72.4-0.9l0 7.9l-72.4 0.6z" fill="#00fa8c" stroke="#00fa8c" stroke-width=".5"/><path d="M987.3 338.8l0.2 2.5l0.3 2.5l0.4 2.5l0.5 2.5l0.5 2.5l11.6-0.9l-0.5-2.4l-0.4-2.4l-0.3-2.5l-0.2-2.4l-0.2-2.5zM999.2 338.2l0.2 2.5l0.2 2.4l0.3 2.5l0.4 2.4l0.5 2.4l11.5-0.9l-0.4-2.3l-0.3-2.4l-0.2-2.3l-0.2-2.4l-0.2-2.4zM1011 337.7l0.2 2.4l0.2 2.4l0.2 2.3l0.3 2.4l0.4 2.3l11.5-0.9l-0.2-2.2l-0.3-2.3l-0.2-2.3l-0.1-2.3l-0.2-2.3z" fill="#fcf500" stroke="#fcf500" stroke-width=".5"/><path d="M989.2 351.3l0.6 2.5l0.7 2.5l0.7 2.4l0.8 2.4l0.9 2.4l1.1 2.3l1.1 2.3l1.2 2.2l10.3-1.2l-1-2.2l-0.9-2.3l-0.8-2.3l-0.8-2.3l-0.7-2.4l-0.6-2.4l-0.5-2.4l-0.5-2.4zM1000.8 350.4l0.5 2.4l0.5 2.4l0.6 2.4l0.7 2.4l0.8 2.3l0.8 2.3l0.9 2.3l1 2.2l10.2-1.2l-0.7-2.2l-0.7-2.3l-0.6-2.3l-0.6-2.3l-0.5-2.3l-0.5-2.3l-0.5-2.3l-0.4-2.4zM1012.3 349.5l0.4 2.4l0.5 2.3l0.5 2.3l0.5 2.3l0.6 2.3l0.6 2.3l0.7 2.3l0.7 2.2l10.3-1.2l-0.5-2.2l-0.4-2.3l-0.5-2.2l-0.4-2.3l-0.4-2.2l-0.4-2.3l-0.4-2.3l-0.3-2.3z" fill="#fae100" stroke="#fae100" stroke-width=".5"/><path d="M996.3 370.3l1.2 2.3l1.3 2.2l1.2 2.2l9.5-1.2l-1-2.2l-1-2.2l-0.9-2.3zM1006.6 369.1l0.9 2.3l1 2.2l1 2.2l9.5-1.1l-0.7-2.3l-0.7-2.2l-0.8-2.3zM1016.8 367.9l0.8 2.3l0.7 2.2l0.7 2.3l9.5-1.2l-0.5-2.3l-0.4-2.2l-0.5-2.3zM1027.1 366.7l0.5 2.3l0.4 2.2l0.5 2.3l12-0.7l-0.5-2.2l-0.4-2.2l-0.5-2.2zM1039.1 366.2l0.5 2.2l0.4 2.2l0.5 2.2l12-0.6l-0.5-2.2l-0.5-2.2l-0.5-2.2zM1051 365.6l0.5 2.2l0.5 2.2l0.5 2.2l12-0.7l-0.5-2.2l-0.5-2.1l-0.5-2.2zM1063 365l0.5 2.2l0.5 2.1l0.5 2.2l11.6-0.4l-0.5-2.2l-0.5-2.1l-0.5-2.2zM1074.6 364.6l0.5 2.2l0.5 2.1l0.5 2.2l11.7-0.4l-0.5-2.1l-0.5-2.2l-0.6-2.1zM1086.2 364.3l0.6 2.1l0.5 2.2l0.5 2.1l11.6-0.4l-0.5-2.1l-0.5-2.1l-0.5-2.2zM1097.9 363.9l0.5 2.2l0.5 2.1l0.5 2.1l12.3-0.6l-0.5-2.1l-0.5-2l-0.4-2.1zM1110.3 363.5l0.4 2.1l0.5 2l0.5 2.1l12.2-0.6l-0.4-2l-0.4-2.1l-0.4-2zM1122.7 363l0.4 2l0.4 2.1l0.4 2l12.3-0.6l-0.4-2l-0.3-2l-0.4-1.9z" fill="#87eb00" stroke="#87eb00" stroke-width=".5"/><path d="M1093.6 327.2l0.1 2.2l0.1 2.2l0.1 2.1l0.1 2.2l0.1 2.2l0.1 2.2l0.1 2.2l0.2 2.1l0.1 2.2l12.7-0.1l-0.3-2.1l-0.1-2.1l-0.2-2.1l-0.2-2.1l-0.1-2.1l-0.1-2.2l-0.2-2.1l-0.1-2.1l-0.1-2.1zM1105.9 327.7l0.1 2.1l0.1 2.1l0.2 2.1l0.1 2.2l0.1 2.1l0.2 2.1l0.2 2.1l0.1 2.1l0.3 2.1l12.6 0l-0.3-2.1l-0.2-2l-0.2-2.1l-0.2-2.1l-0.2-2l-0.1-2.1l-0.2-2l-0.2-2.1l-0.2-2.1zM1118.1 328.1l0.2 2.1l0.2 2.1l0.2 2l0.1 2.1l0.2 2l0.2 2.1l0.2 2.1l0.2 2l0.3 2.1l0.2 2l0.3 2.1l0.3 2l0.4 2.1l0.4 2l0.4 2.1l0.4 2l0.4 2l12.4-0.4l-0.4-2l-0.3-2l-0.4-2l-0.3-2l-0.4-2l-0.3-2l-0.3-2l-0.2-2l-0.3-2l-0.2-2l-0.3-2l-0.2-2l-0.2-2l-0.2-2l-0.3-2l-0.2-2l-0.2-2z" fill="#8ceb00" stroke="#8ceb00" stroke-width=".5"/><path d="M1094.6 346.8l0.3 2.2l0.3 2.1l0.3 2.2l0.4 2.1l0.5 2.2l0.5 2.1l0.4 2.1l0.6 2.1l12.4-0.4l-0.5-2.1l-0.4-2.1l-0.5-2.1l-0.4-2l-0.4-2.1l-0.3-2.1l-0.3-2.1l-0.2-2.2zM1107.3 346.7l0.2 2.2l0.3 2.1l0.3 2.1l0.4 2.1l0.4 2l0.5 2.1l0.4 2.1l0.5 2.1l12.4-0.5l-0.4-2l-0.4-2l-0.4-2.1l-0.4-2l-0.4-2.1l-0.3-2l-0.3-2.1l-0.2-2z" fill="#f0f500" stroke="#f0f500" stroke-width=".5"/><path d="M991.3 248.6l35.7 1.3M990.8 256.6l35.3 1M990.3 264.5l35.1 0.9M989.7 272.4l35.1 0.8M989.2 280.3l35 0.7M988.7 288.3l35.1 0.5M988.2 296.2l35.2 0.4M987.6 304.1l35.4 0.3M987.1 312l35.5 0.2M1027 249.9l35.1 1.6M1026.1 257.6l35.3 1.5M1025.4 265.4l35.3 1.3M1024.8 273.2l35.4 1.1M1024.2 281l35.6 0.9M1023.8 288.8l35.7 0.7M1023.4 296.6l35.8 0.5M1023 304.4l35.9 0.3M1022.6 312.2l36 0.2M1062.1 251.5l35.6 1.1M1061.4 259.1l35.5 1M1060.7 266.7l35.5 0.8M1060.2 274.3l35.5 0.7M1059.8 281.9l35.4 0.6M1059.5 289.5l35.3 0.5M1059.2 297.1l35.3 0.4M1058.9 304.7l35.3 0.3M1058.6 312.4l35.3 0.1M1097.7 252.6l35.7 0.2M1096.9 260.1l35.8 0.1M1096.2 267.5l35.9 0.1M1095.7 275l36.1 0M1095.2 282.5l36.5-0.1M1094.8 290l36.9-0.2M1094.5 297.5l37.4-0.3M1094.2 305l38-0.4M1093.9 312.5l38.6-0.5M987.3 338.8l35.5-1.6M988.7 348.8l34.9-2.4M991.2 358.7l33.7-3.2M995.1 368.1l31.5-3.6M1000 377l28.5-3.5M1022.8 337.2l36-0.7M1023.6 346.4l35.9-1.1M1024.9 355.5l35.8-1.4M1026.6 364.5l35.9-1.7M1028.5 373.5l36-2M1058.8 336.5l35.2-0.6M1059.5 345.3l35-0.7M1060.7 354.1l34.8-0.8M1062.5 362.8l34.8-1M1064.5 371.5l34.9-1.2M1094 335.9l37.3 0.7M1094.5 344.6l37.7 0M1095.5 353.3l37.8-0.7M1097.3 361.8l37.4-1.2M1099.4 370.3l36.8-1.8" fill="none" stroke="#6e1400" stroke-width="0.75" stroke-opacity="0.85"/><path d="M994.4 225.1l35.2 1.6M994.2 226.2l35.3 1.6M994 227.3l35.3 1.6M993.8 228.5l35.4 1.5M993.6 229.6l35.5 1.5M993.4 230.7l35.6 1.5M993.2 231.8l35.6 1.5M993 232.9l35.7 1.5M992.9 234l35.7 1.5M992.7 235.1l35.7 1.5M992.6 236.3l35.7 1.4M992.4 237.4l35.8 1.4M992.3 238.5l35.8 1.4M992.2 239.6l35.7 1.5M992 240.8l35.8 1.4M991.9 241.9l35.8 1.4M991.8 243l35.8 1.4M991.7 244.1l35.7 1.4M991.6 245.3l35.7 1.3M991.5 246.4l35.7 1.3M991.4 247.5l35.7 1.3M1029.6 226.7l34.8 2.2M1029.5 227.8l34.8 2.2M1029.3 228.9l34.9 2.1M1029.2 230l34.9 2.1M1029.1 231.1l34.8 2.1M1029 232.2l34.8 2.1M1028.8 233.3l34.9 2M1028.7 234.4l34.9 2M1028.6 235.5l34.9 2M1028.4 236.6l35 2M1028.3 237.7l35 2M1028.2 238.8l35 1.9M1028.1 239.9l34.9 1.9M1027.9 241.1l35 1.8M1027.8 242.2l35 1.8M1027.7 243.3l35 1.8M1027.6 244.4l35 1.7M1027.4 245.5l35.1 1.7M1027.3 246.6l35.1 1.7M1027.2 247.7l35.1 1.7M1027.1 248.8l35.1 1.6M1064.4 228.9l36.1 1.5M1064.3 230l36 1.4M1064.2 231l36 1.5M1064.1 232.1l36 1.4M1063.9 233.2l36 1.4M1063.8 234.3l36 1.4M1063.7 235.3l36 1.4M1063.6 236.4l35.9 1.4M1063.5 237.5l35.9 1.3M1063.4 238.6l35.9 1.3M1063.3 239.7l35.8 1.3M1063.2 240.7l35.8 1.3M1063 241.8l35.9 1.3M1062.9 242.9l35.8 1.2M1062.8 244l35.8 1.2M1062.7 245.1l35.8 1.1M1062.6 246.1l35.8 1.2M1062.5 247.2l35.7 1.2M1062.4 248.3l35.7 1.1M1062.3 249.4l35.7 1.1M1062.2 250.4l35.7 1.1M1100.5 230.4l35.6 0.4M1100.3 231.4l35.6 0.5M1100.2 232.5l35.6 0.4M1100.1 233.5l35.6 0.5M1099.9 234.6l35.7 0.4M1099.8 235.7l35.6 0.4M1099.7 236.7l35.6 0.4M1099.5 237.8l35.7 0.4M1099.4 238.8l35.6 0.4M1099.3 239.9l35.6 0.4M1099.1 241l35.7 0.3M1099 242l35.6 0.3M1098.9 243.1l35.6 0.3M1098.7 244.1l35.7 0.3M1098.6 245.2l35.6 0.3M1098.5 246.2l35.6 0.3M1098.4 247.3l35.6 0.3M1098.2 248.4l35.7 0.2M1098.1 249.4l35.6 0.3M1098 250.5l35.6 0.2M1097.9 251.5l35.6 0.3" fill="none" stroke="#6e1400" stroke-width="0.53" stroke-opacity="0.7"/><path d="M994.6 224l-1.4 7.9l-1.1 8l-0.7 8l-0.6 8l-0.5 8l-0.5 8l-0.6 8l-0.5 8l-0.5 8.1l-0.6 8l-0.5 8l-0.5 8M1029.7 225.6l-0.9 7.8l-0.9 7.9l-0.9 7.8l-0.8 7.9l-0.8 7.8l-0.6 7.9l-0.5 7.9l-0.5 7.9l-0.4 7.8l-0.4 7.9l-0.4 7.9l-0.4 7.9M1064.5 227.8l-0.8 7.7l-0.8 7.6l-0.8 7.7l-0.7 7.7l-0.6 7.6l-0.5 7.7l-0.4 7.7l-0.4 7.7l-0.3 7.7l-0.3 7.7l-0.3 7.7l-0.3 7.7M1100.6 229.3l-0.9 7.5l-1 7.6l-0.9 7.5l-0.8 7.5l-0.7 7.6l-0.6 7.5l-0.5 7.6l-0.3 7.6l-0.4 7.6l-0.3 7.5l-0.3 7.6l-0.3 7.6M1136.2 229.8l-0.9 7.4l-1 7.5l-0.8 7.4l-0.8 7.4l-0.5 7.5l-0.4 7.5l-0.1 7.5l0 7.5l0.2 7.5l0.3 7.4l0.3 7.5l0.4 7.5M986.9 328.6l0.2 5.1l0.2 5.1l0.5 5l0.9 5l1.1 5l1.4 4.9l1.7 4.8l2.2 4.6l2.4 4.5l2.5 4.4M1022.2 328l0.3 4.6l0.3 4.6l0.3 4.6l0.5 4.6l0.5 4.5l0.8 4.6l0.8 4.5l0.9 4.5l1 4.5l0.9 4.5M1058.3 327.6l0.3 4.4l0.2 4.5l0.3 4.4l0.4 4.4l0.5 4.5l0.7 4.3l0.9 4.4l0.9 4.3l1 4.4l1 4.3M1093.6 327.2l0.2 4.4l0.2 4.3l0.2 4.4l0.3 4.3l0.4 4.4l0.6 4.3l0.9 4.3l0.9 4.2l1.1 4.3l1 4.2M1130.4 328.6l0.4 4l0.5 4l0.4 4l0.5 4l0.5 4l0.6 4l0.7 4l0.7 4l0.8 3.9l0.7 4" fill="none" stroke="#6e1400" stroke-width="0.88" stroke-opacity="0.9"/><path d="M989.9 320.6l145.5-1.7l0 7.9l-145.5 1.2" fill="none" stroke="#6e1400" stroke-width="1.0" stroke-opacity="0.9"/><path d="M1026 319.5l0 8.2M1063 319.5l0 8.2M1098 319.5l0 8.2" fill="none" stroke="#6e1400" stroke-width="0.75" stroke-opacity="0.9"/><path d="M788 338.2l0 7.7l0.3 7.8l1 7.6l1.3 7.7l1.4 7.6l2.6 7.3l4.6 6.2l5.8 5l6.6 4.1l7.2 3l7.3 2.4l7.4 2.4l0-4.9l-37.5 2.4l-5.5-32.5l-2.5-27zM828.8 332.5l0 7.1l0.3 7.1l0.6 7l0.9 7l1.5 6.9l2.4 6.6l3.7 6.1l4.7 5.2l5.3 4.7l5.6 4.3l6.4 2.9l6.8 2.1l0-2.5l-30 3.6l-5.5-28.6l-2.5-27zM869.4 329.3l0.1 6.6l0.3 6.5l0.7 6.6l1.1 6.5l1.6 6.4l2.1 6.2l2.8 5.9l3.9 5.3l4.8 4.5l5.4 3.7l6 2.7l6.2 2.3l0-2.1l-26.4 3.7l-5.5-22.1l-2.5-27zM909.5 327.8l0.2 6.3l0.4 6.2l0.8 6.2l1.1 6.2l1.7 6.1l2.1 5.9l2.6 5.6l3.5 5.2l4.9 3.9l5.5 2.9l5.9 2.3l6 1.7l0-1.3l-25.6 2.3l-5.5-15.3l-2.5-27zM949.8 326.5l0.3 6l0.4 6l0.5 6l0.7 5.9l1.1 5.9l1.9 5.7l2.8 5.3l3.6 4.9l4.6 3.8l5.1 3.2l5.4 2.5l5.8 1.6l0-1.3l-22.4 0.6l-5.5-10.6l-2.5-27zM986.2 322.9l0 5.6l0.2 5.6l0.3 5.6l0.5 5.6l1 5.5l1.6 5.4l2.2 5.1l2.7 4.9l3.4 4.4l4.1 3.9l4.8 2.7l5.3 1.8l0 1.5l-17.4-0.6l-5.5-7.9l-2.5-27z" fill="#14e800" stroke="#14e800" stroke-width=".5"/><path d="M796.4 225l-0.8 5.1l-0.8 5.1l-0.7 5.1l-0.7 5.1l-0.5 5.2l-0.6 5.1l-0.4 5.2l-0.5 5.1l-0.4 5.1l-0.4 5.2l-0.3 5.1l-0.4 5.2l-0.3 5.2l-0.3 5.1l-0.3 5.2l-0.3 5.1l-0.2 5.2l-0.2 5.1l-0.2 5.2l-0.2 5.2l-0.2 5.1l-0.1 5.2l0 5.1l0.1 5.2l0.2 5.2l0.6 5.1l0.9 5.1l0.8 5.1l0.9 5.1l1.2 5l1.9 4.8l2.9 4.2l3.5 3.8l4 3.2l4.4 2.9l4.6 2.3l4.8 1.9l4.9 1.6l4.9 1.6l4.9 1.6M836.2 229.2l-0.4 4.7l-0.3 4.7l-0.4 4.7l-0.4 4.7l-0.4 4.7l-0.4 4.7l-0.4 4.7l-0.5 4.7l-0.5 4.6l-0.4 4.7l-0.5 4.7l-0.4 4.7l-0.4 4.7l-0.3 4.7l-0.4 4.7l-0.3 4.7l-0.3 4.7l-0.3 4.7l-0.2 4.7l-0.3 4.7l-0.1 4.7l-0.2 4.7l0 4.8l0.1 4.7l0.2 4.7l0.4 4.7l0.4 4.7l0.7 4.6l0.9 4.6l1.3 4.6l1.7 4.3l2.4 4.1l2.8 3.8l3.2 3.4l3.5 3.2l3.6 3l3.8 2.8l4.2 2.1l4.5 1.5l4.5 1.4M875.8 233l-0.5 4.4l-0.6 4.3l-0.4 4.4l-0.5 4.3l-0.4 4.4l-0.4 4.4l-0.4 4.4l-0.4 4.3l-0.4 4.4l-0.4 4.4l-0.3 4.3l-0.4 4.4l-0.3 4.4l-0.3 4.4l-0.2 4.4l-0.2 4.3l-0.2 4.4l-0.2 4.4l-0.1 4.4l-0.1 4.4l-0.1 4.4l0 4.4l0 4.4l0.2 4.3l0.2 4.4l0.4 4.4l0.6 4.3l0.8 4.4l1 4.2l1.2 4.3l1.5 4.1l1.8 4l2.1 3.8l2.8 3.4l3.1 3.1l3.5 2.7l3.6 2.4l4 1.9l4.1 1.6l4.1 1.5M914.6 236.1l-0.4 4.2l-0.5 4.1l-0.4 4.2l-0.5 4.1l-0.4 4.2l-0.5 4.1l-0.4 4.2l-0.4 4.2l-0.3 4.1l-0.4 4.2l-0.4 4.1l-0.3 4.2l-0.2 4.2l-0.2 4.2l-0.1 4.1l0 4.2l-0.1 4.2l0 4.2l0 4.2l0 4.1l0 4.2l0 4.2l0.2 4.2l0.2 4.2l0.2 4.1l0.5 4.2l0.6 4.1l0.8 4.1l1.1 4.1l1.2 3.9l1.5 4l1.7 3.8l1.9 3.7l2.5 3.3l3.1 2.8l3.6 2.1l3.7 1.9l3.9 1.7l4 1.2l4 1.1M953.1 238.6l-0.4 4l-0.5 4l-0.4 3.9l-0.4 4l-0.4 4l-0.4 4l-0.4 4l-0.4 4l-0.3 4l-0.3 4l-0.3 4l-0.3 4l-0.1 4l-0.1 4l0.1 4l0.1 4l0.1 4l0.1 4l0.1 4l0.1 4l0.2 4l0.2 4l0.2 4l0.2 4l0.3 4l0.3 4l0.4 4l0.5 3.9l0.7 4l1 3.9l1.3 3.7l1.8 3.6l2.1 3.4l2.5 3.2l2.9 2.6l3.3 2.3l3.5 2.1l3.5 1.8l3.8 1.2l3.9 1.1M991.6 241.1l-0.3 3.7l-0.2 3.7l-0.2 3.8l-0.3 3.7l-0.3 3.7l-0.2 3.7l-0.3 3.8l-0.3 3.7l-0.4 3.7l-0.4 3.7l-0.6 3.7l-0.5 3.7l-0.6 3.7l-0.4 3.7l-0.3 3.7l-0.2 3.7l-0.1 3.8l-0.1 3.7l-0.1 3.7l0 3.7l0 3.8l0 3.7l0 3.7l0.1 3.8l0.1 3.7l0.2 3.7l0.2 3.8l0.4 3.7l0.6 3.7l0.8 3.6l1.2 3.6l1.4 3.4l1.6 3.4l1.9 3.2l2.2 3l2.5 2.7l2.8 2.6l3.1 2l3.5 1.3l3.5 1.2" fill="none" stroke="#9cdc00" stroke-width="5.2" stroke-opacity="1"/><path d="M797.6 225.3l-0.5 3.1l-0.4 3l-0.5 3.1l-0.5 3.1l-0.4 3l-0.4 3.1l-0.4 3.1l-0.3 3M837.4 229.5l-0.2 2.8l-0.2 2.8l-0.2 2.9l-0.3 2.8l-0.2 2.8l-0.2 2.8l-0.3 2.8l-0.2 2.8M877 233.3l-0.3 2.6l-0.3 2.6l-0.4 2.6l-0.2 2.7l-0.3 2.6l-0.3 2.6l-0.2 2.6l-0.3 2.6M915.8 236.4l-0.3 2.5l-0.2 2.5l-0.3 2.5l-0.3 2.5l-0.2 2.5l-0.3 2.5l-0.3 2.5l-0.2 2.4M954.3 238.9l-0.3 2.4l-0.2 2.4l-0.3 2.4l-0.2 2.4l-0.3 2.3l-0.3 2.4l-0.2 2.4l-0.3 2.4M992.8 241.4l-0.2 2.2l-0.1 2.3l-0.1 2.2l-0.2 2.2l-0.1 2.3l-0.2 2.2l-0.1 2.2l-0.2 2.3" fill="none" stroke="#1880ff" stroke-width="3.4" stroke-opacity="1"/><path d="M794.2 249.8l-0.4 3.9l-0.4 4l-0.4 3.9l-0.3 3.9l-0.3 3.9l-0.3 3.9l-0.3 3.9l-0.3 3.9l-0.3 3.9l-0.2 4l-0.3 3.9l-0.2 3.9l-0.2 3.9l-0.2 3.9l-0.2 4l-0.2 3.9l-0.2 3.9l-0.1 3.9l-0.2 3.9l-0.1 4M835.6 252l-0.3 3.6l-0.3 3.6l-0.4 3.5l-0.3 3.6l-0.4 3.6l-0.3 3.5l-0.4 3.6l-0.3 3.6l-0.3 3.5l-0.3 3.6l-0.3 3.6l-0.3 3.5l-0.3 3.6l-0.2 3.6l-0.2 3.5l-0.3 3.6l-0.2 3.6l-0.2 3.6l-0.2 3.5l-0.2 3.6M874.7 254.2l-0.3 3.4l-0.3 3.3l-0.3 3.3l-0.3 3.3l-0.3 3.3l-0.3 3.4l-0.3 3.3l-0.3 3.3l-0.3 3.3l-0.2 3.4l-0.2 3.3l-0.3 3.3l-0.2 3.4l-0.1 3.3l-0.2 3.3l-0.1 3.4l-0.1 3.3l-0.1 3.3l-0.1 3.4l-0.1 3.3M913.7 256.3l-0.4 3.2l-0.3 3.2l-0.3 3.1l-0.3 3.2l-0.3 3.2l-0.3 3.1l-0.3 3.2l-0.2 3.1l-0.3 3.2l-0.2 3.2l-0.2 3.2l-0.1 3.1l-0.1 3.2l0 3.2l0 3.2l-0.1 3.1l0 3.2l0 3.2l-0.1 3.2l0.1 3.1M952.2 258l-0.3 3l-0.3 3.1l-0.3 3l-0.2 3l-0.3 3.1l-0.2 3l-0.3 3l-0.2 3.1l-0.2 3l-0.1 3.1l-0.1 3l-0.1 3l0.1 3.1l0 3l0.1 3.1l0 3l0.1 3.1l0.1 3l0.1 3l0.1 3.1M991.6 259.3l-0.2 2.8l-0.2 2.8l-0.2 2.9l-0.3 2.8l-0.2 2.8l-0.3 2.8l-0.4 2.8l-0.4 2.8l-0.4 2.9l-0.5 2.8l-0.3 2.8l-0.4 2.8l-0.2 2.8l-0.2 2.8l-0.1 2.9l-0.1 2.8l-0.1 2.8l-0.1 2.9l0 2.8l0 2.8" fill="none" stroke="#10d0ff" stroke-width="3.4" stroke-opacity="1"/><path d="M789.1 328.2l-0.1 4.3l-0.1 4.3l-0.1 4.3l0 4.3l0.1 4.3l0.2 4.3l0.5 4.2l0.7 4.3l0.7 4.2l0.7 4.3l0.7 4.2l1.1 4.2l1.5 4l2.2 3.7l2.8 3.3l3.1 2.9l3.4 2.6l3.7 2.4l3.8 1.9l4 1.7l4 1.4l4.1 1.4l4.1 1.3l4.1 1.3M829.9 323.4l-0.1 3.9l-0.1 4l-0.1 3.9l0 3.9l0.1 3.9l0.2 4l0.3 3.9l0.3 3.9l0.5 3.9l0.7 3.9l0.8 3.8l1.1 3.8l1.4 3.6l1.8 3.5l2.2 3.3l2.6 3l2.7 2.8l2.9 2.6l3 2.5l3.1 2.4l3.4 2l3.6 1.6l3.7 1.2l3.8 1.1M870.3 320.8l-0.1 3.6l0 3.7l0 3.7l0.1 3.6l0.1 3.7l0.2 3.6l0.3 3.7l0.5 3.6l0.5 3.6l0.8 3.6l0.8 3.6l1.1 3.5l1.2 3.4l1.4 3.4l1.7 3.2l2 3.1l2.4 2.8l2.6 2.5l2.9 2.3l3 2.1l3.2 1.7l3.3 1.4l3.5 1.3l3.4 1.3M910.3 319.7l0 3.5l0 3.5l0.1 3.5l0.1 3.5l0.2 3.4l0.2 3.5l0.4 3.5l0.5 3.4l0.6 3.5l0.8 3.4l0.9 3.3l1 3.3l1.2 3.3l1.4 3.2l1.5 3.1l1.8 3l2.2 2.7l2.6 2.3l3 1.7l3.1 1.7l3.1 1.5l3.3 1.2l3.3 1l3.4 0.9M950.2 318.8l0.2 3.3l0.1 3.4l0.2 3.3l0.1 3.3l0.3 3.4l0.2 3.3l0.2 3.3l0.3 3.3l0.4 3.3l0.5 3.3l0.7 3.3l0.8 3.3l1 3.1l1.4 3.1l1.7 2.8l1.9 2.8l2.1 2.5l2.5 2.2l2.8 2l2.8 1.7l2.9 1.6l3.1 1.3l3.2 1l3.2 0.9M987 315.7l0 3.2l0 3.1l0 3.1l0 3.1l0.1 3.1l0.1 3.1l0.1 3.1l0.3 3.1l0.2 3.1l0.4 3.1l0.5 3.1l0.7 3l0.9 3l1.2 2.9l1.3 2.8l1.4 2.8l1.6 2.6l1.9 2.5l2.1 2.3l2.2 2.1l2.4 2l2.8 1.4l2.9 1l3 1" fill="none" stroke="#10dca0" stroke-width="3.4" stroke-opacity="1"/><path d="M788.8 340.5l0 6.2M790.8 365.2l1 6.1M798.3 388.4l4.3 4.5M829.6 334.7l0 5.7M830.8 357.3l0.9 5.6M837.7 378.6l3.4 4.5M870.2 331.3l0.1 5.3M871.7 352.3l1 5.2M877.9 372.4l2.6 4.5M910.4 329.8l0.2 5M912.2 349.7l1 4.9M918.3 368.8l2.4 4.4M950.7 328.4l0.2 4.8M952.1 347.6l0.7 4.7M957.3 365.9l2.6 4.1M987 324.7l0.1 4.5M987.7 342.6l0.5 4.4M992 359.9l1.9 4" fill="none" stroke="#20c8f0" stroke-width="3.4" stroke-opacity="1"/><path d="M793.9 225l-0.8 5.1l-0.8 5.1l-0.7 5.1l-0.7 5.1l-0.5 5.2l-0.6 5.1l-0.4 5.2l-0.5 5.1l-0.4 5.1l-0.4 5.2l-0.3 5.1l-0.4 5.2l-0.3 5.2l-0.3 5.1l-0.3 5.2l-0.3 5.1l-0.2 5.2l-0.2 5.1l-0.2 5.2l-0.2 5.2l-0.2 5.1l-0.1 5.2l0 5.1l0.1 5.2l0.2 5.2l0.6 5.1l0.9 5.1l0.8 5.1l0.9 5.1l1.2 5l1.9 4.8l2.9 4.2l3.5 3.8l4 3.2l4.4 2.9l4.6 2.3l4.8 1.9l4.9 1.6l4.9 1.6l4.9 1.6M833.7 229.2l-0.4 4.7l-0.3 4.7l-0.4 4.7l-0.4 4.7l-0.4 4.7l-0.4 4.7l-0.4 4.7l-0.5 4.7l-0.5 4.6l-0.4 4.7l-0.5 4.7l-0.4 4.7l-0.4 4.7l-0.3 4.7l-0.4 4.7l-0.3 4.7l-0.3 4.7l-0.3 4.7l-0.2 4.7l-0.3 4.7l-0.1 4.7l-0.2 4.7l0 4.8l0.1 4.7l0.2 4.7l0.4 4.7l0.4 4.7l0.7 4.6l0.9 4.6l1.3 4.6l1.7 4.3l2.4 4.1l2.8 3.8l3.2 3.4l3.5 3.2l3.6 3l3.8 2.8l4.2 2.1l4.5 1.5l4.5 1.4M873.3 233l-0.5 4.4l-0.6 4.3l-0.4 4.4l-0.5 4.3l-0.4 4.4l-0.4 4.4l-0.4 4.4l-0.4 4.3l-0.4 4.4l-0.4 4.4l-0.3 4.3l-0.4 4.4l-0.3 4.4l-0.3 4.4l-0.2 4.4l-0.2 4.3l-0.2 4.4l-0.2 4.4l-0.1 4.4l-0.1 4.4l-0.1 4.4l0 4.4l0 4.4l0.2 4.3l0.2 4.4l0.4 4.4l0.6 4.3l0.8 4.4l1 4.2l1.2 4.3l1.5 4.1l1.8 4l2.1 3.8l2.8 3.4l3.1 3.1l3.5 2.7l3.6 2.4l4 1.9l4.1 1.6l4.1 1.5M912.1 236.1l-0.4 4.2l-0.5 4.1l-0.4 4.2l-0.5 4.1l-0.4 4.2l-0.5 4.1l-0.4 4.2l-0.4 4.2l-0.3 4.1l-0.4 4.2l-0.4 4.1l-0.3 4.2l-0.2 4.2l-0.2 4.2l-0.1 4.1l0 4.2l-0.1 4.2l0 4.2l0 4.2l0 4.1l0 4.2l0 4.2l0.2 4.2l0.2 4.2l0.2 4.1l0.5 4.2l0.6 4.1l0.8 4.1l1.1 4.1l1.2 3.9l1.5 4l1.7 3.8l1.9 3.7l2.5 3.3l3.1 2.8l3.6 2.1l3.7 1.9l3.9 1.7l4 1.2l4 1.1M950.6 238.6l-0.4 4l-0.5 4l-0.4 3.9l-0.4 4l-0.4 4l-0.4 4l-0.4 4l-0.4 4l-0.3 4l-0.3 4l-0.3 4l-0.3 4l-0.1 4l-0.1 4l0.1 4l0.1 4l0.1 4l0.1 4l0.1 4l0.1 4l0.2 4l0.2 4l0.2 4l0.2 4l0.3 4l0.3 4l0.4 4l0.5 3.9l0.7 4l1 3.9l1.3 3.7l1.8 3.6l2.1 3.4l2.5 3.2l2.9 2.6l3.3 2.3l3.5 2.1l3.5 1.8l3.8 1.2l3.9 1.1M989.1 241.1l-0.3 3.7l-0.2 3.7l-0.2 3.8l-0.3 3.7l-0.3 3.7l-0.2 3.7l-0.3 3.8l-0.3 3.7l-0.4 3.7l-0.4 3.7l-0.6 3.7l-0.5 3.7l-0.6 3.7l-0.4 3.7l-0.3 3.7l-0.2 3.7l-0.1 3.8l-0.1 3.7l-0.1 3.7l0 3.7l0 3.8l0 3.7l0 3.7l0.1 3.8l0.1 3.7l0.2 3.7l0.2 3.8l0.4 3.7l0.6 3.7l0.8 3.6l1.2 3.6l1.4 3.4l1.6 3.4l1.9 3.2l2.2 3l2.5 2.7l2.8 2.6l3.1 2l3.5 1.3l3.5 1.2" fill="none" stroke="#6e1400" stroke-width="0.62" stroke-opacity="0.9"/><path d="M799.4 225.4l-0.8 5.1l-0.8 5.1l-0.7 5.1l-0.7 5.1l-0.5 5.2l-0.6 5.1l-0.4 5.2l-0.5 5.1l-0.4 5.1l-0.4 5.2l-0.3 5.1l-0.4 5.2l-0.3 5.2l-0.3 5.1l-0.3 5.2l-0.3 5.1l-0.2 5.2l-0.2 5.1l-0.2 5.2l-0.2 5.2l-0.2 5.1l-0.1 5.2l0 5.1l0.1 5.2l0.2 5.2l0.6 5.1l0.9 5.1l0.8 5.1l0.9 5.1l1.2 5l1.9 4.8l2.9 4.2l3.5 3.8l4 3.2l4.4 2.9l4.6 2.3l4.8 1.9l4.9 1.6l4.9 1.6l4.9 1.6M839.2 229.6l-0.4 4.7l-0.3 4.7l-0.4 4.7l-0.4 4.7l-0.4 4.7l-0.4 4.7l-0.4 4.7l-0.5 4.7l-0.5 4.6l-0.4 4.7l-0.5 4.7l-0.4 4.7l-0.4 4.7l-0.3 4.7l-0.4 4.7l-0.3 4.7l-0.3 4.7l-0.3 4.7l-0.2 4.7l-0.3 4.7l-0.1 4.7l-0.2 4.7l0 4.8l0.1 4.7l0.2 4.7l0.4 4.7l0.4 4.7l0.7 4.6l0.9 4.6l1.3 4.6l1.7 4.3l2.4 4.1l2.8 3.8l3.2 3.4l3.5 3.2l3.6 3l3.8 2.8l4.2 2.1l4.5 1.5l4.5 1.4M878.8 233.4l-0.5 4.4l-0.6 4.3l-0.4 4.4l-0.5 4.3l-0.4 4.4l-0.4 4.4l-0.4 4.4l-0.4 4.3l-0.4 4.4l-0.4 4.4l-0.3 4.3l-0.4 4.4l-0.3 4.4l-0.3 4.4l-0.2 4.4l-0.2 4.3l-0.2 4.4l-0.2 4.4l-0.1 4.4l-0.1 4.4l-0.1 4.4l0 4.4l0 4.4l0.2 4.3l0.2 4.4l0.4 4.4l0.6 4.3l0.8 4.4l1 4.2l1.2 4.3l1.5 4.1l1.8 4l2.1 3.8l2.8 3.4l3.1 3.1l3.5 2.7l3.6 2.4l4 1.9l4.1 1.6l4.1 1.5M917.6 236.5l-0.4 4.2l-0.5 4.1l-0.4 4.2l-0.5 4.1l-0.4 4.2l-0.5 4.1l-0.4 4.2l-0.4 4.2l-0.3 4.1l-0.4 4.2l-0.4 4.1l-0.3 4.2l-0.2 4.2l-0.2 4.2l-0.1 4.1l0 4.2l-0.1 4.2l0 4.2l0 4.2l0 4.1l0 4.2l0 4.2l0.2 4.2l0.2 4.2l0.2 4.1l0.5 4.2l0.6 4.1l0.8 4.1l1.1 4.1l1.2 3.9l1.5 4l1.7 3.8l1.9 3.7l2.5 3.3l3.1 2.8l3.6 2.1l3.7 1.9l3.9 1.7l4 1.2l4 1.1M956.1 239l-0.4 4l-0.5 4l-0.4 3.9l-0.4 4l-0.4 4l-0.4 4l-0.4 4l-0.4 4l-0.3 4l-0.3 4l-0.3 4l-0.3 4l-0.1 4l-0.1 4l0.1 4l0.1 4l0.1 4l0.1 4l0.1 4l0.1 4l0.2 4l0.2 4l0.2 4l0.2 4l0.3 4l0.3 4l0.4 4l0.5 3.9l0.7 4l1 3.9l1.3 3.7l1.8 3.6l2.1 3.4l2.5 3.2l2.9 2.6l3.3 2.3l3.5 2.1l3.5 1.8l3.8 1.2l3.9 1.1M994.6 241.5l-0.3 3.7l-0.2 3.7l-0.2 3.8l-0.3 3.7l-0.3 3.7l-0.2 3.7l-0.3 3.8l-0.3 3.7l-0.4 3.7l-0.4 3.7l-0.6 3.7l-0.5 3.7l-0.6 3.7l-0.4 3.7l-0.3 3.7l-0.2 3.7l-0.1 3.8l-0.1 3.7l-0.1 3.7l0 3.7l0 3.8l0 3.7l0 3.7l0.1 3.8l0.1 3.7l0.2 3.7l0.2 3.8l0.4 3.7l0.6 3.7l0.8 3.6l1.2 3.6l1.4 3.4l1.6 3.4l1.9 3.2l2.2 3l2.5 2.7l2.8 2.6l3.1 2l3.5 1.3l3.5 1.2" fill="none" stroke="#6e1400" stroke-width="0.88" stroke-opacity="0.9"/><path d="M776 334l22-2.3l0 12.1l-22 2.6z" fill="#00e800" stroke="#00e800" stroke-width=".5"/><path d="M828.5 328.3l9.7-0.5l0 12l-9.7 0.5zM868.5 325.8l9.5-0.5l0 11.7l-9.5 0.5zM908.6 324l8.9-0.5l0 11.3l-8.9 0.5zM948.5 322.6l8.3-0.5l0 11.4l-8.3 0.5z" fill="#1eeb00" stroke="#1eeb00" stroke-width=".5"/><path d="M828.5 328.3l3.4-0.2l0 12l-3.4 0.2zM868.5 325.8l3.4-0.2l0 11.7l-3.4 0.2zM908.6 324l3.4-0.2l0 11.3l-3.4 0.2zM948.5 322.6l3.4-0.2l0 11.4l-3.4 0.2z" fill="#00d778" stroke="#00d778" stroke-width=".5"/><path d="M776 334l22-2.3" fill="none" stroke="#8a0a00" stroke-width="2.0" stroke-opacity="0.95"/><path d="M798 331.7l0 12.1l-22 2.6" fill="none" stroke="#6e1400" stroke-width="0.88" stroke-opacity="0.9"/><path d="M828.5 328.3l9.7-0.5l0 12l-9.7 0.5l0-12M868.5 325.8l9.5-0.5l0 11.7l-9.5 0.5l0-11.7M908.6 324l8.9-0.5l0 11.3l-8.9 0.5l0-11.3M948.5 322.6l8.3-0.5l0 11.4l-8.3 0.5l0-11.4" fill="none" stroke="#6e1400" stroke-width="0.75" stroke-opacity="0.9"/><path d="M797 202.2l6 1l6 0.9l6 0.9l6 0.8l6 0.8l6 0.8l6 0.8l6 0.8l6 0.8l6 0.8l6 0.7l6 0.7l6 0.8l6 0.6l6 0.6l6 0.6l6 0.5l6 0.6l6 0.7l6 0.6l6 0.6l6 0.6l6 0.6l6 0.5l6 0.6l6 0.6l6 0.5l6 0.5l6 0.6l6 0.5l6 0.5l6 0.5l6 0.4l-0.4 0l-2.6 17l-6-0.4l-6-0.4l-6-0.4l-6-0.4l-6-0.4l-6-0.4l-6-0.4l-6-0.3l-6-0.4l-6-0.4l-6-0.4l-6-0.4l-6-0.4l-6-0.4l-6-0.4l-6-0.5l-6-0.4l-6-0.5l-6-0.5l-6-0.6l-6-0.5l-6-0.6l-6-0.6l-6-0.6l-6-0.7l-6-0.6l-6-0.7l-6-0.6l-6-0.7l-6-0.7l-6-0.7l-6-0.7l-3.8-0.4z" fill="#e40c00" stroke="#e40c00" stroke-width=".5"/><path d="M810 205.1l12 1.7l0 10.3l-12-2zM850 210.5l12 1.5l0 10.2l-12-1.3zM890 215.1l12 1.1l0 10.5l-12-1.5zM930 219.1l12 1.1l0 9.2l-12-0.4zM966 222.4l10 0.9l0 8.4l-10-0.9z" fill="#d70078" stroke="#d70078" stroke-width=".5"/><path d="M798 214.2l28.7 3.8l-3.8 10l-26.7-3.8zM837.9 220.1l28.6 3.2l-3.1 8l-26.2-2.7zM877.7 224.2l28.7 3.8l-3.1 6.8l-25.6-2.5zM916.2 226.8l28.6 3.1l-2.5 7.5l-26.1-2.5zM954.8 230.3l29.9 2.7l-3.1 6.9l-26.8-2.5z" fill="#ffffff" stroke="#ffffff" stroke-width=".5"/><path d="M826.7 218l11.2 2.1l-0.7 8.5l-14.3-0.6zM866.5 223.3l11.2 0.9l0 8.1l-14.3-1zM906.4 228l9.8-1.2l0 8.1l-12.9-0.1zM944.8 229.9l10 0.4l0 7.1l-12.5 0zM984.7 233l8.8 0.8l-2 7.2l-9.9-1.1z" fill="#28d71e" stroke="#28d71e" stroke-width=".5"/><path d="M834.8 208.5l5 0.6l0 11.1l-5-0.6zM874.6 213.5l5 0.6l0 10.4l-5-0.6zM913.8 217.5l5 0.5l0 10.8l-5-0.4zM952.3 221.2l5 0.4l0 9.1l-5-0.4z" fill="#eb5a00" stroke="#eb5a00" stroke-width=".5"/><path d="M830.6 218.7l-2.7 9.5M834.5 219.5l-1.6 8.9M825.4 221.3l12.3 1.6M824.2 224.6l13.2 1.1M870.4 223.6l-2 8.1M874.3 223.9l-0.9 8.1M865.5 225.9l12.2 1M864.5 228.6l13.2 0.9M909.8 227.6l-2 7.2M913.3 227.2l-1 7.7M905.4 230.2l10.8-0.7M904.4 232.5l11.8-0.4M948.3 230l-1.6 7.4M951.8 230.2l-0.8 7.2M944 232.4l10.8 0.2M943.1 234.8l11.7 0.2" fill="none" stroke="#6e1400" stroke-width="0.62" stroke-opacity="0.9"/><path d="M797 202.2l6 1l6 0.9l6 0.9l6 0.8l6 0.8l6 0.8l6 0.8l6 0.8l6 0.8l6 0.8l6 0.7l6 0.7l6 0.8l6 0.6l6 0.6l6 0.6l6 0.5l6 0.6l6 0.7l6 0.6l6 0.6l6 0.6l6 0.6l6 0.5l6 0.6l6 0.6l6 0.5l6 0.5l6 0.6l6 0.5l6 0.5l6 0.5l6 0.4l-0.4 0" fill="none" stroke="#8a0a00" stroke-width="1.12" stroke-opacity="0.9"/><path d="M798 213.6l6.4 1.1l6.3 1l6.3 1.1l6.4 1l6.4 1l6.3 1l6.4 0.8l6.4 0.7l6.4 0.7l6.4 0.6l6.4 0.7l6.4 0.6l6.4 0.7l6.4 0.8l6.4 0.8l6.4 0.7l6.4 0.8l6.4 0.6l6.4 0.6l6.5 0.4l6.4 0.3l6.4 0.2l6.5 0.2l6.4 0.3l6.4 0.4l6.4 0.5l6.5 0.5l6.4 0.6l6.4 0.6l6.4 0.6M798 214.2l28.7 3.8l-3.8 10l-26.7-3.8l1.8-10M837.9 220.1l28.6 3.2l-3.1 8l-26.2-2.7l0.7-8.5M877.7 224.2l28.7 3.8l-3.1 6.8l-25.6-2.5l0-8.1M916.2 226.8l28.6 3.1l-2.5 7.5l-26.1-2.5l0-8.1M954.8 230.3l29.9 2.7l-3.1 6.9l-26.8-2.5l0-7.1" fill="none" stroke="#6e1400" stroke-width="0.75" stroke-opacity="0.9"/><path d="M800 202.7l-0.6 11.2M810 204.3l-0.6 11.3M820 205.7l-0.6 11.6M830 207l-0.6 11.9M840 208.4l-0.6 11.9M850 209.7l-0.6 11.7M860 210.9l-0.6 11.6M870 212.2l-0.6 11.3M880 213.3l-0.6 11.2M890 214.3l-0.6 11.4M900 215.2l-0.6 11.7M910 216.3l-0.6 11.7M920 217.3l-0.6 11.6M930 218.3l-0.6 11.2M940 219.3l-0.6 10.5M950 220.2l-0.6 10M960 221.1l-0.6 9.8M970 222l-0.6 9.7M980 222.9l-0.6 9.7M990 223.7l-0.6 9.8" fill="none" stroke="#6e1400" stroke-width="0.62" stroke-opacity="0.7"/></svg><div class="abs" style="left:597.80px;top:20.30px;width:19.2px;height:29.40px;background:#0000ff"></div><div class="abs" style="left:597.80px;top:49.40px;width:19.2px;height:29.40px;background:#0055ff"></div><div class="abs" style="left:597.80px;top:78.50px;width:19.2px;height:29.40px;background:#00a0ff"></div><div class="abs" style="left:597.80px;top:107.60px;width:19.2px;height:29.40px;background:#00ffff"></div><div class="abs" style="left:597.80px;top:136.70px;width:19.2px;height:29.40px;background:#00f082"></div><div class="abs" style="left:597.80px;top:165.80px;width:19.2px;height:29.40px;background:#00e800"></div><div class="abs" style="left:597.80px;top:194.90px;width:19.2px;height:29.40px;background:#73f000"></div><div class="abs" style="left:597.80px;top:224.00px;width:19.2px;height:29.40px;background:#ffff00"></div><div class="abs" style="left:597.80px;top:253.10px;width:19.2px;height:29.40px;background:#ffd000"></div><div class="abs" style="left:597.80px;top:282.20px;width:19.2px;height:29.40px;background:#ffa600"></div><div class="abs" style="left:597.80px;top:311.30px;width:19.2px;height:29.40px;background:#ff7f00"></div><div class="abs" style="left:597.80px;top:340.40px;width:19.2px;height:29.40px;background:#ff4200"></div><div class="abs" style="left:597.80px;top:369.50px;width:19.2px;height:29.40px;background:#ff0000"></div><div class="abs" style="left:597.80px;top:398.60px;width:19.2px;height:29.40px;background:#e0006a"></div><div class="abs" style="left:597.80px;top:427.70px;width:19.2px;height:29.40px;background:#c800d2"></div><span class="t" style="right:23.20px;top:41.69px;font-size:13.6px;line-height:16px;color:#1a1a1a;transform:scaleY(1.07);transform-origin:0 12.7px">120.</span><span class="t" style="right:23.20px;top:70.79px;font-size:13.6px;line-height:16px;color:#1a1a1a;transform:scaleY(1.07);transform-origin:0 12.7px">90.</span><span class="t" style="right:23.20px;top:99.89px;font-size:13.6px;line-height:16px;color:#1a1a1a;transform:scaleY(1.07);transform-origin:0 12.7px">60.</span><span class="t" style="right:23.20px;top:128.99px;font-size:13.6px;line-height:16px;color:#1a1a1a;transform:scaleY(1.07);transform-origin:0 12.7px">30.</span><span class="t" style="right:23.20px;top:158.09px;font-size:13.6px;line-height:16px;color:#1a1a1a;transform:scaleY(1.07);transform-origin:0 12.7px">0.</span><span class="t" style="right:23.20px;top:187.19px;font-size:13.6px;line-height:16px;color:#1a1a1a;transform:scaleY(1.07);transform-origin:0 12.7px">-30.</span><span class="t" style="right:23.20px;top:216.29px;font-size:13.6px;line-height:16px;color:#1a1a1a;transform:scaleY(1.07);transform-origin:0 12.7px">-60.</span><span class="t" style="right:23.20px;top:245.39px;font-size:13.6px;line-height:16px;color:#1a1a1a;transform:scaleY(1.07);transform-origin:0 12.7px">-90.</span><span class="t" style="right:23.20px;top:274.49px;font-size:13.6px;line-height:16px;color:#1a1a1a;transform:scaleY(1.07);transform-origin:0 12.7px">-120.</span><span class="t" style="right:23.20px;top:303.59px;font-size:13.6px;line-height:16px;color:#1a1a1a;transform:scaleY(1.07);transform-origin:0 12.7px">-150.</span><span class="t" style="right:23.20px;top:332.69px;font-size:13.6px;line-height:16px;color:#1a1a1a;transform:scaleY(1.07);transform-origin:0 12.7px">-180.</span><span class="t" style="right:23.20px;top:361.79px;font-size:13.6px;line-height:16px;color:#1a1a1a;transform:scaleY(1.07);transform-origin:0 12.7px">-210.</span><span class="t" style="right:23.20px;top:390.89px;font-size:13.6px;line-height:16px;color:#1a1a1a;transform:scaleY(1.07);transform-origin:0 12.7px">-240.</span><span class="t" style="right:23.20px;top:419.99px;font-size:13.6px;line-height:16px;color:#1a1a1a;transform:scaleY(1.07);transform-origin:0 12.7px">-270.</span><span class="t" style="left:594.30px;top:-1.65px;font-size:14.3px;line-height:18px;color:#1a1a1a">E+3</span></div>
<div class="win" style="left:0.00px;top:0.00px;width:407.40px;height:322.60px;"><div class="tb" style="height:25.5px"></div><div class="icon" style="left:7.00px;top:6.00px;width:14.40px;height:14.00px;"><span style="display:block;font-size:13.2px;line-height:14.00px;margin-top:0.3px">S</span></div><span class="t ttl" style="left:26.50px;top:6.37px;font-size:11.2px;line-height:14px;letter-spacing:-0.208px;">Coupled Nonlinear Material Data</span><svg class="abs" style="left:383.8px;top:4.5px" width="16" height="16" viewBox="-8 -8 16 16"><path d="M-4.8 -4.8L4.8 4.8M4.8 -4.8L-4.8 4.8" stroke="#1b1b1b" stroke-width="1.05" fill="none"/></svg><div class="panel" style="left:9.20px;top:34.40px;width:387.60px;height:274.40px;"></div><div class="grp" style="left:23.00px;top:48.50px;width:202.00px;height:40.00px;"></div><span class="t lbl" style="left:30.75px;top:40.96px;font-size:10.8px;line-height:14px;letter-spacing:0.044px;">Material Name</span><div class="fld" style="left:41.50px;top:59.60px;width:172.70px;height:17.60px;"></div><span class="t ar" style="left:46.00px;top:59.96px;font-size:10.5px;line-height:14px;transform:scaleX(0.907);transform-origin:0 0;">4000Psi</span><div class="grp" style="left:234.70px;top:48.50px;width:153.30px;height:40.00px;"></div><span class="t lbl" style="left:242.75px;top:40.96px;font-size:10.8px;line-height:14px;letter-spacing:-0.115px;">Material Type</span><div class="fld" style="left:253.00px;top:59.60px;width:124.00px;height:17.60px;"></div><span class="t ar" style="left:257.00px;top:59.96px;font-size:10.5px;line-height:14px;transform:scaleX(0.915);transform-origin:0 0;">Concrete</span><div class="grp" style="left:23.00px;top:100.50px;width:365.00px;height:76.80px;"></div><span class="t lbl" style="left:31.00px;top:92.96px;font-size:10.8px;line-height:14px;letter-spacing:-0.025px;">2D Coupled Modeling Type</span><div class="radio on" style="left:34.30px;top:114.05px;width:11.40px;height:11.40px;"></div><span class="t " style="left:52.00px;top:112.76px;font-size:10.8px;line-height:14px;">Modified Darwin-Pecknold Concrete</span><div class="radio" style="left:34.30px;top:132.55px;width:11.40px;height:11.40px;"></div><span class="t " style="left:52.00px;top:131.51px;font-size:10.8px;line-height:14px;letter-spacing:0.061px;">None</span><div class="btn" style="left:81.50px;top:148.80px;width:277.50px;height:18.80px;"></div><span class="t ar" style="left:127.00px;top:150.86px;font-size:10.5px;line-height:14px;transform:scaleX(0.950);transform-origin:0 0;">Show Effective Uniaxial Stress-Strain Curves...</span><div class="grp" style="left:23.00px;top:192.20px;width:365.00px;height:81.20px;"></div><span class="t lbl" style="left:31.00px;top:184.16px;font-size:10.8px;line-height:14px;letter-spacing:-0.025px;">3D Coupled Modeling Type</span><div class="radio on" style="left:34.30px;top:207.30px;width:11.40px;height:11.40px;"></div><span class="t " style="left:52.00px;top:206.01px;font-size:10.8px;line-height:14px;letter-spacing:-0.140px;">Faria Concrete Damage Plasticity</span><div class="btn foc" style="left:219.40px;top:204.00px;width:159.60px;height:18.60px;"></div><span class="t ar" style="left:235.00px;top:205.86px;font-size:10.5px;line-height:14px;transform:scaleX(0.915);transform-origin:0 0;">Modify/Show Parameters...</span><div class="radio" style="left:34.30px;top:228.80px;width:11.40px;height:11.40px;"></div><span class="t " style="left:52.00px;top:227.51px;font-size:10.8px;line-height:14px;letter-spacing:0.061px;">None</span><div class="btn" style="left:81.50px;top:245.40px;width:277.50px;height:18.20px;"></div><span class="t ar" style="left:127.00px;top:247.36px;font-size:10.5px;line-height:14px;transform:scaleX(0.950);transform-origin:0 0;">Show Effective Uniaxial Stress-Strain Curves...</span><div class="btn" style="left:135.20px;top:281.40px;width:60.60px;height:18.40px;"></div><span class="t ar" style="left:158.00px;top:282.86px;font-size:10.5px;line-height:14px;transform:scaleX(0.890);transform-origin:0 0;">OK</span></div>
<div class="win" style="left:225.30px;top:59.20px;width:365.90px;height:528.00px;"><div class="tb" style="height:27px"></div><div class="icon" style="left:6.70px;top:5.60px;width:14.40px;height:14.20px;"><span style="display:block;font-size:13.2px;line-height:14.20px;margin-top:0.3px">S</span></div><span class="t ttl" style="left:26.20px;top:5.92px;font-size:11.2px;line-height:14px;letter-spacing:-0.364px;">Faria Concrete Damage Plasticity Parameters</span><svg class="abs" style="left:341.59999999999997px;top:4.3999999999999915px" width="16" height="16" viewBox="-8 -8 16 16"><path d="M-4.5 -4.5L4.5 4.5M4.5 -4.5L-4.5 4.5" stroke="#1b1b1b" stroke-width="1.05" fill="none"/></svg><div class="panel" style="left:9.10px;top:35.10px;width:343.20px;height:480.10px;"></div><div class="grp" style="left:19.10px;top:48.60px;width:195.40px;height:39.50px;"></div><span class="t lbl" style="left:27.45px;top:41.56px;font-size:10.8px;line-height:14px;letter-spacing:-0.018px;">Material Name</span><div class="fld" style="left:37.70px;top:60.40px;width:158.20px;height:17.60px;"></div><span class="t ar" style="left:41.70px;top:60.91px;font-size:10.5px;line-height:14px;transform:scaleX(0.909);transform-origin:0 0;">4000Psi</span><div class="grp" style="left:223.70px;top:48.60px;width:135.00px;height:39.50px;"></div><span class="t lbl" style="left:231.95px;top:41.56px;font-size:10.8px;line-height:14px;letter-spacing:-0.073px;">Material Type</span><div class="fld" style="left:242.70px;top:60.40px;width:98.20px;height:17.60px;"></div><span class="t ar" style="left:246.45px;top:60.91px;font-size:10.5px;line-height:14px;transform:scaleX(0.921);transform-origin:0 0;">Concrete</span><div class="abs" style="left:352.30px;top:39.80px;width:11.40px;height:50.00px;background:#f0f0f0"></div><div class="abs" style="left:351.70px;top:87.80px;width:1.20px;height:2.00px;background:#dfdfdf"></div><div class="grp" style="left:19.10px;top:100.30px;width:323.20px;height:61.00px;"></div><span class="t lbl" style="left:27.45px;top:93.56px;font-size:10.8px;line-height:14px;letter-spacing:-0.191px;">General Plasticity Parameters</span><span class="t " style="left:31.95px;top:116.06px;font-size:10.8px;line-height:14px;letter-spacing:-0.134px;">Plasticity Rate Parameter, beta</span><div class="inp" style="left:250.70px;top:111.80px;width:83.20px;height:18.20px;"></div><span class="t ar" style="left:254.20px;top:113.56px;font-size:10.5px;line-height:14px;transform:scaleX(0.915);transform-origin:0 0;">0.6</span><span class="t " style="left:31.95px;top:139.56px;font-size:10.8px;line-height:14px;letter-spacing:-0.136px;">Biaxial Compressive Stress Ratio,&nbsp; fb0/fc0</span><div class="inp" style="left:250.70px;top:135.80px;width:83.20px;height:18.00px;"></div><span class="t ar" style="left:254.20px;top:137.56px;font-size:10.5px;line-height:14px;transform:scaleX(0.915);transform-origin:0 0;">1.2</span><div class="grp" style="left:19.10px;top:177.50px;width:323.20px;height:121.80px;"></div><span class="t lbl" style="left:27.45px;top:169.81px;font-size:10.8px;line-height:14px;letter-spacing:-0.195px;">Compressive Stress-Strain Curve Behavior</span><div class="radio on" style="left:29.50px;top:190.35px;width:11.40px;height:11.40px;"></div><span class="t " style="left:46.95px;top:189.56px;font-size:10.8px;line-height:14px;letter-spacing:-0.115px;">Auto by Uniaxial Stress-Strain Curve</span><div class="radio" style="left:29.50px;top:209.60px;width:11.40px;height:11.40px;"></div><span class="t " style="left:46.95px;top:208.56px;font-size:10.8px;line-height:14px;letter-spacing:-0.231px;">User Defined Parameters</span><span class="t dis" style="left:66.20px;top:230.31px;font-size:10.8px;line-height:14px;letter-spacing:-0.258px;">Yield Stress,&nbsp; fc0</span><div class="fld" style="left:250.70px;top:226.40px;width:82.60px;height:17.80px;"></div><span class="t dis" style="left:66.20px;top:254.06px;font-size:10.8px;line-height:14px;letter-spacing:-0.144px;">Curve Parameter,&nbsp; An</span><div class="fld" style="left:250.70px;top:250.00px;width:82.60px;height:17.60px;"></div><span class="t dis" style="left:66.20px;top:277.31px;font-size:10.8px;line-height:14px;letter-spacing:-0.202px;">Curve Parameter,&nbsp; Bn</span><div class="fld" style="left:250.70px;top:273.80px;width:82.60px;height:17.40px;"></div><div class="grp" style="left:19.10px;top:314.00px;width:323.20px;height:166.30px;"></div><span class="t lbl" style="left:27.45px;top:306.56px;font-size:10.8px;line-height:14px;letter-spacing:-0.235px;">Tensile Stress-Strain Curve Behavior</span><div class="radio on" style="left:31.25px;top:326.60px;width:11.40px;height:11.40px;"></div><span class="t " style="left:48.70px;top:325.81px;font-size:10.8px;line-height:14px;letter-spacing:-0.115px;">Auto by Uniaxial Stress-Strain Curve</span><div class="radio" style="left:31.25px;top:346.60px;width:11.40px;height:11.40px;"></div><span class="t " style="left:48.70px;top:345.81px;font-size:10.8px;line-height:14px;letter-spacing:-0.115px;">Zero Tension Strength</span><div class="radio" style="left:31.25px;top:367.35px;width:11.40px;height:11.40px;"></div><span class="t " style="left:48.70px;top:366.56px;font-size:10.8px;line-height:14px;letter-spacing:-0.231px;">User Defined Parameters</span><span class="t dis" style="left:67.95px;top:387.06px;font-size:10.8px;line-height:14px;letter-spacing:-0.248px;">Yield Stress,&nbsp; ft</span><div class="fld" style="left:250.70px;top:383.70px;width:82.60px;height:16.80px;"></div><span class="t dis" style="left:67.95px;top:410.56px;font-size:10.8px;line-height:14px;letter-spacing:-0.131px;">Curve Parameter,&nbsp; Ap</span><div class="fld" style="left:250.70px;top:406.90px;width:82.60px;height:17.10px;"></div><div class="chk" style="left:40.40px;top:434.00px;width:12.60px;height:12.60px;"></div><span class="t " style="left:57.95px;top:433.31px;font-size:10.8px;line-height:14px;letter-spacing:-0.177px;">Adjust Curve Based on Fracture Energy</span><span class="t dis" style="left:67.95px;top:455.81px;font-size:10.8px;line-height:14px;letter-spacing:-0.225px;">Fracture Energy,&nbsp; Gf</span><div class="fld" style="left:250.70px;top:452.40px;width:82.60px;height:17.30px;"></div><div class="btn foc" style="left:105.70px;top:488.20px;width:60.60px;height:18.20px;"></div><span class="t ar" style="left:128.70px;top:489.76px;font-size:10.5px;line-height:14px;transform:scaleX(0.873);transform-origin:0 0;">OK</span><div class="btn" style="left:206.70px;top:488.20px;width:60.40px;height:18.20px;"></div><span class="t ar" style="left:220.70px;top:489.76px;font-size:10.5px;line-height:14px;transform:scaleX(0.933);transform-origin:0 0;">Cancel</span></div>
</body></html>
